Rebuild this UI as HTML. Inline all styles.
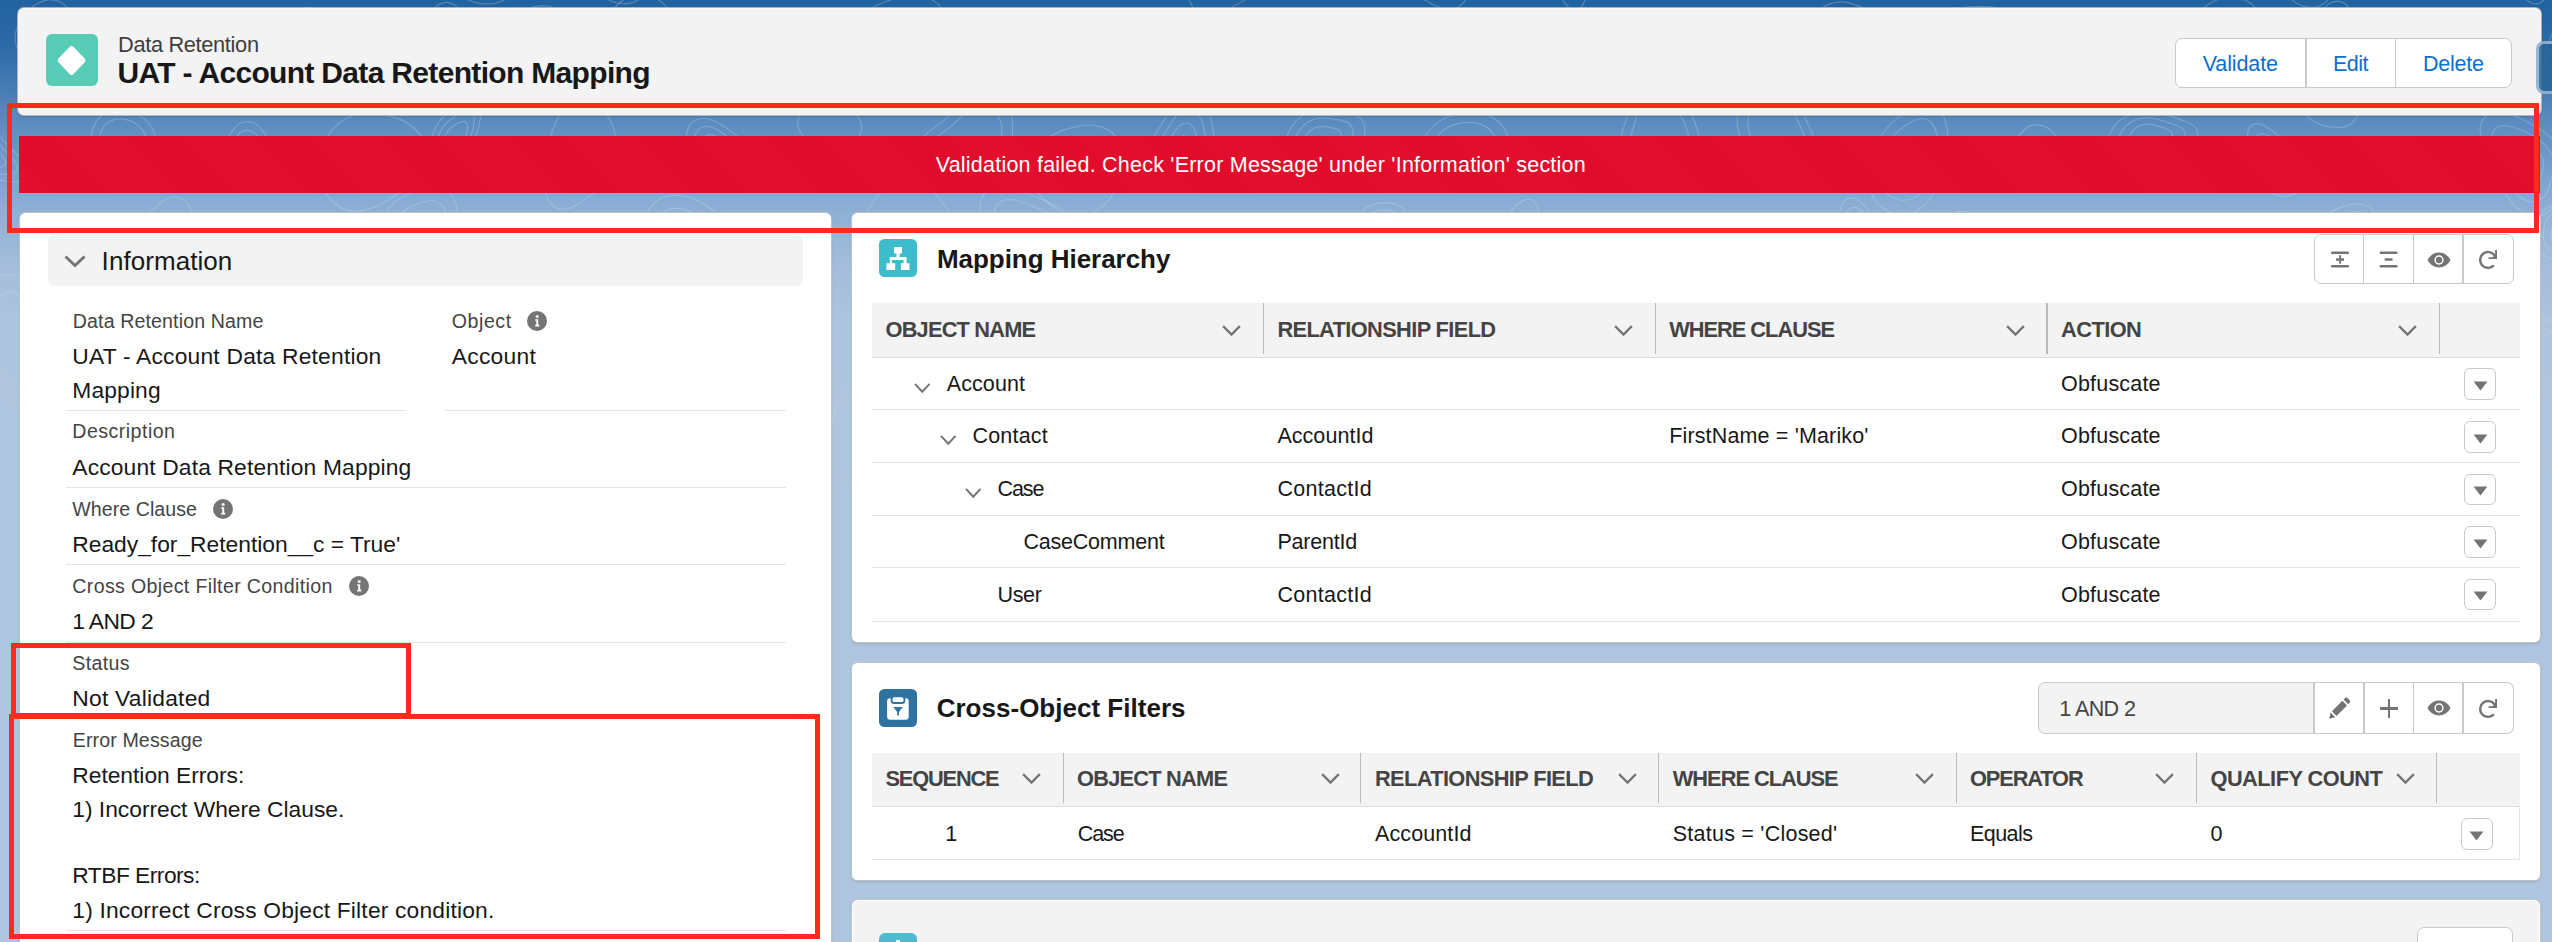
<!DOCTYPE html>
<html><head><meta charset="utf-8"><style>
html,body{margin:0;padding:0;width:2552px;height:942px;overflow:hidden}
body{position:relative;font-family:"Liberation Sans", sans-serif;background-color:#afc4de;background-image:linear-gradient(to bottom,#2162a1 0px,#2c69a7 45px,#4a7fb6 95px,#5a8bbe 120px,#6692c3 140px,#83a8d1 190px,#8fb1d5 215px,#a4bddb 265px,#adc3de 320px,#afc4de 400px)}
.t{position:absolute;white-space:pre}
</style></head><body>

<svg style="position:absolute;left:0;top:0" width="2552" height="600"><defs><linearGradient id="fg" x1="0" y1="0" x2="0" y2="1"><stop offset="0" stop-color="#fff" stop-opacity="1"/><stop offset="0.4" stop-color="#fff" stop-opacity="0.75"/><stop offset="0.85" stop-color="#fff" stop-opacity="0"/></linearGradient><mask id="fm"><rect width="2552" height="600" fill="url(#fg)"/></mask></defs><g mask="url(#fm)" fill="none" stroke="rgba(255,255,255,0.24)" stroke-width="1.15"><path d="M25.4,-18.9 Q17.1,-13.2 9.0,-7.8 Q0.9,-2.5 -8.6,0.8 Q-18.1,4.1 -24.8,1.7 Q-31.6,-0.8 -33.4,-6.8 Q-35.3,-12.9 -35.6,-19.4 Q-35.9,-26.0 -33.5,-34.1 Q-31.1,-42.3 -22.9,-50.1 Q-14.7,-57.9 -4.8,-60.6 Q5.1,-63.3 12.3,-62.7 Q19.5,-62.2 27.0,-62.3 Q34.5,-62.4 41.7,-59.8 Q49.0,-57.2 48.9,-49.3 Q48.8,-41.4 41.2,-33.0 Q33.7,-24.7 25.4,-18.9Z"/><path d="M19.6,-22.6 Q13.4,-18.3 7.4,-14.4 Q1.4,-10.4 -5.6,-8.0 Q-12.6,-5.5 -17.6,-7.3 Q-22.6,-9.2 -24.0,-13.6 Q-25.4,-18.1 -25.6,-22.9 Q-25.8,-27.8 -24.0,-33.8 Q-22.2,-39.9 -16.2,-45.7 Q-10.1,-51.4 -2.8,-53.4 Q4.6,-55.4 9.9,-55.0 Q15.2,-54.6 20.7,-54.7 Q26.3,-54.8 31.6,-52.8 Q37.0,-50.9 36.9,-45.1 Q36.9,-39.2 31.3,-33.0 Q25.7,-26.8 19.6,-22.6Z"/><path d="M300.1,-69.0 Q299.8,-58.8 295.8,-49.6 Q291.8,-40.4 283.5,-33.7 Q275.1,-27.1 264.0,-23.9 Q252.9,-20.8 240.2,-21.2 Q227.5,-21.6 215.5,-27.6 Q203.5,-33.6 198.2,-44.9 Q193.0,-56.2 196.6,-66.9 Q200.1,-77.7 206.4,-85.3 Q212.7,-92.8 219.0,-100.3 Q225.3,-107.8 235.7,-114.2 Q246.1,-120.6 259.8,-119.7 Q273.6,-118.8 283.5,-110.0 Q293.4,-101.1 296.9,-90.2 Q300.4,-79.2 300.1,-69.0Z"/><path d="M287.0,-68.8 Q286.8,-61.3 283.8,-54.5 Q280.9,-47.6 274.7,-42.7 Q268.5,-37.8 260.3,-35.5 Q252.1,-33.2 242.7,-33.4 Q233.3,-33.7 224.4,-38.2 Q215.5,-42.7 211.6,-51.0 Q207.8,-59.3 210.4,-67.3 Q213.0,-75.3 217.7,-80.9 Q222.3,-86.4 227.0,-92.0 Q231.7,-97.5 239.3,-102.3 Q247.0,-107.0 257.2,-106.3 Q267.4,-105.7 274.7,-99.1 Q282.0,-92.6 284.6,-84.5 Q287.2,-76.4 287.0,-68.8Z"/><path d="M273.9,-68.7 Q273.7,-63.8 271.8,-59.3 Q269.9,-54.9 265.9,-51.7 Q261.9,-48.5 256.6,-47.0 Q251.2,-45.5 245.1,-45.7 Q239.0,-45.9 233.3,-48.8 Q227.5,-51.7 225.0,-57.1 Q222.5,-62.5 224.2,-67.7 Q225.9,-72.8 228.9,-76.5 Q231.9,-80.1 235.0,-83.7 Q238.0,-87.3 243.0,-90.3 Q248.0,-93.4 254.5,-93.0 Q261.1,-92.5 265.9,-88.3 Q270.7,-84.1 272.3,-78.8 Q274.0,-73.5 273.9,-68.7Z"/><path d="M260.8,-68.5 Q260.7,-66.2 259.8,-64.2 Q259.0,-62.2 257.1,-60.7 Q255.3,-59.3 252.8,-58.6 Q250.4,-57.9 247.6,-58.0 Q244.8,-58.0 242.2,-59.4 Q239.5,-60.7 238.4,-63.2 Q237.2,-65.7 238.0,-68.0 Q238.8,-70.4 240.2,-72.0 Q241.5,-73.7 242.9,-75.4 Q244.3,-77.0 246.6,-78.4 Q248.9,-79.8 251.9,-79.6 Q254.9,-79.4 257.1,-77.5 Q259.3,-75.5 260.1,-73.1 Q260.8,-70.7 260.8,-68.5Z"/><path d="M376.2,-73.1 Q375.6,-61.0 370.1,-50.0 Q364.7,-38.9 358.1,-33.7 Q351.5,-28.4 345.8,-26.4 Q340.2,-24.4 334.9,-24.6 Q329.6,-24.8 325.6,-29.8 Q321.6,-34.7 320.4,-44.1 Q319.2,-53.4 320.5,-64.5 Q321.8,-75.7 325.6,-87.3 Q329.4,-98.9 335.7,-106.9 Q342.1,-114.9 348.2,-115.3 Q354.4,-115.8 358.5,-111.7 Q362.6,-107.6 366.3,-103.5 Q370.0,-99.4 373.4,-92.3 Q376.8,-85.2 376.2,-73.1Z"/><path d="M368.6,-72.0 Q368.2,-63.0 364.1,-54.9 Q360.1,-46.7 355.2,-42.8 Q350.4,-38.9 346.2,-37.4 Q342.0,-36.0 338.0,-36.1 Q334.1,-36.2 331.2,-39.9 Q328.2,-43.6 327.3,-50.5 Q326.5,-57.4 327.4,-65.7 Q328.4,-73.9 331.2,-82.5 Q334.0,-91.0 338.7,-97.0 Q343.4,-102.9 347.9,-103.2 Q352.5,-103.5 355.5,-100.5 Q358.6,-97.5 361.3,-94.5 Q364.0,-91.4 366.6,-86.2 Q369.1,-81.0 368.6,-72.0Z"/><path d="M361.1,-70.9 Q360.8,-65.1 358.2,-59.8 Q355.5,-54.5 352.4,-51.9 Q349.2,-49.4 346.5,-48.5 Q343.8,-47.5 341.2,-47.6 Q338.7,-47.7 336.8,-50.1 Q334.9,-52.4 334.3,-56.9 Q333.7,-61.4 334.3,-66.8 Q334.9,-72.1 336.8,-77.7 Q338.6,-83.2 341.6,-87.1 Q344.7,-90.9 347.6,-91.1 Q350.6,-91.3 352.6,-89.4 Q354.5,-87.4 356.3,-85.5 Q358.1,-83.5 359.7,-80.1 Q361.4,-76.7 361.1,-70.9Z"/><path d="M353.5,-69.7 Q353.4,-67.1 352.2,-64.7 Q351.0,-62.2 349.5,-61.1 Q348.1,-59.9 346.8,-59.5 Q345.6,-59.0 344.4,-59.1 Q343.2,-59.1 342.4,-60.2 Q341.5,-61.3 341.2,-63.4 Q341.0,-65.4 341.2,-67.9 Q341.5,-70.3 342.4,-72.9 Q343.2,-75.4 344.6,-77.2 Q346.0,-78.9 347.3,-79.0 Q348.7,-79.1 349.6,-78.2 Q350.5,-77.3 351.3,-76.4 Q352.1,-75.5 352.9,-74.0 Q353.6,-72.4 353.5,-69.7Z"/><path d="M455.7,-8.0 Q442.6,-18.4 436.0,-32.6 Q429.5,-46.8 430.0,-57.3 Q430.4,-67.8 431.8,-75.9 Q433.2,-84.1 436.1,-92.2 Q439.0,-100.3 447.7,-103.3 Q456.4,-106.4 468.9,-100.9 Q481.4,-95.5 493.0,-84.9 Q504.5,-74.3 512.9,-61.7 Q521.3,-49.1 524.2,-37.1 Q527.2,-25.1 523.7,-17.2 Q520.3,-9.4 514.0,-5.4 Q507.7,-1.4 500.0,1.7 Q492.4,4.8 480.7,3.6 Q468.9,2.3 455.7,-8.0Z"/><path d="M640.3,-1.5 Q632.5,4.4 622.8,3.8 Q613.1,3.2 603.7,-2.8 Q594.2,-8.7 586.4,-19.3 Q578.6,-29.8 575.2,-43.6 Q571.9,-57.4 574.6,-69.7 Q577.3,-81.9 583.2,-89.9 Q589.1,-97.9 596.1,-103.8 Q603.1,-109.7 612.4,-112.4 Q621.7,-115.1 632.1,-109.7 Q642.4,-104.3 649.1,-91.7 Q655.7,-79.0 657.3,-65.5 Q658.8,-51.9 657.5,-40.0 Q656.1,-28.0 652.1,-17.7 Q648.0,-7.4 640.3,-1.5Z"/><path d="M731.5,-41.4 Q733.4,-33.6 730.2,-24.9 Q727.0,-16.2 719.9,-12.5 Q712.9,-8.8 706.5,-9.4 Q700.1,-9.9 694.3,-11.0 Q688.5,-12.1 683.3,-16.1 Q678.1,-20.0 677.0,-27.9 Q675.9,-35.7 678.5,-43.3 Q681.1,-50.8 684.1,-57.7 Q687.2,-64.6 691.8,-72.1 Q696.4,-79.6 703.8,-82.6 Q711.2,-85.5 716.6,-80.4 Q722.1,-75.2 723.8,-67.9 Q725.6,-60.7 727.6,-54.9 Q729.6,-49.2 731.5,-41.4Z"/><path d="M724.6,-41.8 Q726.0,-36.1 723.6,-29.6 Q721.3,-23.2 716.0,-20.4 Q710.8,-17.7 706.1,-18.1 Q701.3,-18.5 697.0,-19.3 Q692.7,-20.1 688.9,-23.1 Q685.1,-26.0 684.3,-31.8 Q683.4,-37.6 685.4,-43.2 Q687.3,-48.8 689.6,-53.9 Q691.8,-59.0 695.2,-64.5 Q698.6,-70.1 704.1,-72.3 Q709.5,-74.5 713.6,-70.7 Q717.6,-66.9 718.9,-61.5 Q720.2,-56.1 721.7,-51.8 Q723.2,-47.6 724.6,-41.8Z"/><path d="M717.7,-42.3 Q718.6,-38.5 717.1,-34.3 Q715.5,-30.1 712.1,-28.4 Q708.7,-26.6 705.7,-26.9 Q702.6,-27.1 699.8,-27.6 Q697.0,-28.2 694.5,-30.1 Q692.0,-32.0 691.5,-35.7 Q691.0,-39.5 692.3,-43.1 Q693.5,-46.8 695.0,-50.1 Q696.4,-53.4 698.6,-57.0 Q700.8,-60.6 704.4,-62.0 Q707.9,-63.4 710.5,-61.0 Q713.2,-58.5 714.0,-55.0 Q714.8,-51.5 715.8,-48.7 Q716.8,-46.0 717.7,-42.3Z"/><path d="M913.5,-39.1 Q912.7,-46.7 914.6,-53.5 Q916.5,-60.4 919.3,-67.4 Q922.1,-74.5 927.9,-81.5 Q933.6,-88.5 942.8,-89.8 Q951.9,-91.2 958.7,-84.5 Q965.4,-77.9 967.0,-69.5 Q968.7,-61.1 969.8,-54.8 Q970.9,-48.5 972.7,-40.9 Q974.5,-33.3 972.0,-24.7 Q969.4,-16.2 961.6,-12.0 Q953.9,-7.8 945.4,-9.1 Q937.0,-10.5 930.2,-14.7 Q923.4,-18.9 918.8,-25.2 Q914.3,-31.5 913.5,-39.1Z"/><path d="M921.4,-41.3 Q920.8,-46.9 922.2,-52.0 Q923.6,-57.1 925.7,-62.3 Q927.8,-67.5 932.0,-72.7 Q936.3,-77.9 943.1,-78.9 Q949.8,-79.9 954.8,-74.9 Q959.8,-70.0 961.0,-63.8 Q962.2,-57.6 963.1,-52.9 Q963.9,-48.3 965.2,-42.6 Q966.6,-37.0 964.7,-30.7 Q962.8,-24.3 957.0,-21.2 Q951.3,-18.1 945.0,-19.1 Q938.8,-20.2 933.8,-23.2 Q928.7,-26.3 925.3,-31.0 Q922.0,-35.7 921.4,-41.3Z"/><path d="M1185.4,-28.5 Q1186.6,-45.0 1189.0,-57.9 Q1191.4,-70.8 1194.2,-84.5 Q1197.0,-98.2 1204.4,-107.6 Q1211.7,-117.0 1221.0,-114.2 Q1230.3,-111.4 1237.5,-103.0 Q1244.6,-94.6 1251.8,-85.7 Q1258.9,-76.8 1264.3,-62.3 Q1269.8,-47.8 1267.1,-31.7 Q1264.3,-15.5 1255.8,-8.1 Q1247.2,-0.7 1239.9,2.8 Q1232.7,6.2 1224.9,12.4 Q1217.2,18.7 1206.8,17.8 Q1196.4,16.9 1190.3,2.5 Q1184.2,-11.9 1185.4,-28.5Z"/><path d="M1325.3,-23.4 Q1316.9,-18.6 1307.4,-15.1 Q1298.0,-11.7 1288.5,-10.7 Q1279.0,-9.6 1273.3,-12.6 Q1267.5,-15.6 1268.1,-21.3 Q1268.6,-27.0 1272.1,-32.6 Q1275.7,-38.1 1279.7,-43.7 Q1283.6,-49.3 1290.8,-55.5 Q1298.0,-61.7 1308.5,-65.4 Q1318.9,-69.2 1327.2,-68.2 Q1335.4,-67.2 1339.4,-63.5 Q1343.4,-59.8 1345.2,-55.4 Q1347.0,-51.1 1345.9,-45.6 Q1344.9,-40.2 1339.3,-34.2 Q1333.8,-28.3 1325.3,-23.4Z"/><path d="M1320.8,-27.5 Q1314.6,-23.9 1307.6,-21.4 Q1300.6,-18.9 1293.5,-18.1 Q1286.5,-17.3 1282.3,-19.5 Q1278.0,-21.7 1278.4,-25.9 Q1278.8,-30.2 1281.4,-34.3 Q1284.1,-38.4 1287.0,-42.5 Q1290.0,-46.6 1295.3,-51.2 Q1300.6,-55.8 1308.3,-58.6 Q1316.0,-61.4 1322.2,-60.6 Q1328.3,-59.9 1331.2,-57.1 Q1334.2,-54.4 1335.5,-51.2 Q1336.8,-48.0 1336.1,-43.9 Q1335.3,-39.9 1331.2,-35.5 Q1327.1,-31.1 1320.8,-27.5Z"/><path d="M1316.3,-31.6 Q1312.2,-29.2 1307.7,-27.6 Q1303.1,-26.0 1298.6,-25.5 Q1294.0,-24.9 1291.3,-26.4 Q1288.5,-27.8 1288.8,-30.6 Q1289.1,-33.3 1290.7,-36.0 Q1292.4,-38.6 1294.4,-41.3 Q1296.3,-44.0 1299.7,-47.0 Q1303.2,-49.9 1308.2,-51.7 Q1313.2,-53.6 1317.1,-53.1 Q1321.1,-52.6 1323.0,-50.8 Q1325.0,-49.0 1325.8,-46.9 Q1326.7,-44.8 1326.2,-42.2 Q1325.7,-39.6 1323.0,-36.8 Q1320.3,-33.9 1316.3,-31.6Z"/><path d="M1468.9,-10.2 Q1467.9,-0.1 1460.3,5.5 Q1452.7,11.2 1440.3,7.5 Q1427.8,3.9 1417.5,-5.8 Q1407.1,-15.5 1400.4,-24.6 Q1393.6,-33.7 1386.3,-42.7 Q1379.0,-51.8 1373.2,-63.7 Q1367.4,-75.6 1369.8,-85.6 Q1372.1,-95.6 1382.2,-97.9 Q1392.2,-100.2 1403.8,-96.2 Q1415.5,-92.2 1425.8,-85.5 Q1436.2,-78.8 1444.7,-70.0 Q1453.2,-61.2 1458.8,-51.2 Q1464.4,-41.1 1467.1,-30.7 Q1469.9,-20.3 1468.9,-10.2Z"/><path d="M1456.5,-19.7 Q1455.8,-12.2 1450.2,-8.0 Q1444.6,-3.8 1435.4,-6.5 Q1426.2,-9.2 1418.5,-16.4 Q1410.8,-23.6 1405.8,-30.3 Q1400.8,-37.0 1395.4,-43.7 Q1390.0,-50.4 1385.7,-59.2 Q1381.5,-68.0 1383.2,-75.4 Q1384.9,-82.8 1392.3,-84.5 Q1399.8,-86.2 1408.4,-83.3 Q1417.0,-80.4 1424.7,-75.4 Q1432.3,-70.4 1438.6,-63.9 Q1444.9,-57.4 1449.1,-50.0 Q1453.2,-42.5 1455.2,-34.8 Q1457.2,-27.1 1456.5,-19.7Z"/><path d="M1554.3,-22.1 Q1552.5,-30.1 1552.8,-38.0 Q1553.1,-45.9 1555.4,-51.7 Q1557.7,-57.5 1560.7,-62.1 Q1563.7,-66.8 1567.9,-70.4 Q1572.1,-74.1 1577.5,-72.2 Q1583.0,-70.3 1586.3,-61.6 Q1589.7,-52.8 1589.5,-43.6 Q1589.2,-34.4 1588.4,-27.8 Q1587.5,-21.3 1587.2,-13.7 Q1586.8,-6.2 1584.4,1.2 Q1581.9,8.6 1576.9,9.8 Q1571.8,11.0 1567.1,5.8 Q1562.4,0.5 1559.3,-6.8 Q1556.1,-14.1 1554.3,-22.1Z"/><path d="M1558.9,-24.8 Q1557.6,-30.7 1557.8,-36.5 Q1558.0,-42.4 1559.7,-46.7 Q1561.4,-51.0 1563.6,-54.4 Q1565.8,-57.8 1568.9,-60.5 Q1572.1,-63.3 1576.1,-61.9 Q1580.1,-60.5 1582.6,-54.0 Q1585.1,-47.5 1584.9,-40.7 Q1584.7,-33.9 1584.1,-29.0 Q1583.4,-24.2 1583.2,-18.6 Q1583.0,-13.0 1581.1,-7.5 Q1579.3,-2.0 1575.6,-1.2 Q1571.9,-0.3 1568.4,-4.2 Q1564.9,-8.0 1562.6,-13.5 Q1560.2,-18.9 1558.9,-24.8Z"/><path d="M1563.5,-27.5 Q1562.6,-31.3 1562.8,-35.1 Q1562.9,-38.9 1564.0,-41.7 Q1565.1,-44.5 1566.6,-46.7 Q1568.0,-48.9 1570.0,-50.6 Q1572.0,-52.4 1574.6,-51.5 Q1577.2,-50.6 1578.9,-46.4 Q1580.5,-42.2 1580.4,-37.8 Q1580.3,-33.4 1579.8,-30.2 Q1579.4,-27.1 1579.3,-23.4 Q1579.1,-19.8 1577.9,-16.3 Q1576.7,-12.7 1574.3,-12.1 Q1571.9,-11.6 1569.7,-14.1 Q1567.4,-16.6 1565.9,-20.1 Q1564.4,-23.6 1563.5,-27.5Z"/><path d="M1568.1,-30.1 Q1567.7,-31.9 1567.8,-33.6 Q1567.8,-35.4 1568.3,-36.6 Q1568.8,-37.9 1569.5,-38.9 Q1570.1,-39.9 1571.1,-40.8 Q1572.0,-41.6 1573.2,-41.2 Q1574.4,-40.7 1575.1,-38.8 Q1575.9,-36.9 1575.8,-34.9 Q1575.8,-32.8 1575.6,-31.4 Q1575.4,-29.9 1575.3,-28.3 Q1575.2,-26.6 1574.7,-25.0 Q1574.2,-23.4 1573.0,-23.1 Q1571.9,-22.8 1570.9,-24.0 Q1569.9,-25.1 1569.2,-26.8 Q1568.5,-28.4 1568.1,-30.1Z"/><path d="M1693.6,-19.3 Q1681.9,-15.5 1668.3,-19.0 Q1654.6,-22.5 1648.8,-32.6 Q1642.9,-42.6 1644.2,-51.6 Q1645.6,-60.6 1646.0,-68.2 Q1646.5,-75.9 1648.9,-84.8 Q1651.3,-93.8 1661.6,-99.0 Q1671.9,-104.3 1684.8,-102.0 Q1697.8,-99.7 1708.1,-94.5 Q1718.4,-89.2 1727.9,-83.0 Q1737.4,-76.7 1742.7,-67.7 Q1748.1,-58.6 1743.9,-50.0 Q1739.7,-41.5 1730.8,-36.7 Q1721.9,-32.0 1713.6,-27.6 Q1705.3,-23.2 1693.6,-19.3Z"/><path d="M1692.7,-29.8 Q1684.1,-27.0 1674.0,-29.6 Q1663.9,-32.2 1659.5,-39.6 Q1655.2,-47.1 1656.2,-53.7 Q1657.2,-60.4 1657.5,-66.0 Q1657.9,-71.7 1659.6,-78.3 Q1661.4,-84.9 1669.0,-88.8 Q1676.7,-92.7 1686.2,-91.0 Q1695.8,-89.3 1703.5,-85.4 Q1711.1,-81.5 1718.1,-76.9 Q1725.1,-72.3 1729.1,-65.6 Q1733.0,-58.9 1729.9,-52.6 Q1726.8,-46.2 1720.3,-42.7 Q1713.7,-39.2 1707.5,-35.9 Q1701.4,-32.7 1692.7,-29.8Z"/><path d="M1691.8,-40.3 Q1686.2,-38.5 1679.7,-40.2 Q1673.1,-41.9 1670.3,-46.7 Q1667.5,-51.5 1668.2,-55.8 Q1668.8,-60.1 1669.0,-63.8 Q1669.2,-67.5 1670.4,-71.8 Q1671.5,-76.1 1676.5,-78.6 Q1681.4,-81.1 1687.6,-80.0 Q1693.9,-78.9 1698.8,-76.4 Q1703.8,-73.9 1708.3,-70.9 Q1712.8,-67.9 1715.4,-63.5 Q1718.0,-59.2 1716.0,-55.1 Q1714.0,-51.0 1709.7,-48.7 Q1705.4,-46.4 1701.4,-44.3 Q1697.5,-42.2 1691.8,-40.3Z"/><path d="M1691.0,-50.8 Q1688.4,-50.0 1685.4,-50.8 Q1682.4,-51.5 1681.1,-53.8 Q1679.8,-56.0 1680.1,-57.9 Q1680.4,-59.9 1680.5,-61.6 Q1680.6,-63.3 1681.1,-65.2 Q1681.7,-67.2 1683.9,-68.4 Q1686.2,-69.5 1689.0,-69.0 Q1691.9,-68.5 1694.2,-67.4 Q1696.4,-66.2 1698.5,-64.8 Q1700.6,-63.5 1701.8,-61.5 Q1703.0,-59.5 1702.0,-57.6 Q1701.1,-55.7 1699.2,-54.7 Q1697.2,-53.6 1695.4,-52.6 Q1693.5,-51.7 1691.0,-50.8Z"/><path d="M1839.7,-39.5 Q1832.0,-26.6 1817.7,-17.6 Q1803.4,-8.5 1790.9,-7.6 Q1778.5,-6.7 1770.4,-10.1 Q1762.3,-13.5 1757.2,-19.2 Q1752.1,-24.9 1752.6,-34.3 Q1753.0,-43.6 1759.4,-54.3 Q1765.7,-65.0 1774.6,-75.5 Q1783.6,-85.9 1795.8,-96.6 Q1808.0,-107.3 1822.6,-113.2 Q1837.2,-119.1 1845.8,-114.3 Q1854.3,-109.5 1853.7,-99.1 Q1853.1,-88.7 1851.3,-80.1 Q1849.5,-71.4 1848.5,-61.8 Q1847.4,-52.3 1839.7,-39.5Z"/><path d="M1830.9,-44.5 Q1825.1,-35.0 1814.6,-28.3 Q1804.0,-21.6 1794.8,-20.9 Q1785.6,-20.2 1779.6,-22.7 Q1773.6,-25.2 1769.8,-29.5 Q1766.0,-33.7 1766.4,-40.7 Q1766.7,-47.6 1771.4,-55.5 Q1776.1,-63.4 1782.7,-71.1 Q1789.3,-78.9 1798.3,-86.8 Q1807.4,-94.7 1818.2,-99.0 Q1829.0,-103.4 1835.3,-99.9 Q1841.7,-96.3 1841.2,-88.6 Q1840.8,-80.9 1839.4,-74.5 Q1838.1,-68.1 1837.3,-61.1 Q1836.6,-54.0 1830.9,-44.5Z"/><path d="M1962.9,-71.9 Q1960.4,-64.5 1958.3,-59.5 Q1956.2,-54.4 1954.8,-47.6 Q1953.3,-40.7 1949.1,-34.1 Q1945.0,-27.5 1939.4,-28.2 Q1933.9,-28.8 1930.8,-35.4 Q1927.7,-42.0 1926.6,-48.7 Q1925.5,-55.5 1924.9,-62.0 Q1924.3,-68.4 1925.7,-75.2 Q1927.1,-82.0 1930.6,-86.7 Q1934.2,-91.4 1938.4,-94.3 Q1942.6,-97.2 1947.6,-99.1 Q1952.7,-101.0 1957.8,-98.3 Q1962.8,-95.5 1964.1,-87.4 Q1965.5,-79.3 1962.9,-71.9Z"/><path d="M1957.9,-70.4 Q1956.0,-64.9 1954.5,-61.2 Q1952.9,-57.5 1951.9,-52.4 Q1950.8,-47.3 1947.7,-42.5 Q1944.6,-37.6 1940.5,-38.1 Q1936.4,-38.6 1934.1,-43.4 Q1931.9,-48.3 1931.0,-53.3 Q1930.2,-58.3 1929.8,-63.1 Q1929.4,-67.9 1930.4,-72.9 Q1931.4,-77.9 1934.0,-81.4 Q1936.7,-84.9 1939.8,-87.1 Q1942.9,-89.2 1946.6,-90.6 Q1950.3,-92.0 1954.1,-90.0 Q1957.8,-87.9 1958.8,-81.9 Q1959.8,-75.9 1957.9,-70.4Z"/><path d="M1952.9,-69.0 Q1951.7,-65.4 1950.7,-63.0 Q1949.7,-60.6 1949.0,-57.3 Q1948.3,-54.0 1946.3,-50.8 Q1944.3,-47.7 1941.6,-48.0 Q1939.0,-48.3 1937.5,-51.5 Q1936.0,-54.6 1935.5,-57.9 Q1934.9,-61.1 1934.7,-64.2 Q1934.4,-67.3 1935.0,-70.6 Q1935.7,-73.8 1937.4,-76.1 Q1939.1,-78.4 1941.1,-79.8 Q1943.1,-81.2 1945.6,-82.1 Q1948.0,-83.0 1950.4,-81.7 Q1952.9,-80.3 1953.5,-76.4 Q1954.1,-72.5 1952.9,-69.0Z"/><path d="M1947.9,-67.5 Q1947.3,-65.9 1946.9,-64.8 Q1946.4,-63.7 1946.1,-62.2 Q1945.8,-60.7 1944.9,-59.2 Q1943.9,-57.8 1942.7,-57.9 Q1941.5,-58.1 1940.8,-59.5 Q1940.1,-61.0 1939.9,-62.4 Q1939.7,-63.9 1939.5,-65.4 Q1939.4,-66.8 1939.7,-68.3 Q1940.0,-69.8 1940.8,-70.8 Q1941.6,-71.8 1942.5,-72.5 Q1943.4,-73.1 1944.5,-73.5 Q1945.6,-74.0 1946.8,-73.3 Q1947.9,-72.7 1948.2,-71.0 Q1948.4,-69.2 1947.9,-67.5Z"/><path d="M2173.6,-16.4 Q2167.8,-16.3 2161.3,-17.2 Q2154.8,-18.1 2149.5,-21.1 Q2144.2,-24.1 2142.0,-28.0 Q2139.9,-32.0 2140.3,-35.9 Q2140.7,-39.7 2143.8,-43.0 Q2146.9,-46.3 2153.0,-47.7 Q2159.1,-49.0 2165.7,-47.9 Q2172.3,-46.7 2177.6,-44.8 Q2183.0,-42.9 2188.6,-40.6 Q2194.2,-38.4 2199.0,-34.7 Q2203.8,-30.9 2203.4,-26.6 Q2202.9,-22.3 2197.3,-19.9 Q2191.8,-17.6 2185.6,-17.1 Q2179.4,-16.6 2173.6,-16.4Z"/><path d="M2278.1,-13.4 Q2272.4,-19.1 2265.1,-25.5 Q2257.9,-31.8 2255.4,-42.1 Q2252.9,-52.4 2259.0,-60.9 Q2265.2,-69.4 2274.0,-73.3 Q2282.8,-77.3 2291.6,-80.4 Q2300.3,-83.5 2310.6,-83.2 Q2320.9,-82.9 2327.9,-75.2 Q2334.9,-67.5 2335.4,-57.7 Q2335.8,-47.9 2335.6,-39.7 Q2335.3,-31.6 2335.5,-21.3 Q2335.7,-11.0 2329.1,-1.6 Q2322.6,7.8 2311.1,7.4 Q2299.7,7.1 2291.7,-0.3 Q2283.8,-7.6 2278.1,-13.4Z"/><path d="M2283.8,-20.4 Q2279.6,-24.7 2274.2,-29.4 Q2268.8,-34.1 2267.0,-41.7 Q2265.1,-49.3 2269.7,-55.6 Q2274.2,-61.9 2280.8,-64.8 Q2287.3,-67.8 2293.8,-70.0 Q2300.2,-72.3 2307.9,-72.1 Q2315.5,-71.9 2320.7,-66.2 Q2325.9,-60.5 2326.2,-53.2 Q2326.5,-46.0 2326.3,-39.9 Q2326.2,-33.9 2326.3,-26.3 Q2326.4,-18.7 2321.6,-11.7 Q2316.7,-4.7 2308.2,-5.0 Q2299.8,-5.3 2293.9,-10.7 Q2288.0,-16.2 2283.8,-20.4Z"/><path d="M2289.5,-27.5 Q2286.7,-30.3 2283.3,-33.3 Q2279.8,-36.4 2278.6,-41.3 Q2277.4,-46.2 2280.3,-50.3 Q2283.3,-54.4 2287.5,-56.3 Q2291.8,-58.2 2296.0,-59.7 Q2300.2,-61.2 2305.1,-61.0 Q2310.0,-60.9 2313.4,-57.2 Q2316.8,-53.5 2317.0,-48.8 Q2317.2,-44.1 2317.1,-40.1 Q2317.0,-36.2 2317.0,-31.3 Q2317.1,-26.3 2314.0,-21.8 Q2310.9,-17.3 2305.3,-17.5 Q2299.8,-17.7 2296.0,-21.2 Q2292.2,-24.7 2289.5,-27.5Z"/><path d="M2381.0,-11.9 Q2373.3,-10.2 2367.4,-13.7 Q2361.5,-17.3 2363.8,-26.8 Q2366.0,-36.3 2373.4,-44.7 Q2380.9,-53.1 2387.3,-58.7 Q2393.7,-64.3 2400.1,-70.5 Q2406.5,-76.6 2414.6,-80.7 Q2422.7,-84.8 2428.5,-82.5 Q2434.3,-80.2 2436.2,-73.9 Q2438.0,-67.6 2437.8,-60.2 Q2437.6,-52.9 2434.2,-44.1 Q2430.8,-35.4 2423.4,-28.3 Q2415.9,-21.3 2408.5,-18.9 Q2401.1,-16.5 2394.9,-15.1 Q2388.7,-13.7 2381.0,-11.9Z"/><path d="M2508.9,-32.7 Q2506.0,-43.3 2506.4,-54.0 Q2506.7,-64.7 2510.0,-71.8 Q2513.2,-79.0 2517.2,-83.7 Q2521.1,-88.3 2526.0,-92.3 Q2530.9,-96.3 2537.4,-95.0 Q2543.9,-93.7 2548.9,-83.9 Q2553.9,-74.1 2554.7,-62.0 Q2555.5,-50.0 2554.3,-40.7 Q2553.1,-31.5 2551.8,-22.7 Q2550.6,-13.9 2547.4,-6.0 Q2544.2,1.9 2538.4,3.6 Q2532.7,5.3 2526.8,0.1 Q2520.9,-5.1 2516.3,-13.6 Q2511.7,-22.1 2508.9,-32.7Z"/><path d="M2745.5,6.2 Q2737.0,5.9 2731.9,-1.0 Q2726.9,-7.8 2726.3,-18.9 Q2725.7,-29.9 2728.0,-42.4 Q2730.2,-55.0 2735.9,-69.0 Q2741.6,-83.1 2751.7,-94.3 Q2761.9,-105.5 2772.1,-107.7 Q2782.4,-109.8 2789.0,-105.2 Q2795.5,-100.6 2800.5,-95.0 Q2805.5,-89.5 2809.6,-81.2 Q2813.6,-72.8 2812.0,-59.2 Q2810.4,-45.6 2802.2,-32.1 Q2793.9,-18.7 2783.7,-10.3 Q2773.4,-1.9 2763.8,2.3 Q2754.1,6.6 2745.5,6.2Z"/><path d="M2751.4,-8.5 Q2745.0,-8.8 2741.3,-13.9 Q2737.6,-18.9 2737.1,-27.1 Q2736.7,-35.3 2738.4,-44.6 Q2740.0,-53.8 2744.2,-64.2 Q2748.4,-74.6 2756.0,-82.9 Q2763.5,-91.2 2771.1,-92.8 Q2778.7,-94.4 2783.5,-91.0 Q2788.4,-87.6 2792.1,-83.5 Q2795.8,-79.4 2798.8,-73.2 Q2801.7,-67.0 2800.6,-56.9 Q2799.4,-46.9 2793.3,-36.9 Q2787.2,-27.0 2779.6,-20.8 Q2772.0,-14.6 2764.9,-11.4 Q2757.7,-8.3 2751.4,-8.5Z"/><path d="M2757.2,-23.3 Q2753.1,-23.4 2750.7,-26.7 Q2748.3,-30.1 2748.0,-35.3 Q2747.7,-40.6 2748.8,-46.7 Q2749.8,-52.7 2752.6,-59.4 Q2755.3,-66.2 2760.2,-71.5 Q2765.1,-76.9 2770.0,-78.0 Q2774.9,-79.0 2778.1,-76.8 Q2781.2,-74.6 2783.6,-71.9 Q2786.0,-69.2 2788.0,-65.2 Q2789.9,-61.2 2789.1,-54.7 Q2788.4,-48.2 2784.4,-41.7 Q2780.4,-35.2 2775.5,-31.2 Q2770.6,-27.2 2766.0,-25.2 Q2761.3,-23.1 2757.2,-23.3Z"/><path d="M-9.3,56.3 Q-12.5,66.1 -20.7,73.6 Q-28.9,81.1 -38.3,83.3 Q-47.6,85.6 -56.3,85.6 Q-65.1,85.5 -73.5,82.4 Q-81.9,79.3 -84.5,69.9 Q-87.0,60.5 -81.3,50.0 Q-75.5,39.5 -68.5,32.6 Q-61.5,25.7 -55.9,17.8 Q-50.4,10.0 -41.1,1.1 Q-31.8,-7.7 -21.1,-8.1 Q-10.4,-8.6 -6.4,0.6 Q-2.3,9.8 -3.5,19.7 Q-4.6,29.7 -5.4,38.1 Q-6.2,46.6 -9.3,56.3Z"/><path d="M-17.4,52.9 Q-19.8,60.1 -25.8,65.7 Q-31.9,71.2 -38.8,72.9 Q-45.7,74.5 -52.2,74.5 Q-58.7,74.5 -64.9,72.2 Q-71.1,69.9 -73.0,62.9 Q-74.9,56.0 -70.6,48.2 Q-66.4,40.4 -61.2,35.3 Q-56.0,30.2 -51.9,24.4 Q-47.8,18.6 -40.9,12.0 Q-34.1,5.5 -26.1,5.2 Q-18.2,4.9 -15.2,11.7 Q-12.2,18.5 -13.1,25.8 Q-13.9,33.2 -14.5,39.4 Q-15.1,45.7 -17.4,52.9Z"/><path d="M69.4,54.1 Q67.5,61.1 61.4,65.9 Q55.3,70.8 47.3,70.4 Q39.3,69.9 32.7,65.8 Q26.1,61.7 21.6,55.9 Q17.1,50.0 15.6,43.0 Q14.2,36.0 16.4,29.5 Q18.5,23.1 22.4,18.0 Q26.3,12.8 31.4,8.0 Q36.6,3.1 44.4,0.6 Q52.1,-1.9 59.8,1.8 Q67.4,5.5 70.3,13.3 Q73.2,21.1 72.6,28.0 Q72.1,34.9 71.7,41.0 Q71.3,47.1 69.4,54.1Z"/><path d="M208.3,84.7 Q205.9,91.1 199.3,92.6 Q192.7,94.1 185.0,92.6 Q177.3,91.1 168.4,87.4 Q159.5,83.6 151.1,75.2 Q142.7,66.7 140.6,56.7 Q138.5,46.7 142.2,40.9 Q145.9,35.2 148.8,30.8 Q151.8,26.5 154.8,20.2 Q157.8,14.0 165.8,12.2 Q173.7,10.5 183.2,17.8 Q192.7,25.0 197.8,35.2 Q202.9,45.4 205.2,53.8 Q207.6,62.2 209.2,70.3 Q210.7,78.4 208.3,84.7Z"/><path d="M199.8,77.0 Q198.0,81.7 193.2,82.8 Q188.3,83.9 182.6,82.8 Q176.9,81.7 170.3,79.0 Q163.7,76.2 157.5,69.9 Q151.3,63.6 149.7,56.3 Q148.2,48.9 150.9,44.6 Q153.6,40.3 155.8,37.1 Q158.0,33.9 160.2,29.3 Q162.4,24.6 168.3,23.3 Q174.3,22.1 181.3,27.5 Q188.3,32.8 192.0,40.4 Q195.8,47.9 197.6,54.1 Q199.3,60.3 200.5,66.3 Q201.6,72.3 199.8,77.0Z"/><path d="M191.4,69.3 Q190.2,72.3 187.0,73.1 Q183.9,73.8 180.2,73.1 Q176.5,72.3 172.2,70.5 Q167.9,68.8 163.9,64.7 Q159.9,60.6 158.9,55.8 Q157.9,51.0 159.6,48.3 Q161.4,45.5 162.8,43.4 Q164.2,41.3 165.7,38.3 Q167.1,35.3 170.9,34.5 Q174.8,33.6 179.3,37.1 Q183.9,40.6 186.3,45.5 Q188.7,50.4 189.9,54.4 Q191.0,58.5 191.8,62.4 Q192.5,66.2 191.4,69.3Z"/><path d="M292.4,66.4 Q286.6,59.8 283.3,52.6 Q279.9,45.4 279.1,38.3 Q278.2,31.2 280.6,25.3 Q282.9,19.4 287.5,15.4 Q292.0,11.5 298.2,9.1 Q304.3,6.7 312.2,7.5 Q320.1,8.3 327.1,14.4 Q334.0,20.4 336.2,28.7 Q338.3,37.0 337.0,43.5 Q335.7,50.1 334.4,55.8 Q333.1,61.6 330.2,67.7 Q327.4,73.8 320.7,76.6 Q314.0,79.4 306.1,76.2 Q298.1,72.9 292.4,66.4Z"/><path d="M463.1,28.4 Q462.3,35.2 460.6,40.5 Q458.9,45.8 457.3,51.6 Q455.6,57.4 452.0,63.2 Q448.3,68.9 442.9,69.7 Q437.4,70.5 433.4,65.2 Q429.4,59.8 428.2,52.9 Q427.0,45.9 426.7,40.0 Q426.5,34.0 426.9,27.9 Q427.3,21.8 429.6,15.9 Q431.9,10.1 436.1,6.5 Q440.4,2.9 445.4,2.4 Q450.4,2.0 455.0,5.2 Q459.5,8.5 461.7,15.1 Q463.9,21.7 463.1,28.4Z"/><path d="M458.2,30.0 Q457.6,35.1 456.3,39.0 Q455.1,42.9 453.9,47.2 Q452.6,51.5 449.9,55.7 Q447.3,60.0 443.2,60.6 Q439.1,61.2 436.2,57.2 Q433.2,53.3 432.3,48.1 Q431.4,43.0 431.3,38.6 Q431.1,34.2 431.4,29.6 Q431.7,25.1 433.4,20.8 Q435.1,16.4 438.2,13.8 Q441.4,11.1 445.1,10.8 Q448.8,10.5 452.2,12.9 Q455.5,15.3 457.2,20.2 Q458.8,25.0 458.2,30.0Z"/><path d="M453.3,31.7 Q452.9,34.9 452.1,37.4 Q451.3,40.0 450.5,42.8 Q449.7,45.5 447.9,48.3 Q446.2,51.1 443.6,51.5 Q440.9,51.9 439.0,49.3 Q437.1,46.7 436.5,43.4 Q435.9,40.1 435.8,37.2 Q435.7,34.3 435.9,31.4 Q436.1,28.5 437.2,25.6 Q438.3,22.8 440.3,21.1 Q442.4,19.4 444.8,19.2 Q447.2,18.9 449.4,20.5 Q451.6,22.1 452.6,25.2 Q453.6,28.4 453.3,31.7Z"/><path d="M535.3,52.4 Q529.7,47.9 524.7,40.1 Q519.6,32.3 519.7,23.9 Q519.8,15.5 524.6,11.5 Q529.3,7.5 534.7,6.6 Q540.0,5.6 545.5,5.7 Q551.0,5.9 557.0,9.3 Q562.9,12.7 567.4,19.5 Q571.8,26.3 574.2,33.8 Q576.6,41.2 577.9,49.2 Q579.2,57.1 577.3,64.3 Q575.4,71.4 569.3,72.8 Q563.2,74.3 556.9,70.0 Q550.5,65.7 545.7,61.3 Q540.9,56.8 535.3,52.4Z"/><path d="M539.3,48.4 Q535.2,45.1 531.4,39.3 Q527.7,33.5 527.8,27.3 Q527.8,21.1 531.4,18.2 Q534.9,15.2 538.9,14.5 Q542.8,13.8 546.9,13.9 Q550.9,14.0 555.3,16.6 Q559.8,19.1 563.0,24.1 Q566.3,29.1 568.1,34.7 Q569.9,40.2 570.8,46.1 Q571.8,51.9 570.4,57.2 Q569.0,62.5 564.5,63.6 Q560.0,64.6 555.3,61.5 Q550.5,58.3 547.0,55.0 Q543.4,51.7 539.3,48.4Z"/><path d="M543.3,44.5 Q540.6,42.3 538.2,38.6 Q535.8,34.8 535.8,30.8 Q535.9,26.8 538.2,24.8 Q540.5,22.9 543.0,22.5 Q545.6,22.0 548.2,22.1 Q550.8,22.2 553.7,23.8 Q556.6,25.4 558.7,28.7 Q560.8,32.0 562.0,35.5 Q563.1,39.1 563.7,42.9 Q564.4,46.8 563.5,50.2 Q562.5,53.6 559.6,54.3 Q556.7,55.0 553.7,52.9 Q550.6,50.9 548.3,48.7 Q546.0,46.6 543.3,44.5Z"/><path d="M647.2,90.1 Q636.6,90.2 625.4,87.6 Q614.2,84.9 606.8,76.1 Q599.4,67.4 599.4,56.7 Q599.5,46.1 602.3,36.9 Q605.1,27.8 608.9,17.9 Q612.7,8.0 622.3,0.5 Q631.9,-7.0 644.5,-5.1 Q657.1,-3.1 665.2,5.4 Q673.3,13.9 678.8,21.6 Q684.2,29.4 690.4,38.1 Q696.6,46.8 697.2,58.3 Q697.8,69.8 689.2,77.8 Q680.6,85.8 669.2,87.9 Q657.9,89.9 647.2,90.1Z"/><path d="M647.0,78.7 Q639.1,78.8 630.8,76.9 Q622.5,74.9 617.0,68.4 Q611.5,62.0 611.6,54.1 Q611.7,46.2 613.7,39.4 Q615.8,32.7 618.6,25.3 Q621.4,18.0 628.5,12.4 Q635.6,6.9 644.9,8.3 Q654.2,9.8 660.2,16.1 Q666.3,22.3 670.3,28.1 Q674.4,33.8 678.9,40.2 Q683.5,46.7 683.9,55.2 Q684.4,63.7 678.0,69.6 Q671.6,75.6 663.2,77.1 Q654.8,78.6 647.0,78.7Z"/><path d="M646.7,67.4 Q641.6,67.4 636.2,66.2 Q630.8,64.9 627.3,60.7 Q623.7,56.5 623.8,51.4 Q623.8,46.3 625.1,41.9 Q626.5,37.5 628.3,32.7 Q630.1,28.0 634.7,24.4 Q639.3,20.8 645.4,21.7 Q651.4,22.7 655.3,26.7 Q659.2,30.8 661.8,34.5 Q664.5,38.2 667.4,42.4 Q670.4,46.6 670.7,52.1 Q671.0,57.6 666.8,61.5 Q662.7,65.3 657.2,66.3 Q651.8,67.3 646.7,67.4Z"/><path d="M646.4,56.0 Q644.1,56.1 641.6,55.5 Q639.1,54.9 637.5,53.0 Q635.9,51.0 635.9,48.7 Q635.9,46.3 636.5,44.3 Q637.2,42.3 638.0,40.1 Q638.8,38.0 640.9,36.3 Q643.0,34.7 645.8,35.1 Q648.6,35.5 650.4,37.4 Q652.2,39.3 653.4,41.0 Q654.6,42.7 655.9,44.6 Q657.3,46.5 657.4,49.0 Q657.5,51.6 655.7,53.3 Q653.8,55.1 651.3,55.5 Q648.8,56.0 646.4,56.0Z"/><path d="M817.1,77.8 Q813.2,85.3 806.7,94.2 Q800.1,103.1 790.6,107.3 Q781.2,111.5 775.0,107.8 Q768.8,104.1 766.2,98.3 Q763.6,92.5 761.1,86.8 Q758.6,81.1 759.4,72.7 Q760.2,64.3 767.0,56.1 Q773.9,47.8 782.2,43.5 Q790.6,39.1 798.2,35.7 Q805.9,32.3 814.8,29.8 Q823.7,27.4 829.6,31.5 Q835.5,35.6 833.5,45.0 Q831.4,54.4 826.3,62.4 Q821.1,70.4 817.1,77.8Z"/><path d="M811.3,75.2 Q808.4,80.7 803.6,87.3 Q798.7,93.9 791.7,97.0 Q784.7,100.1 780.2,97.4 Q775.6,94.7 773.6,90.4 Q771.7,86.1 769.8,81.8 Q768.0,77.6 768.6,71.4 Q769.2,65.2 774.3,59.1 Q779.3,53.0 785.5,49.8 Q791.7,46.5 797.4,44.0 Q803.0,41.5 809.6,39.7 Q816.2,37.9 820.6,40.9 Q824.9,44.0 823.4,50.9 Q821.9,57.8 818.1,63.8 Q814.2,69.7 811.3,75.2Z"/><path d="M909.3,65.1 Q895.9,72.8 882.7,77.5 Q869.5,82.3 856.0,85.3 Q842.4,88.4 830.0,87.2 Q817.6,86.1 813.0,78.3 Q808.3,70.5 813.7,59.4 Q819.1,48.3 829.4,38.5 Q839.6,28.6 851.2,20.2 Q862.9,11.9 876.6,5.4 Q890.2,-1.1 903.9,-3.2 Q917.6,-5.2 927.5,-1.9 Q937.4,1.4 941.8,8.7 Q946.3,15.9 944.1,26.1 Q941.9,36.2 932.3,46.8 Q922.7,57.4 909.3,65.1Z"/><path d="M901.5,59.2 Q891.6,64.9 881.8,68.4 Q872.0,71.9 862.0,74.2 Q852.1,76.4 842.9,75.6 Q833.7,74.7 830.2,69.0 Q826.8,63.2 830.8,55.0 Q834.8,46.8 842.4,39.5 Q849.9,32.2 858.6,26.0 Q867.2,19.8 877.3,15.0 Q887.4,10.2 897.5,8.7 Q907.7,7.2 915.0,9.6 Q922.3,12.0 925.6,17.4 Q928.9,22.8 927.3,30.3 Q925.7,37.8 918.6,45.7 Q911.4,53.5 901.5,59.2Z"/><path d="M893.7,53.3 Q887.3,57.0 881.0,59.3 Q874.6,61.5 868.1,63.0 Q861.7,64.5 855.7,63.9 Q849.8,63.4 847.5,59.6 Q845.3,55.9 847.9,50.6 Q850.5,45.2 855.4,40.5 Q860.3,35.8 865.9,31.8 Q871.5,27.8 878.0,24.6 Q884.6,21.5 891.2,20.5 Q897.7,19.5 902.5,21.1 Q907.2,22.7 909.4,26.2 Q911.5,29.7 910.5,34.6 Q909.4,39.4 904.8,44.5 Q900.2,49.6 893.7,53.3Z"/><path d="M1016.3,100.5 Q1012.0,102.0 1007.3,102.4 Q1002.6,102.7 997.4,99.3 Q992.2,95.9 989.4,87.1 Q986.7,78.4 987.9,69.6 Q989.1,60.8 991.4,54.8 Q993.7,48.9 995.5,42.4 Q997.3,35.8 1001.1,30.0 Q1004.8,24.3 1010.2,25.4 Q1015.6,26.5 1019.5,33.8 Q1023.3,41.1 1025.3,49.1 Q1027.2,57.1 1028.4,65.1 Q1029.6,73.2 1028.7,81.2 Q1027.8,89.3 1024.2,94.1 Q1020.7,99.0 1016.3,100.5Z"/><path d="M1167.8,87.7 Q1156.7,89.9 1145.9,86.2 Q1135.1,82.4 1130.7,74.6 Q1126.2,66.8 1124.3,60.3 Q1122.3,53.8 1117.3,46.2 Q1112.3,38.6 1112.8,28.2 Q1113.2,17.9 1125.1,13.1 Q1136.9,8.4 1149.9,12.8 Q1162.8,17.2 1170.3,22.7 Q1177.9,28.1 1186.4,31.1 Q1194.9,34.1 1203.8,40.3 Q1212.7,46.4 1212.8,55.3 Q1212.9,64.2 1205.1,70.6 Q1197.4,77.0 1188.2,81.2 Q1179.0,85.5 1167.8,87.7Z"/><path d="M1165.8,78.1 Q1157.6,79.7 1149.6,76.9 Q1141.6,74.2 1138.3,68.4 Q1135.0,62.6 1133.6,57.8 Q1132.1,53.0 1128.4,47.4 Q1124.7,41.7 1125.0,34.1 Q1125.4,26.4 1134.2,22.9 Q1142.9,19.4 1152.5,22.7 Q1162.1,26.0 1167.7,30.0 Q1173.2,34.0 1179.5,36.2 Q1185.9,38.4 1192.4,43.0 Q1199.0,47.5 1199.1,54.1 Q1199.1,60.7 1193.4,65.4 Q1187.7,70.1 1180.9,73.3 Q1174.0,76.4 1165.8,78.1Z"/><path d="M1163.8,68.5 Q1158.4,69.5 1153.3,67.7 Q1148.1,65.9 1145.9,62.2 Q1143.8,58.4 1142.9,55.3 Q1141.9,52.2 1139.5,48.6 Q1137.1,44.9 1137.3,39.9 Q1137.5,35.0 1143.2,32.7 Q1148.9,30.4 1155.2,32.5 Q1161.4,34.7 1165.0,37.3 Q1168.6,39.8 1172.7,41.3 Q1176.8,42.8 1181.0,45.7 Q1185.3,48.7 1185.3,52.9 Q1185.4,57.2 1181.7,60.2 Q1178.0,63.3 1173.5,65.4 Q1169.1,67.4 1163.8,68.5Z"/><path d="M1161.7,58.9 Q1159.3,59.4 1156.9,58.5 Q1154.6,57.7 1153.6,56.0 Q1152.6,54.3 1152.2,52.8 Q1151.7,51.4 1150.6,49.7 Q1149.5,48.1 1149.6,45.8 Q1149.7,43.5 1152.3,42.5 Q1155.0,41.4 1157.8,42.4 Q1160.6,43.4 1162.3,44.6 Q1163.9,45.7 1165.8,46.4 Q1167.7,47.1 1169.7,48.4 Q1171.6,49.8 1171.6,51.7 Q1171.6,53.7 1170.0,55.1 Q1168.3,56.5 1166.2,57.4 Q1164.2,58.4 1161.7,58.9Z"/><path d="M1249.7,76.8 Q1243.9,69.5 1239.1,60.2 Q1234.3,50.9 1235.2,41.6 Q1236.1,32.2 1242.2,28.0 Q1248.3,23.9 1254.3,22.2 Q1260.3,20.5 1266.9,17.6 Q1273.5,14.8 1282.6,16.9 Q1291.8,19.1 1297.8,29.1 Q1303.7,39.2 1303.0,49.3 Q1302.2,59.4 1300.3,66.4 Q1298.5,73.4 1297.5,81.6 Q1296.5,89.9 1291.4,96.2 Q1286.3,102.5 1277.8,100.4 Q1269.3,98.4 1262.4,91.3 Q1255.5,84.2 1249.7,76.8Z"/><path d="M1255.3,71.3 Q1251.0,65.9 1247.5,59.0 Q1243.9,52.1 1244.6,45.2 Q1245.3,38.3 1249.8,35.2 Q1254.3,32.1 1258.8,30.9 Q1263.2,29.6 1268.1,27.5 Q1272.9,25.4 1279.7,27.0 Q1286.5,28.6 1290.9,36.0 Q1295.3,43.5 1294.8,50.9 Q1294.2,58.4 1292.8,63.6 Q1291.5,68.8 1290.7,74.9 Q1290.0,81.0 1286.2,85.6 Q1282.5,90.3 1276.2,88.8 Q1269.9,87.2 1264.7,82.0 Q1259.6,76.7 1255.3,71.3Z"/><path d="M1261.0,65.8 Q1258.2,62.3 1255.9,57.8 Q1253.6,53.3 1254.0,48.8 Q1254.5,44.3 1257.4,42.4 Q1260.4,40.4 1263.2,39.5 Q1266.1,38.7 1269.3,37.3 Q1272.4,36.0 1276.8,37.0 Q1281.2,38.0 1284.1,42.9 Q1286.9,47.7 1286.6,52.5 Q1286.2,57.4 1285.3,60.8 Q1284.4,64.1 1284.0,68.1 Q1283.5,72.0 1281.0,75.1 Q1278.6,78.1 1274.5,77.1 Q1270.4,76.1 1267.1,72.7 Q1263.8,69.3 1261.0,65.8Z"/><path d="M1394.8,76.9 Q1389.7,79.2 1384.2,79.7 Q1378.7,80.2 1373.2,78.1 Q1367.8,76.0 1363.3,71.5 Q1358.9,67.0 1356.1,60.8 Q1353.3,54.6 1353.3,47.5 Q1353.3,40.5 1357.0,35.0 Q1360.8,29.5 1366.7,27.8 Q1372.6,26.1 1378.0,27.0 Q1383.5,28.0 1388.7,29.5 Q1393.9,31.1 1399.3,34.5 Q1404.8,38.0 1408.0,44.6 Q1411.2,51.1 1409.9,58.1 Q1408.6,65.1 1404.3,69.8 Q1400.0,74.5 1394.8,76.9Z"/><path d="M1538.0,69.7 Q1530.1,75.9 1523.0,81.2 Q1516.0,86.5 1507.1,89.3 Q1498.1,92.1 1489.7,88.5 Q1481.3,84.8 1475.8,78.0 Q1470.4,71.1 1465.0,63.5 Q1459.6,55.8 1456.9,44.9 Q1454.2,33.9 1460.9,24.4 Q1467.6,14.9 1479.2,14.4 Q1490.7,13.9 1498.7,16.8 Q1506.7,19.8 1514.6,19.1 Q1522.6,18.4 1533.8,20.3 Q1545.0,22.2 1550.5,32.2 Q1556.0,42.2 1550.9,52.8 Q1545.9,63.4 1538.0,69.7Z"/><path d="M1596.1,106.1 Q1583.6,104.5 1571.9,95.7 Q1560.2,86.8 1557.8,74.2 Q1555.4,61.5 1561.1,52.6 Q1566.8,43.7 1573.0,37.6 Q1579.2,31.5 1586.3,25.5 Q1593.3,19.4 1604.7,18.0 Q1616.0,16.5 1627.7,22.7 Q1639.4,28.8 1647.7,38.6 Q1656.0,48.4 1661.0,59.4 Q1666.1,70.3 1665.7,81.3 Q1665.2,92.3 1657.3,98.9 Q1649.4,105.4 1639.0,106.4 Q1628.5,107.5 1618.6,107.6 Q1608.6,107.8 1596.1,106.1Z"/><path d="M1600.2,95.7 Q1591.0,94.5 1582.3,88.0 Q1573.6,81.4 1571.9,72.1 Q1570.1,62.7 1574.3,56.1 Q1578.6,49.5 1583.1,45.0 Q1587.7,40.5 1592.9,36.0 Q1598.2,31.5 1606.6,30.5 Q1614.9,29.4 1623.6,33.9 Q1632.3,38.4 1638.4,45.7 Q1644.5,53.0 1648.3,61.1 Q1652.0,69.2 1651.7,77.4 Q1651.4,85.5 1645.5,90.3 Q1639.7,95.2 1632.0,95.9 Q1624.2,96.7 1616.9,96.8 Q1609.5,96.9 1600.2,95.7Z"/><path d="M1604.4,85.3 Q1598.4,84.5 1592.7,80.3 Q1587.1,76.0 1586.0,69.9 Q1584.8,63.9 1587.6,59.6 Q1590.3,55.3 1593.3,52.4 Q1596.2,49.5 1599.6,46.6 Q1603.0,43.7 1608.5,43.0 Q1613.9,42.3 1619.5,45.2 Q1625.2,48.1 1629.1,52.9 Q1633.1,57.6 1635.5,62.8 Q1638.0,68.1 1637.7,73.4 Q1637.5,78.7 1633.7,81.8 Q1629.9,84.9 1624.9,85.4 Q1619.9,85.9 1615.1,86.0 Q1610.4,86.1 1604.4,85.3Z"/><path d="M1608.5,74.9 Q1605.8,74.5 1603.2,72.6 Q1600.6,70.6 1600.1,67.8 Q1599.5,65.0 1600.8,63.1 Q1602.0,61.1 1603.4,59.8 Q1604.8,58.4 1606.3,57.1 Q1607.9,55.8 1610.4,55.5 Q1612.9,55.1 1615.4,56.5 Q1618.0,57.8 1619.8,60.0 Q1621.7,62.2 1622.8,64.6 Q1623.9,67.0 1623.8,69.4 Q1623.7,71.8 1622.0,73.3 Q1620.2,74.7 1617.9,74.9 Q1615.6,75.1 1613.4,75.2 Q1611.2,75.2 1608.5,74.9Z"/><path d="M1743.8,42.9 Q1745.2,47.8 1741.8,51.2 Q1738.4,54.6 1732.3,54.4 Q1726.1,54.3 1721.0,52.9 Q1715.8,51.5 1710.5,50.6 Q1705.2,49.7 1699.0,47.0 Q1692.9,44.2 1690.1,39.2 Q1687.3,34.2 1689.6,30.2 Q1691.9,26.1 1695.5,23.7 Q1699.2,21.3 1703.1,19.3 Q1706.9,17.2 1712.5,16.9 Q1718.0,16.6 1723.5,19.3 Q1729.0,21.9 1732.7,25.8 Q1736.4,29.7 1739.5,33.8 Q1742.5,38.0 1743.8,42.9Z"/><path d="M1736.8,41.1 Q1737.8,44.8 1735.3,47.3 Q1732.8,49.8 1728.3,49.7 Q1723.7,49.6 1719.9,48.6 Q1716.1,47.6 1712.1,46.9 Q1708.2,46.2 1703.6,44.2 Q1699.1,42.1 1697.0,38.4 Q1695.0,34.7 1696.7,31.7 Q1698.4,28.7 1701.1,27.0 Q1703.8,25.2 1706.6,23.7 Q1709.5,22.2 1713.6,21.9 Q1717.7,21.7 1721.8,23.7 Q1725.8,25.7 1728.6,28.5 Q1731.3,31.4 1733.6,34.5 Q1735.8,37.5 1736.8,41.1Z"/><path d="M1729.8,39.4 Q1730.4,41.8 1728.8,43.4 Q1727.2,45.0 1724.2,45.0 Q1721.3,44.9 1718.8,44.2 Q1716.3,43.6 1713.8,43.1 Q1711.2,42.7 1708.3,41.4 Q1705.3,40.0 1704.0,37.6 Q1702.6,35.2 1703.7,33.3 Q1704.8,31.4 1706.6,30.2 Q1708.3,29.1 1710.2,28.1 Q1712.1,27.1 1714.7,26.9 Q1717.4,26.8 1720.0,28.1 Q1722.7,29.4 1724.4,31.2 Q1726.2,33.1 1727.7,35.1 Q1729.1,37.1 1729.8,39.4Z"/><path d="M1816.6,61.1 Q1815.0,52.7 1814.6,45.9 Q1814.3,39.0 1813.3,31.1 Q1812.4,23.2 1817.0,14.7 Q1821.5,6.2 1831.4,3.4 Q1841.2,0.6 1849.7,3.1 Q1858.2,5.6 1865.4,8.3 Q1872.5,11.0 1879.7,15.5 Q1886.9,20.0 1888.7,28.2 Q1890.5,36.4 1885.3,44.0 Q1880.1,51.5 1873.7,56.8 Q1867.3,62.0 1860.4,67.8 Q1853.6,73.5 1843.7,76.4 Q1833.9,79.3 1826.0,74.4 Q1818.1,69.5 1816.6,61.1Z"/><path d="M1824.6,55.1 Q1823.4,48.9 1823.2,43.8 Q1822.9,38.7 1822.2,32.9 Q1821.5,27.0 1824.9,20.7 Q1828.3,14.4 1835.6,12.4 Q1842.8,10.3 1849.1,12.2 Q1855.4,14.0 1860.7,16.0 Q1866.0,18.0 1871.4,21.3 Q1876.7,24.6 1878.0,30.7 Q1879.3,36.8 1875.5,42.4 Q1871.6,48.0 1866.9,51.9 Q1862.1,55.7 1857.1,60.0 Q1852.0,64.3 1844.7,66.4 Q1837.4,68.6 1831.6,64.9 Q1825.8,61.3 1824.6,55.1Z"/><path d="M1832.7,49.1 Q1831.9,45.0 1831.7,41.7 Q1831.6,38.5 1831.1,34.6 Q1830.6,30.8 1832.9,26.8 Q1835.1,22.7 1839.8,21.4 Q1844.5,20.0 1848.6,21.2 Q1852.6,22.4 1856.1,23.7 Q1859.5,25.0 1863.0,27.1 Q1866.4,29.3 1867.3,33.2 Q1868.2,37.2 1865.6,40.8 Q1863.1,44.5 1860.1,47.0 Q1857.0,49.5 1853.7,52.2 Q1850.4,55.0 1845.7,56.4 Q1841.0,57.8 1837.2,55.4 Q1833.4,53.1 1832.7,49.1Z"/><path d="M1840.7,43.0 Q1840.4,41.2 1840.3,39.7 Q1840.2,38.2 1840.0,36.4 Q1839.8,34.7 1840.8,32.8 Q1841.8,30.9 1844.0,30.3 Q1846.1,29.7 1848.0,30.3 Q1849.9,30.8 1851.4,31.4 Q1853.0,32.0 1854.6,33.0 Q1856.2,34.0 1856.6,35.8 Q1857.0,37.6 1855.8,39.2 Q1854.7,40.9 1853.3,42.1 Q1851.9,43.2 1850.4,44.5 Q1848.9,45.7 1846.7,46.4 Q1844.5,47.0 1842.8,45.9 Q1841.1,44.9 1840.7,43.0Z"/><path d="M1987.7,58.2 Q1982.4,63.8 1975.4,70.3 Q1968.4,76.8 1958.6,78.2 Q1948.9,79.6 1942.3,73.8 Q1935.7,68.1 1933.2,60.6 Q1930.6,53.2 1928.7,45.6 Q1926.8,38.1 1928.7,29.3 Q1930.5,20.5 1938.4,14.7 Q1946.3,8.8 1955.1,8.0 Q1963.9,7.2 1971.6,6.8 Q1979.4,6.4 1988.9,6.7 Q1998.4,7.0 2005.0,13.4 Q2011.7,19.8 2009.3,29.5 Q2006.8,39.2 1999.9,45.9 Q1993.0,52.5 1987.7,58.2Z"/><path d="M1982.1,53.1 Q1978.1,57.3 1972.9,62.1 Q1967.8,66.9 1960.5,67.9 Q1953.3,69.0 1948.4,64.7 Q1943.6,60.4 1941.7,54.9 Q1939.8,49.4 1938.4,43.8 Q1937.0,38.3 1938.4,31.7 Q1939.7,25.2 1945.6,20.9 Q1951.4,16.6 1957.9,16.0 Q1964.4,15.4 1970.1,15.1 Q1975.9,14.8 1982.9,15.0 Q1989.9,15.2 1994.9,20.0 Q1999.8,24.7 1998.0,31.9 Q1996.2,39.1 1991.1,44.0 Q1986.0,48.9 1982.1,53.1Z"/><path d="M2038.1,89.9 Q2031.1,80.2 2032.3,68.1 Q2033.4,55.9 2040.7,46.7 Q2048.1,37.5 2057.7,32.5 Q2067.4,27.5 2077.6,26.7 Q2087.7,25.9 2097.1,28.8 Q2106.4,31.7 2114.8,37.2 Q2123.2,42.8 2130.4,51.5 Q2137.5,60.3 2139.4,72.5 Q2141.3,84.7 2134.2,95.0 Q2127.2,105.3 2115.6,108.4 Q2104.0,111.5 2094.1,110.3 Q2084.3,109.1 2075.1,108.1 Q2066.0,107.0 2055.6,103.4 Q2045.1,99.7 2038.1,89.9Z"/><path d="M2050.5,84.7 Q2045.4,77.5 2046.2,68.5 Q2047.0,59.6 2052.5,52.8 Q2057.9,45.9 2065.1,42.2 Q2072.2,38.6 2079.7,38.0 Q2087.3,37.3 2094.2,39.5 Q2101.1,41.7 2107.3,45.7 Q2113.5,49.8 2118.8,56.3 Q2124.1,62.8 2125.5,71.8 Q2126.9,80.9 2121.7,88.5 Q2116.4,96.1 2107.9,98.4 Q2099.3,100.7 2092.0,99.8 Q2084.7,98.9 2077.9,98.1 Q2071.2,97.4 2063.4,94.7 Q2055.7,91.9 2050.5,84.7Z"/><path d="M2216.7,71.1 Q2209.2,66.2 2202.3,60.3 Q2195.5,54.4 2191.3,45.9 Q2187.1,37.3 2189.0,28.4 Q2190.9,19.6 2196.9,13.4 Q2203.0,7.1 2210.5,2.9 Q2218.0,-1.4 2227.4,-2.8 Q2236.8,-4.1 2245.8,0.6 Q2254.8,5.2 2259.3,13.8 Q2263.7,22.3 2265.1,30.4 Q2266.5,38.6 2267.3,47.2 Q2268.1,55.8 2264.9,64.7 Q2261.7,73.7 2252.7,77.6 Q2243.8,81.6 2234.0,78.9 Q2224.3,76.1 2216.7,71.1Z"/><path d="M2343.3,127.1 Q2335.6,128.1 2328.1,126.7 Q2320.6,125.4 2312.2,120.5 Q2303.8,115.6 2298.6,102.0 Q2293.3,88.4 2295.7,73.4 Q2298.1,58.4 2303.5,49.6 Q2308.9,40.7 2312.6,31.6 Q2316.3,22.5 2322.2,11.8 Q2328.1,1.1 2337.3,1.1 Q2346.5,1.2 2352.7,14.1 Q2358.8,27.0 2360.5,41.3 Q2362.2,55.6 2363.3,68.3 Q2364.5,80.9 2363.6,94.5 Q2362.7,108.2 2356.8,117.1 Q2351.0,126.1 2343.3,127.1Z"/><path d="M2425.1,58.1 Q2419.1,56.6 2414.5,51.7 Q2409.9,46.7 2410.4,39.8 Q2410.8,32.8 2415.5,27.9 Q2420.1,22.9 2425.2,20.4 Q2430.3,18.0 2435.0,15.9 Q2439.8,13.9 2445.6,12.9 Q2451.4,11.8 2457.2,14.2 Q2463.0,16.6 2466.2,22.2 Q2469.5,27.8 2469.2,34.3 Q2469.0,40.8 2465.7,46.2 Q2462.5,51.7 2457.4,54.8 Q2452.3,57.8 2447.0,58.7 Q2441.7,59.6 2436.4,59.6 Q2431.1,59.6 2425.1,58.1Z"/><path d="M2429.2,52.6 Q2424.7,51.5 2421.3,47.8 Q2417.9,44.2 2418.3,39.0 Q2418.6,33.9 2422.0,30.2 Q2425.5,26.5 2429.3,24.7 Q2433.0,22.9 2436.5,21.4 Q2440.0,19.9 2444.3,19.1 Q2448.6,18.4 2452.9,20.1 Q2457.2,21.9 2459.6,26.0 Q2462.0,30.1 2461.8,34.9 Q2461.6,39.8 2459.2,43.8 Q2456.8,47.8 2453.1,50.1 Q2449.3,52.4 2445.4,53.0 Q2441.5,53.7 2437.6,53.7 Q2433.6,53.7 2429.2,52.6Z"/><path d="M2433.2,47.1 Q2430.4,46.4 2428.2,44.0 Q2426.0,41.6 2426.2,38.3 Q2426.4,34.9 2428.6,32.6 Q2430.9,30.2 2433.3,29.0 Q2435.7,27.8 2438.0,26.8 Q2440.3,25.8 2443.1,25.4 Q2445.8,24.9 2448.6,26.0 Q2451.4,27.2 2453.0,29.8 Q2454.5,32.5 2454.4,35.6 Q2454.3,38.8 2452.7,41.4 Q2451.2,44.0 2448.7,45.5 Q2446.3,47.0 2443.8,47.4 Q2441.2,47.8 2438.7,47.8 Q2436.1,47.8 2433.2,47.1Z"/><path d="M2559.9,80.8 Q2551.9,78.9 2547.9,71.7 Q2543.9,64.5 2545.4,56.6 Q2546.9,48.7 2549.1,41.9 Q2551.4,35.2 2554.6,27.5 Q2557.9,19.9 2565.5,15.2 Q2573.2,10.5 2581.3,13.6 Q2589.5,16.6 2594.0,22.8 Q2598.5,29.0 2602.8,34.0 Q2607.1,39.0 2611.6,46.0 Q2616.1,52.9 2614.4,61.6 Q2612.8,70.3 2605.2,74.9 Q2597.5,79.4 2589.9,80.2 Q2582.3,81.0 2575.1,81.8 Q2567.8,82.7 2559.9,80.8Z"/><path d="M2564.7,72.9 Q2558.8,71.5 2555.8,66.2 Q2552.9,60.9 2554.0,55.0 Q2555.1,49.2 2556.7,44.2 Q2558.4,39.2 2560.8,33.5 Q2563.2,27.9 2568.9,24.4 Q2574.5,20.9 2580.6,23.2 Q2586.6,25.4 2589.9,30.0 Q2593.3,34.6 2596.5,38.3 Q2599.6,42.0 2602.9,47.2 Q2606.3,52.3 2605.1,58.8 Q2603.9,65.2 2598.2,68.6 Q2592.5,71.9 2586.9,72.5 Q2581.2,73.1 2575.9,73.7 Q2570.6,74.3 2564.7,72.9Z"/><path d="M2569.5,65.1 Q2565.7,64.2 2563.7,60.7 Q2561.8,57.3 2562.5,53.5 Q2563.2,49.7 2564.3,46.4 Q2565.4,43.2 2567.0,39.5 Q2568.5,35.9 2572.2,33.6 Q2575.9,31.4 2579.8,32.8 Q2583.7,34.3 2585.9,37.3 Q2588.0,40.2 2590.1,42.6 Q2592.2,45.0 2594.3,48.4 Q2596.4,51.7 2595.7,55.9 Q2594.9,60.1 2591.2,62.3 Q2587.5,64.4 2583.9,64.8 Q2580.2,65.2 2576.8,65.6 Q2573.3,66.0 2569.5,65.1Z"/><path d="M2643.8,49.7 Q2638.6,45.5 2634.9,39.1 Q2631.2,32.6 2637.3,25.3 Q2643.4,18.0 2656.3,15.3 Q2669.1,12.5 2679.2,13.1 Q2689.3,13.7 2698.7,13.1 Q2708.0,12.6 2719.2,13.5 Q2730.5,14.3 2735.6,20.1 Q2740.6,25.9 2736.0,33.0 Q2731.4,40.0 2724.1,45.5 Q2716.8,51.0 2708.9,56.3 Q2701.0,61.5 2689.8,64.6 Q2678.6,67.6 2668.8,65.4 Q2659.1,63.2 2654.1,58.6 Q2649.0,54.0 2643.8,49.7Z"/><path d="M26.6,166.7 Q30.7,173.9 26.1,178.5 Q21.5,183.0 11.4,181.9 Q1.4,180.7 -7.3,177.8 Q-15.9,175.0 -24.4,172.3 Q-32.8,169.7 -41.4,164.7 Q-49.9,159.7 -53.4,153.2 Q-56.8,146.6 -54.9,141.7 Q-52.9,136.7 -49.8,132.6 Q-46.6,128.4 -40.6,125.3 Q-34.7,122.2 -24.7,123.9 Q-14.8,125.7 -6.7,131.6 Q1.4,137.5 6.0,143.1 Q10.7,148.6 16.6,154.1 Q22.4,159.6 26.6,166.7Z"/><path d="M15.6,163.3 Q18.7,168.6 15.3,171.9 Q11.9,175.3 4.5,174.5 Q-3.0,173.6 -9.4,171.5 Q-15.8,169.3 -22.0,167.4 Q-28.3,165.5 -34.6,161.8 Q-41.0,158.1 -43.5,153.2 Q-46.1,148.4 -44.6,144.7 Q-43.2,141.1 -40.8,138.0 Q-38.5,134.9 -34.1,132.6 Q-29.7,130.3 -22.3,131.6 Q-15.0,132.9 -9.0,137.3 Q-3.0,141.7 0.5,145.7 Q3.9,149.8 8.3,153.9 Q12.6,158.0 15.6,163.3Z"/><path d="M4.7,159.8 Q6.7,163.2 4.5,165.4 Q2.3,167.6 -2.5,167.1 Q-7.4,166.5 -11.5,165.1 Q-15.7,163.7 -19.7,162.5 Q-23.8,161.2 -27.9,158.8 Q-32.0,156.4 -33.7,153.3 Q-35.3,150.2 -34.4,147.8 Q-33.4,145.4 -31.9,143.4 Q-30.4,141.4 -27.5,139.9 Q-24.7,138.4 -19.9,139.3 Q-15.2,140.1 -11.3,142.9 Q-7.4,145.8 -5.1,148.4 Q-2.9,151.1 -0.1,153.7 Q2.7,156.3 4.7,159.8Z"/><path d="M155.4,138.6 Q156.2,145.9 153.7,152.6 Q151.2,159.3 146.8,165.1 Q142.5,170.9 135.9,175.7 Q129.3,180.4 120.5,181.2 Q111.7,182.0 104.5,177.1 Q97.3,172.1 94.5,164.8 Q91.6,157.4 91.1,150.6 Q90.6,143.8 91.1,136.8 Q91.7,129.8 95.5,122.9 Q99.3,116.1 106.9,112.4 Q114.5,108.8 123.0,109.7 Q131.4,110.6 138.4,114.7 Q145.4,118.7 150.0,125.0 Q154.5,131.2 155.4,138.6Z"/><path d="M146.7,140.2 Q147.3,145.6 145.4,150.6 Q143.6,155.5 140.4,159.8 Q137.2,164.1 132.3,167.6 Q127.4,171.2 120.9,171.7 Q114.3,172.3 109.0,168.7 Q103.7,165.0 101.6,159.6 Q99.5,154.1 99.1,149.1 Q98.8,144.0 99.2,138.8 Q99.5,133.7 102.4,128.6 Q105.2,123.5 110.8,120.9 Q116.5,118.2 122.7,118.9 Q128.9,119.5 134.1,122.5 Q139.3,125.5 142.7,130.1 Q146.1,134.8 146.7,140.2Z"/><path d="M220.3,162.0 Q221.3,155.0 223.8,149.7 Q226.2,144.4 228.3,138.7 Q230.3,132.9 235.0,127.4 Q239.8,121.9 247.0,121.8 Q254.1,121.6 259.2,126.7 Q264.3,131.9 267.0,137.6 Q269.6,143.4 271.7,149.2 Q273.8,155.0 273.5,161.6 Q273.1,168.3 268.8,173.2 Q264.5,178.2 258.7,180.3 Q252.9,182.4 246.7,183.4 Q240.6,184.3 233.9,182.7 Q227.2,181.1 223.2,175.1 Q219.3,169.1 220.3,162.0Z"/><path d="M227.2,160.2 Q228.0,155.0 229.8,151.1 Q231.6,147.2 233.1,142.9 Q234.6,138.7 238.1,134.6 Q241.6,130.5 247.0,130.4 Q252.3,130.3 256.0,134.1 Q259.8,137.9 261.8,142.1 Q263.7,146.4 265.3,150.7 Q266.8,155.0 266.6,159.9 Q266.3,164.8 263.1,168.5 Q259.9,172.2 255.6,173.7 Q251.3,175.3 246.8,176.0 Q242.3,176.7 237.3,175.5 Q232.3,174.3 229.4,169.9 Q226.5,165.4 227.2,160.2Z"/><path d="M234.1,158.3 Q234.6,155.0 235.8,152.4 Q237.0,149.9 238.0,147.1 Q238.9,144.4 241.2,141.7 Q243.5,139.1 246.9,139.0 Q250.4,138.9 252.8,141.4 Q255.3,143.9 256.6,146.6 Q257.8,149.4 258.8,152.2 Q259.8,155.0 259.7,158.2 Q259.5,161.4 257.4,163.7 Q255.4,166.1 252.6,167.1 Q249.8,168.1 246.8,168.6 Q243.9,169.0 240.7,168.3 Q237.5,167.5 235.6,164.6 Q233.7,161.7 234.1,158.3Z"/><path d="M337.9,205.7 Q328.2,199.5 324.1,188.8 Q320.1,178.2 320.1,166.9 Q320.2,155.6 324.0,144.4 Q327.9,133.3 337.0,125.0 Q346.1,116.7 357.4,114.5 Q368.8,112.3 379.2,114.0 Q389.6,115.6 399.9,119.4 Q410.1,123.2 417.9,132.0 Q425.8,140.7 425.4,153.3 Q425.0,165.8 417.2,175.8 Q409.3,185.8 400.2,192.2 Q391.0,198.6 381.1,203.9 Q371.3,209.3 359.5,210.6 Q347.6,211.9 337.9,205.7Z"/><path d="M442.8,181.4 Q439.0,176.0 437.9,169.8 Q436.9,163.6 434.4,159.5 Q431.9,155.4 430.9,147.7 Q429.9,140.0 434.2,130.4 Q438.5,120.8 444.9,115.3 Q451.3,109.8 457.0,106.7 Q462.7,103.5 468.5,101.6 Q474.4,99.7 478.0,103.7 Q481.7,107.7 480.6,116.4 Q479.4,125.2 476.8,132.9 Q474.2,140.6 472.3,149.0 Q470.5,157.4 465.6,167.9 Q460.8,178.3 453.7,182.5 Q446.5,186.7 442.8,181.4Z"/><path d="M446.1,170.7 Q443.3,166.8 442.5,162.2 Q441.7,157.6 439.9,154.5 Q438.0,151.5 437.3,145.8 Q436.5,140.1 439.7,133.0 Q442.9,125.9 447.7,121.8 Q452.4,117.7 456.6,115.4 Q460.8,113.1 465.1,111.7 Q469.5,110.3 472.2,113.2 Q474.9,116.2 474.0,122.7 Q473.2,129.1 471.3,134.8 Q469.4,140.5 468.0,146.8 Q466.6,153.0 463.0,160.7 Q459.4,168.5 454.2,171.6 Q448.9,174.7 446.1,170.7Z"/><path d="M449.4,160.0 Q447.6,157.5 447.1,154.5 Q446.6,151.5 445.4,149.5 Q444.2,147.6 443.7,143.9 Q443.2,140.2 445.3,135.6 Q447.3,131.0 450.4,128.3 Q453.5,125.7 456.2,124.2 Q459.0,122.7 461.8,121.8 Q464.6,120.8 466.3,122.7 Q468.1,124.7 467.5,128.9 Q467.0,133.1 465.7,136.8 Q464.5,140.5 463.6,144.5 Q462.7,148.5 460.4,153.6 Q458.1,158.6 454.6,160.6 Q451.2,162.6 449.4,160.0Z"/><path d="M578.5,203.7 Q571.5,208.7 563.0,209.3 Q554.5,209.9 548.7,200.3 Q543.0,190.7 543.3,176.6 Q543.5,162.4 546.6,150.2 Q549.8,138.1 553.9,127.2 Q557.9,116.3 564.4,108.1 Q570.8,99.8 578.6,98.5 Q586.3,97.2 593.0,101.5 Q599.7,105.8 605.5,113.1 Q611.4,120.4 614.7,132.4 Q618.0,144.5 615.4,158.4 Q612.7,172.4 605.7,181.1 Q598.7,189.7 592.1,194.2 Q585.4,198.7 578.5,203.7Z"/><path d="M743.3,172.0 Q737.9,176.3 731.6,177.6 Q725.4,178.9 719.1,178.5 Q712.8,178.1 706.7,175.0 Q700.6,171.9 696.2,166.2 Q691.9,160.6 689.4,154.0 Q687.0,147.4 686.4,140.1 Q685.8,132.7 689.1,126.4 Q692.5,120.1 699.5,118.7 Q706.5,117.3 713.2,120.5 Q719.9,123.7 725.0,127.3 Q730.0,131.0 735.7,134.9 Q741.4,138.8 745.9,145.7 Q750.4,152.5 749.5,160.1 Q748.7,167.7 743.3,172.0Z"/><path d="M736.3,166.2 Q732.3,169.4 727.7,170.4 Q723.1,171.3 718.4,171.0 Q713.7,170.7 709.2,168.4 Q704.7,166.1 701.5,161.9 Q698.3,157.8 696.5,152.9 Q694.7,148.0 694.2,142.6 Q693.8,137.2 696.2,132.5 Q698.7,127.8 703.9,126.8 Q709.1,125.7 714.1,128.1 Q719.0,130.5 722.8,133.2 Q726.5,135.9 730.7,138.8 Q734.9,141.7 738.2,146.7 Q741.6,151.8 740.9,157.4 Q740.3,163.0 736.3,166.2Z"/><path d="M729.4,160.4 Q726.8,162.5 723.8,163.1 Q720.8,163.8 717.7,163.6 Q714.7,163.4 711.8,161.9 Q708.8,160.4 706.8,157.7 Q704.7,155.0 703.5,151.8 Q702.3,148.6 702.0,145.1 Q701.8,141.6 703.4,138.6 Q705.0,135.5 708.3,134.9 Q711.7,134.2 714.9,135.7 Q718.1,137.3 720.6,139.0 Q723.0,140.7 725.7,142.6 Q728.4,144.5 730.6,147.8 Q732.7,151.1 732.3,154.7 Q731.9,158.4 729.4,160.4Z"/><path d="M722.4,154.7 Q721.2,155.6 719.8,155.9 Q718.4,156.2 717.1,156.1 Q715.7,156.0 714.3,155.3 Q713.0,154.6 712.0,153.4 Q711.1,152.2 710.5,150.7 Q710.0,149.3 709.9,147.6 Q709.7,146.0 710.5,144.6 Q711.2,143.2 712.7,142.9 Q714.3,142.6 715.8,143.3 Q717.2,144.0 718.3,144.8 Q719.5,145.6 720.7,146.5 Q722.0,147.4 722.9,148.9 Q723.9,150.4 723.8,152.1 Q723.6,153.7 722.4,154.7Z"/><path d="M845.0,154.2 Q839.2,158.8 831.6,159.6 Q823.9,160.3 818.6,156.3 Q813.2,152.2 810.7,147.5 Q808.1,142.8 804.5,138.5 Q800.9,134.3 798.5,127.7 Q796.0,121.1 800.2,114.4 Q804.4,107.7 812.8,106.0 Q821.1,104.3 827.7,105.9 Q834.4,107.4 840.1,108.5 Q845.9,109.6 851.9,112.2 Q857.8,114.8 860.3,120.5 Q862.8,126.2 860.7,132.4 Q858.6,138.6 854.7,144.1 Q850.9,149.5 845.0,154.2Z"/><path d="M921.1,163.3 Q915.0,154.0 920.1,143.6 Q925.2,133.3 934.1,127.6 Q943.0,121.9 949.1,115.8 Q955.1,109.7 964.5,102.0 Q973.9,94.2 986.9,94.5 Q999.9,94.8 1006.3,104.6 Q1012.8,114.4 1012.5,124.5 Q1012.3,134.6 1012.7,143.0 Q1013.2,151.5 1011.3,161.3 Q1009.4,171.1 1000.2,177.5 Q991.0,183.8 979.9,183.5 Q968.8,183.3 959.0,181.4 Q949.2,179.5 938.2,176.1 Q927.3,172.6 921.1,163.3Z"/><path d="M934.1,158.0 Q929.6,151.1 933.4,143.4 Q937.2,135.8 943.8,131.6 Q950.3,127.4 954.8,122.8 Q959.3,118.3 966.3,112.6 Q973.2,106.9 982.8,107.1 Q992.4,107.3 997.2,114.6 Q1001.9,121.8 1001.8,129.3 Q1001.6,136.7 1001.9,142.9 Q1002.3,149.2 1000.9,156.5 Q999.5,163.7 992.7,168.4 Q985.9,173.2 977.7,172.9 Q969.4,172.7 962.2,171.3 Q954.9,169.9 946.8,167.4 Q938.7,164.9 934.1,158.0Z"/><path d="M1120.2,179.2 Q1116.7,189.4 1110.3,198.1 Q1103.9,206.8 1094.4,211.5 Q1084.9,216.3 1075.1,215.2 Q1065.3,214.1 1057.3,209.4 Q1049.2,204.6 1042.4,197.5 Q1035.7,190.4 1032.5,179.9 Q1029.3,169.4 1033.1,158.3 Q1036.9,147.2 1045.5,140.3 Q1054.2,133.3 1063.4,130.1 Q1072.6,127.0 1082.1,125.5 Q1091.5,124.1 1101.2,126.9 Q1110.9,129.7 1117.0,138.3 Q1123.0,147.0 1123.3,158.0 Q1123.6,169.0 1120.2,179.2Z"/><path d="M1215.6,151.8 Q1215.9,161.2 1210.8,170.1 Q1205.6,178.9 1197.2,182.3 Q1188.8,185.8 1180.9,186.4 Q1173.0,186.9 1164.4,186.4 Q1155.8,185.9 1149.1,179.5 Q1142.3,173.2 1143.1,162.4 Q1143.9,151.6 1149.5,143.4 Q1155.0,135.1 1159.2,128.2 Q1163.3,121.2 1168.9,112.2 Q1174.4,103.1 1184.0,98.9 Q1193.6,94.8 1201.0,101.0 Q1208.4,107.1 1210.5,116.7 Q1212.5,126.3 1213.9,134.3 Q1215.2,142.4 1215.6,151.8Z"/><path d="M1206.8,150.5 Q1207.1,157.4 1203.3,164.0 Q1199.5,170.5 1193.2,173.1 Q1187.0,175.6 1181.2,176.0 Q1175.3,176.5 1169.0,176.1 Q1162.6,175.7 1157.6,171.0 Q1152.6,166.3 1153.2,158.3 Q1153.8,150.3 1157.9,144.2 Q1162.0,138.1 1165.1,133.0 Q1168.2,127.8 1172.3,121.1 Q1176.4,114.4 1183.5,111.4 Q1190.6,108.3 1196.1,112.9 Q1201.5,117.4 1203.1,124.5 Q1204.6,131.6 1205.6,137.5 Q1206.6,143.5 1206.8,150.5Z"/><path d="M1198.1,149.1 Q1198.3,153.7 1195.8,157.9 Q1193.3,162.1 1189.3,163.8 Q1185.2,165.5 1181.4,165.7 Q1177.7,166.0 1173.5,165.7 Q1169.4,165.5 1166.2,162.4 Q1162.9,159.4 1163.3,154.2 Q1163.7,149.0 1166.4,145.1 Q1169.0,141.1 1171.0,137.8 Q1173.0,134.5 1175.7,130.1 Q1178.4,125.8 1183.0,123.8 Q1187.6,121.8 1191.1,124.7 Q1194.7,127.7 1195.7,132.3 Q1196.7,136.9 1197.3,140.7 Q1197.9,144.6 1198.1,149.1Z"/><path d="M1189.4,147.8 Q1189.5,149.9 1188.3,151.8 Q1187.2,153.8 1185.3,154.5 Q1183.5,155.3 1181.7,155.4 Q1180.0,155.5 1178.1,155.4 Q1176.2,155.3 1174.7,153.9 Q1173.3,152.5 1173.4,150.1 Q1173.6,147.8 1174.8,145.9 Q1176.1,144.1 1177.0,142.6 Q1177.9,141.1 1179.1,139.1 Q1180.3,137.1 1182.4,136.2 Q1184.6,135.3 1186.2,136.6 Q1187.8,138.0 1188.3,140.1 Q1188.7,142.2 1189.0,144.0 Q1189.3,145.7 1189.4,147.8Z"/><path d="M1345.3,156.9 Q1336.7,162.2 1329.7,166.8 Q1322.7,171.5 1313.9,176.4 Q1305.0,181.3 1296.3,180.5 Q1287.5,179.7 1284.5,172.6 Q1281.4,165.5 1282.4,157.4 Q1283.3,149.4 1285.3,141.4 Q1287.3,133.3 1293.0,125.0 Q1298.8,116.8 1308.0,112.7 Q1317.2,108.7 1324.9,109.4 Q1332.6,110.2 1339.6,111.1 Q1346.6,112.1 1354.4,114.7 Q1362.2,117.2 1364.5,125.3 Q1366.9,133.4 1360.3,142.5 Q1353.8,151.6 1345.3,156.9Z"/><path d="M1338.7,153.1 Q1332.4,157.0 1327.2,160.5 Q1322.1,163.9 1315.5,167.5 Q1309.0,171.2 1302.5,170.6 Q1296.0,170.0 1293.8,164.7 Q1291.5,159.5 1292.2,153.5 Q1292.9,147.6 1294.4,141.6 Q1295.8,135.6 1300.1,129.5 Q1304.4,123.4 1311.1,120.4 Q1317.9,117.5 1323.7,118.0 Q1329.4,118.5 1334.5,119.3 Q1339.7,120.0 1345.5,121.9 Q1351.2,123.8 1353.0,129.7 Q1354.7,135.7 1349.9,142.5 Q1345.1,149.2 1338.7,153.1Z"/><path d="M1332.2,149.3 Q1328.1,151.9 1324.7,154.1 Q1321.4,156.3 1317.1,158.7 Q1312.9,161.0 1308.7,160.6 Q1304.5,160.3 1303.0,156.9 Q1301.6,153.4 1302.0,149.6 Q1302.5,145.7 1303.4,141.9 Q1304.4,138.0 1307.1,134.0 Q1309.9,130.1 1314.3,128.1 Q1318.7,126.2 1322.4,126.6 Q1326.1,126.9 1329.5,127.4 Q1332.8,127.8 1336.6,129.1 Q1340.3,130.3 1341.4,134.2 Q1342.6,138.0 1339.4,142.4 Q1336.3,146.8 1332.2,149.3Z"/><path d="M1455.3,190.1 Q1445.6,191.7 1436.6,186.7 Q1427.5,181.7 1423.4,172.2 Q1419.3,162.7 1420.3,153.0 Q1421.3,143.2 1425.9,135.4 Q1430.5,127.6 1437.4,122.6 Q1444.4,117.7 1452.3,115.3 Q1460.2,113.0 1469.2,112.5 Q1478.1,112.1 1487.8,115.4 Q1497.4,118.8 1503.5,127.6 Q1509.5,136.4 1507.7,146.8 Q1505.9,157.3 1499.1,164.1 Q1492.4,170.9 1485.8,175.3 Q1479.2,179.6 1472.1,184.1 Q1465.0,188.6 1455.3,190.1Z"/><path d="M1457.2,179.7 Q1450.0,180.9 1443.3,177.2 Q1436.6,173.5 1433.6,166.4 Q1430.5,159.4 1431.3,152.2 Q1432.0,145.0 1435.4,139.2 Q1438.8,133.4 1444.0,129.8 Q1449.1,126.1 1455.0,124.4 Q1460.9,122.6 1467.5,122.3 Q1474.1,122.0 1481.2,124.4 Q1488.4,126.9 1492.8,133.4 Q1497.3,140.0 1496.0,147.7 Q1494.6,155.4 1489.6,160.5 Q1484.6,165.5 1479.8,168.7 Q1474.9,172.0 1469.6,175.3 Q1464.4,178.6 1457.2,179.7Z"/><path d="M1636.3,172.2 Q1626.1,167.1 1622.2,156.6 Q1618.4,146.0 1620.9,137.0 Q1623.4,128.0 1625.7,120.9 Q1628.0,113.8 1630.6,105.2 Q1633.3,96.6 1641.3,90.6 Q1649.4,84.6 1660.1,87.1 Q1670.8,89.5 1678.4,97.4 Q1686.0,105.2 1690.7,113.6 Q1695.4,122.0 1697.8,130.9 Q1700.2,139.9 1697.6,148.4 Q1695.1,156.8 1688.5,162.1 Q1681.9,167.4 1674.1,170.8 Q1666.4,174.2 1656.4,175.7 Q1646.5,177.2 1636.3,172.2Z"/><path d="M1642.1,162.1 Q1634.5,158.4 1631.7,150.6 Q1628.9,142.8 1630.7,136.1 Q1632.6,129.4 1634.3,124.2 Q1636.0,118.9 1637.9,112.6 Q1639.9,106.2 1645.8,101.7 Q1651.8,97.3 1659.7,99.1 Q1667.6,101.0 1673.3,106.8 Q1678.9,112.6 1682.3,118.8 Q1685.8,124.9 1687.6,131.6 Q1689.4,138.3 1687.5,144.5 Q1685.6,150.7 1680.7,154.6 Q1675.9,158.5 1670.1,161.1 Q1664.3,163.6 1657.0,164.7 Q1649.6,165.8 1642.1,162.1Z"/><path d="M1755.1,161.1 Q1746.9,152.7 1741.9,141.2 Q1736.9,129.7 1737.1,118.8 Q1737.3,107.9 1740.7,99.0 Q1744.0,90.2 1750.3,83.8 Q1756.7,77.4 1766.7,78.1 Q1776.8,78.9 1786.1,88.2 Q1795.4,97.5 1800.7,108.4 Q1805.9,119.4 1810.5,129.3 Q1815.1,139.3 1819.3,151.6 Q1823.6,164.0 1821.4,175.4 Q1819.2,186.8 1809.9,189.3 Q1800.6,191.8 1790.5,186.9 Q1780.4,182.1 1771.8,175.8 Q1763.2,169.5 1755.1,161.1Z"/><path d="M1761.2,154.3 Q1755.2,148.1 1751.5,139.5 Q1747.8,131.0 1748.0,122.9 Q1748.1,114.9 1750.6,108.3 Q1753.0,101.8 1757.7,97.1 Q1762.4,92.3 1769.8,92.8 Q1777.3,93.4 1784.2,100.3 Q1791.1,107.2 1795.0,115.3 Q1798.9,123.4 1802.2,130.8 Q1805.6,138.1 1808.8,147.3 Q1811.9,156.4 1810.3,164.8 Q1808.7,173.3 1801.8,175.1 Q1794.9,177.0 1787.4,173.4 Q1779.9,169.8 1773.6,165.1 Q1767.2,160.5 1761.2,154.3Z"/><path d="M1946.8,155.8 Q1944.7,169.7 1939.3,182.5 Q1933.8,195.2 1926.0,203.3 Q1918.1,211.4 1910.2,213.3 Q1902.3,215.1 1895.3,213.5 Q1888.3,211.9 1881.6,207.3 Q1874.8,202.7 1870.8,191.6 Q1866.8,180.5 1869.4,165.4 Q1871.9,150.3 1879.2,138.8 Q1886.5,127.3 1894.2,120.9 Q1901.9,114.4 1909.4,109.6 Q1916.9,104.9 1925.0,103.9 Q1933.1,103.0 1939.3,109.8 Q1945.4,116.6 1947.2,129.2 Q1949.0,141.8 1946.8,155.8Z"/><path d="M1937.1,156.9 Q1935.6,167.3 1931.5,176.7 Q1927.5,186.2 1921.7,192.2 Q1915.9,198.2 1910.0,199.5 Q1904.2,200.9 1899.0,199.7 Q1893.8,198.5 1888.8,195.1 Q1883.8,191.7 1880.9,183.5 Q1877.9,175.3 1879.8,164.1 Q1881.7,152.9 1887.1,144.4 Q1892.5,135.9 1898.2,131.1 Q1903.9,126.3 1909.4,122.8 Q1915.0,119.3 1921.0,118.6 Q1927.0,117.9 1931.6,123.0 Q1936.1,128.0 1937.4,137.3 Q1938.7,146.6 1937.1,156.9Z"/><path d="M2026.6,182.8 Q2018.9,181.2 2013.1,175.0 Q2007.3,168.7 2007.6,161.2 Q2007.9,153.6 2011.2,148.5 Q2014.6,143.3 2017.3,138.5 Q2020.1,133.6 2025.0,129.0 Q2029.8,124.4 2037.5,124.9 Q2045.2,125.3 2051.3,130.7 Q2057.4,136.2 2061.1,142.3 Q2064.9,148.4 2068.0,154.8 Q2071.1,161.3 2071.0,168.4 Q2070.8,175.4 2065.5,179.5 Q2060.2,183.6 2053.6,184.0 Q2046.9,184.4 2040.6,184.4 Q2034.3,184.4 2026.6,182.8Z"/><path d="M2107.4,149.5 Q2105.8,144.0 2107.8,138.4 Q2109.8,132.9 2113.5,127.2 Q2117.2,121.5 2125.5,116.8 Q2133.7,112.1 2143.9,111.6 Q2154.2,111.1 2161.4,113.5 Q2168.5,115.9 2175.2,117.9 Q2181.9,119.9 2189.5,123.2 Q2197.0,126.6 2197.7,132.9 Q2198.5,139.3 2189.8,144.6 Q2181.2,150.0 2171.2,152.0 Q2161.2,154.1 2152.9,155.8 Q2144.7,157.5 2135.0,158.8 Q2125.3,160.1 2117.2,157.6 Q2109.1,155.1 2107.4,149.5Z"/><path d="M2118.3,145.9 Q2117.1,141.8 2118.6,137.7 Q2120.1,133.6 2122.8,129.4 Q2125.5,125.2 2131.6,121.7 Q2137.7,118.2 2145.3,117.9 Q2152.9,117.5 2158.2,119.3 Q2163.5,121.1 2168.4,122.5 Q2173.4,124.0 2179.0,126.5 Q2184.6,128.9 2185.1,133.7 Q2185.6,138.4 2179.2,142.3 Q2172.8,146.3 2165.4,147.8 Q2158.0,149.3 2151.9,150.6 Q2145.8,151.9 2138.7,152.8 Q2131.5,153.8 2125.5,151.9 Q2119.5,150.0 2118.3,145.9Z"/><path d="M2129.1,142.3 Q2128.3,139.7 2129.3,137.0 Q2130.3,134.4 2132.1,131.6 Q2133.8,128.9 2137.8,126.6 Q2141.7,124.4 2146.6,124.1 Q2151.6,123.9 2155.0,125.1 Q2158.5,126.2 2161.7,127.2 Q2164.9,128.1 2168.5,129.7 Q2172.1,131.3 2172.5,134.4 Q2172.8,137.4 2168.7,140.0 Q2164.5,142.6 2159.7,143.5 Q2154.9,144.5 2151.0,145.4 Q2147.0,146.2 2142.3,146.8 Q2137.7,147.4 2133.8,146.2 Q2129.9,145.0 2129.1,142.3Z"/><path d="M2262.2,181.9 Q2257.1,173.9 2254.5,166.0 Q2251.8,158.1 2249.5,149.9 Q2247.1,141.7 2247.6,133.7 Q2248.2,125.8 2253.9,124.1 Q2259.7,122.3 2266.6,126.9 Q2273.6,131.5 2279.0,136.1 Q2284.4,140.6 2290.8,145.3 Q2297.2,150.0 2303.1,158.6 Q2308.9,167.2 2309.1,175.8 Q2309.2,184.3 2304.7,188.0 Q2300.3,191.7 2295.7,193.4 Q2291.2,195.2 2286.0,196.3 Q2280.7,197.4 2274.0,193.7 Q2267.2,189.9 2262.2,181.9Z"/><path d="M2266.0,176.8 Q2262.3,170.9 2260.3,165.0 Q2258.3,159.2 2256.6,153.1 Q2254.9,147.0 2255.3,141.1 Q2255.6,135.3 2259.9,134.0 Q2264.2,132.7 2269.3,136.1 Q2274.4,139.4 2278.4,142.8 Q2282.4,146.2 2287.2,149.7 Q2291.9,153.2 2296.3,159.5 Q2300.6,165.9 2300.7,172.2 Q2300.8,178.5 2297.5,181.3 Q2294.2,184.0 2290.8,185.3 Q2287.5,186.6 2283.6,187.4 Q2279.7,188.3 2274.7,185.5 Q2269.7,182.7 2266.0,176.8Z"/><path d="M2269.8,171.6 Q2267.4,167.8 2266.1,164.0 Q2264.8,160.2 2263.7,156.3 Q2262.6,152.3 2262.9,148.5 Q2263.1,144.7 2265.9,143.8 Q2268.6,143.0 2272.0,145.2 Q2275.3,147.4 2277.9,149.6 Q2280.5,151.8 2283.6,154.1 Q2286.6,156.3 2289.5,160.4 Q2292.3,164.6 2292.3,168.7 Q2292.4,172.8 2290.3,174.5 Q2288.1,176.3 2285.9,177.1 Q2283.8,178.0 2281.2,178.5 Q2278.7,179.1 2275.5,177.3 Q2272.2,175.5 2269.8,171.6Z"/><path d="M2507.5,196.8 Q2500.1,184.6 2497.5,175.3 Q2494.9,166.0 2489.8,157.4 Q2484.8,148.9 2481.3,137.4 Q2477.9,125.9 2483.7,118.7 Q2489.5,111.5 2500.5,112.9 Q2511.5,114.4 2521.7,119.0 Q2531.8,123.7 2541.5,130.0 Q2551.2,136.4 2557.9,146.3 Q2564.6,156.2 2564.5,165.6 Q2564.4,175.1 2561.9,182.1 Q2559.3,189.0 2557.1,197.7 Q2554.9,206.3 2547.2,212.6 Q2539.5,219.0 2527.2,214.0 Q2514.9,209.0 2507.5,196.8Z"/><path d="M2511.9,187.7 Q2506.4,178.7 2504.5,171.8 Q2502.5,164.9 2498.8,158.6 Q2495.0,152.2 2492.5,143.7 Q2490.0,135.2 2494.3,129.9 Q2498.6,124.6 2506.7,125.7 Q2514.8,126.7 2522.3,130.2 Q2529.8,133.6 2537.0,138.3 Q2544.2,143.0 2549.2,150.3 Q2554.1,157.6 2554.0,164.6 Q2554.0,171.6 2552.1,176.8 Q2550.2,182.0 2548.5,188.3 Q2546.9,194.7 2541.2,199.4 Q2535.5,204.1 2526.4,200.4 Q2517.3,196.7 2511.9,187.7Z"/><path d="M2516.2,178.6 Q2512.7,172.8 2511.4,168.3 Q2510.1,163.8 2507.7,159.7 Q2505.3,155.6 2503.6,150.1 Q2502.0,144.6 2504.8,141.1 Q2507.6,137.7 2512.9,138.4 Q2518.1,139.1 2523.0,141.3 Q2527.9,143.5 2532.5,146.6 Q2537.2,149.6 2540.4,154.4 Q2543.6,159.1 2543.6,163.7 Q2543.5,168.2 2542.3,171.5 Q2541.1,174.9 2540.0,179.0 Q2538.9,183.2 2535.3,186.2 Q2531.6,189.3 2525.7,186.9 Q2519.7,184.5 2516.2,178.6Z"/><path d="M2634.8,154.6 Q2625.5,154.8 2613.6,154.6 Q2601.7,154.3 2590.0,149.6 Q2578.3,144.9 2576.4,137.3 Q2574.4,129.7 2580.9,124.5 Q2587.4,119.2 2593.4,115.7 Q2599.3,112.1 2605.5,107.9 Q2611.8,103.8 2622.6,102.3 Q2633.5,100.8 2644.6,104.4 Q2655.7,108.0 2662.9,113.8 Q2670.1,119.5 2675.0,125.8 Q2679.9,132.0 2680.1,138.6 Q2680.2,145.2 2672.6,149.4 Q2664.9,153.5 2654.5,154.0 Q2644.1,154.5 2634.8,154.6Z"/><path d="M2633.3,148.5 Q2626.5,148.6 2617.6,148.4 Q2608.8,148.2 2600.2,144.8 Q2591.5,141.3 2590.1,135.7 Q2588.6,130.0 2593.5,126.1 Q2598.3,122.3 2602.7,119.6 Q2607.0,117.0 2611.7,113.9 Q2616.3,110.8 2624.3,109.7 Q2632.4,108.7 2640.6,111.3 Q2648.8,114.0 2654.1,118.2 Q2659.5,122.5 2663.1,127.1 Q2666.7,131.7 2666.8,136.6 Q2666.9,141.5 2661.3,144.6 Q2655.6,147.6 2647.9,148.0 Q2640.2,148.3 2633.3,148.5Z"/><path d="M2777.8,159.3 Q2772.3,165.4 2765.7,169.9 Q2759.2,174.3 2750.2,176.2 Q2741.2,178.0 2730.8,173.9 Q2720.4,169.8 2712.5,161.1 Q2704.6,152.3 2700.4,142.5 Q2696.1,132.6 2695.1,122.7 Q2694.1,112.9 2698.0,105.0 Q2702.0,97.1 2710.3,94.0 Q2718.6,90.9 2728.0,92.0 Q2737.4,93.0 2747.1,96.1 Q2756.7,99.3 2766.4,106.1 Q2776.1,112.9 2781.5,123.5 Q2786.9,134.0 2785.1,143.6 Q2783.3,153.2 2777.8,159.3Z"/><path d="M2767.7,152.5 Q2763.7,157.0 2758.8,160.3 Q2754.0,163.7 2747.3,165.0 Q2740.7,166.4 2733.0,163.3 Q2725.3,160.3 2719.4,153.9 Q2713.6,147.4 2710.5,140.1 Q2707.3,132.8 2706.6,125.5 Q2705.8,118.2 2708.7,112.3 Q2711.6,106.5 2717.8,104.2 Q2724.0,101.9 2730.9,102.7 Q2737.9,103.5 2745.0,105.8 Q2752.2,108.1 2759.3,113.1 Q2766.5,118.2 2770.5,126.0 Q2774.5,133.8 2773.1,140.9 Q2771.8,148.0 2767.7,152.5Z"/><path d="M2757.7,145.8 Q2755.1,148.7 2751.9,150.8 Q2748.8,153.0 2744.5,153.9 Q2740.2,154.7 2735.2,152.8 Q2730.2,150.8 2726.4,146.6 Q2722.6,142.4 2720.6,137.7 Q2718.5,132.9 2718.0,128.2 Q2717.6,123.5 2719.4,119.7 Q2721.3,115.9 2725.3,114.4 Q2729.3,113.0 2733.8,113.4 Q2738.3,113.9 2743.0,115.4 Q2747.6,116.9 2752.3,120.2 Q2756.9,123.5 2759.5,128.6 Q2762.1,133.6 2761.2,138.2 Q2760.4,142.8 2757.7,145.8Z"/><path d="M-76.1,281.8 Q-84.4,277.4 -89.1,268.8 Q-93.8,260.2 -92.2,250.1 Q-90.6,239.9 -85.1,231.2 Q-79.6,222.4 -71.4,215.3 Q-63.3,208.3 -52.6,205.9 Q-42.0,203.5 -32.9,208.1 Q-23.8,212.6 -18.8,220.1 Q-13.7,227.6 -9.6,235.2 Q-5.5,242.7 -2.8,252.6 Q-0.1,262.5 -4.4,273.1 Q-8.8,283.8 -19.4,288.7 Q-30.1,293.7 -40.4,292.5 Q-50.8,291.3 -59.3,288.8 Q-67.9,286.2 -76.1,281.8Z"/><path d="M-68.5,273.7 Q-74.6,270.5 -78.1,264.1 Q-81.5,257.8 -80.4,250.3 Q-79.2,242.8 -75.1,236.3 Q-71.0,229.8 -65.0,224.6 Q-59.0,219.4 -51.1,217.6 Q-43.2,215.8 -36.5,219.2 Q-29.8,222.5 -26.0,228.1 Q-22.3,233.7 -19.3,239.2 Q-16.2,244.8 -14.2,252.1 Q-12.2,259.5 -15.4,267.4 Q-18.6,275.2 -26.5,278.9 Q-34.4,282.5 -42.1,281.7 Q-49.7,280.8 -56.1,278.9 Q-62.4,277.0 -68.5,273.7Z"/><path d="M-60.8,265.7 Q-64.8,263.6 -67.1,259.5 Q-69.3,255.3 -68.5,250.5 Q-67.8,245.6 -65.1,241.4 Q-62.5,237.2 -58.6,233.8 Q-54.7,230.4 -49.6,229.3 Q-44.5,228.1 -40.1,230.3 Q-35.7,232.5 -33.3,236.1 Q-30.9,239.7 -28.9,243.3 Q-27.0,246.9 -25.7,251.7 Q-24.4,256.4 -26.4,261.6 Q-28.5,266.7 -33.6,269.0 Q-38.7,271.4 -43.7,270.9 Q-48.7,270.3 -52.8,269.1 Q-56.9,267.8 -60.8,265.7Z"/><path d="M-53.2,257.7 Q-55.0,256.7 -56.0,254.8 Q-57.1,252.9 -56.7,250.7 Q-56.4,248.5 -55.2,246.5 Q-54.0,244.6 -52.2,243.0 Q-50.4,241.5 -48.0,241.0 Q-45.7,240.5 -43.7,241.4 Q-41.7,242.4 -40.6,244.1 Q-39.5,245.7 -38.6,247.4 Q-37.7,249.1 -37.1,251.2 Q-36.5,253.4 -37.4,255.8 Q-38.4,258.1 -40.7,259.2 Q-43.1,260.3 -45.3,260.0 Q-47.6,259.8 -49.5,259.2 Q-51.4,258.6 -53.2,257.7Z"/><path d="M140.9,309.4 Q133.9,309.9 123.8,311.4 Q113.8,312.9 108.2,303.0 Q102.6,293.2 107.7,275.9 Q112.9,258.7 122.4,245.2 Q131.9,231.6 140.9,221.1 Q149.9,210.6 159.8,203.1 Q169.7,195.5 177.9,197.3 Q186.2,199.1 190.0,207.7 Q193.8,216.2 197.1,225.3 Q200.4,234.4 202.2,248.2 Q203.9,261.9 197.0,279.6 Q190.1,297.3 177.7,305.5 Q165.3,313.6 156.6,311.3 Q148.0,309.0 140.9,309.4Z"/><path d="M145.2,296.6 Q140.0,297.0 132.5,298.1 Q125.1,299.2 121.0,291.9 Q116.8,284.6 120.6,271.9 Q124.4,259.1 131.5,249.1 Q138.5,239.1 145.2,231.3 Q151.8,223.6 159.2,218.0 Q166.5,212.4 172.6,213.7 Q178.7,215.0 181.5,221.3 Q184.3,227.7 186.8,234.4 Q189.2,241.1 190.5,251.3 Q191.8,261.5 186.7,274.6 Q181.6,287.7 172.4,293.7 Q163.2,299.7 156.8,298.0 Q150.4,296.3 145.2,296.6Z"/><path d="M149.5,283.9 Q146.1,284.1 141.2,284.8 Q136.4,285.5 133.7,280.8 Q131.0,276.1 133.5,267.8 Q136.0,259.5 140.5,253.0 Q145.1,246.5 149.4,241.5 Q153.8,236.5 158.5,232.8 Q163.3,229.2 167.2,230.1 Q171.2,230.9 173.0,235.0 Q174.8,239.1 176.4,243.5 Q178.0,247.8 178.8,254.5 Q179.7,261.1 176.4,269.6 Q173.1,278.1 167.1,282.0 Q161.1,285.9 157.0,284.8 Q152.8,283.7 149.5,283.9Z"/><path d="M339.6,294.8 Q334.6,300.3 327.2,301.1 Q319.8,301.9 312.2,298.8 Q304.7,295.7 298.6,289.5 Q292.6,283.4 288.9,276.0 Q285.3,268.7 283.0,261.2 Q280.6,253.7 279.4,245.0 Q278.2,236.3 281.3,228.5 Q284.5,220.8 292.4,219.7 Q300.4,218.7 308.2,224.4 Q316.0,230.1 321.1,236.8 Q326.2,243.5 330.8,249.5 Q335.5,255.6 339.9,263.6 Q344.2,271.6 344.4,280.4 Q344.5,289.3 339.6,294.8Z"/><path d="M332.0,286.3 Q328.3,290.3 322.8,290.9 Q317.4,291.5 311.8,289.2 Q306.2,286.9 301.7,282.4 Q297.2,277.8 294.5,272.4 Q291.9,267.0 290.1,261.4 Q288.4,255.9 287.5,249.4 Q286.6,243.0 288.9,237.3 Q291.2,231.6 297.1,230.8 Q303.0,230.0 308.8,234.2 Q314.6,238.4 318.4,243.4 Q322.1,248.3 325.6,252.8 Q329.0,257.3 332.2,263.2 Q335.4,269.1 335.6,275.7 Q335.7,282.2 332.0,286.3Z"/><path d="M324.5,277.8 Q322.1,280.4 318.5,280.8 Q315.0,281.2 311.3,279.7 Q307.7,278.2 304.8,275.3 Q301.9,272.3 300.2,268.8 Q298.4,265.2 297.3,261.7 Q296.2,258.1 295.6,253.9 Q295.0,249.7 296.5,246.0 Q298.0,242.3 301.8,241.8 Q305.6,241.2 309.4,244.0 Q313.2,246.7 315.6,249.9 Q318.0,253.2 320.3,256.1 Q322.5,259.0 324.6,262.8 Q326.7,266.6 326.8,270.9 Q326.8,275.1 324.5,277.8Z"/><path d="M316.9,269.3 Q315.8,270.5 314.2,270.7 Q312.5,270.8 310.9,270.2 Q309.2,269.5 307.9,268.1 Q306.6,266.8 305.8,265.2 Q305.0,263.5 304.4,261.9 Q303.9,260.2 303.7,258.3 Q303.4,256.4 304.1,254.7 Q304.8,253.0 306.5,252.8 Q308.3,252.5 310.0,253.8 Q311.7,255.0 312.8,256.5 Q314.0,258.0 315.0,259.3 Q316.0,260.7 317.0,262.4 Q317.9,264.2 318.0,266.1 Q318.0,268.1 316.9,269.3Z"/><path d="M458.9,236.1 Q458.2,248.3 456.1,261.8 Q454.0,275.3 446.8,287.1 Q439.5,298.9 429.2,300.0 Q419.0,301.1 411.8,294.0 Q404.7,286.9 399.1,280.7 Q393.5,274.6 386.6,267.1 Q379.8,259.5 377.7,245.7 Q375.5,231.9 382.0,219.0 Q388.4,206.2 397.7,200.3 Q406.9,194.4 415.3,190.9 Q423.7,187.5 432.7,186.5 Q441.7,185.5 448.8,192.5 Q455.9,199.5 457.7,211.8 Q459.5,224.0 458.9,236.1Z"/><path d="M449.1,237.4 Q448.7,246.4 447.1,256.4 Q445.6,266.3 440.2,275.1 Q434.8,283.8 427.2,284.6 Q419.6,285.5 414.3,280.2 Q409.0,274.9 404.9,270.4 Q400.7,265.9 395.7,260.3 Q390.6,254.7 389.1,244.5 Q387.5,234.2 392.2,224.7 Q397.0,215.2 403.9,210.8 Q410.7,206.5 416.9,203.9 Q423.1,201.4 429.8,200.7 Q436.4,199.9 441.7,205.1 Q446.9,210.3 448.3,219.4 Q449.6,228.4 449.1,237.4Z"/><path d="M439.4,238.6 Q439.1,244.5 438.1,250.9 Q437.1,257.4 433.6,263.1 Q430.1,268.7 425.2,269.3 Q420.3,269.8 416.8,266.4 Q413.4,263.0 410.7,260.1 Q408.0,257.1 404.7,253.5 Q401.5,249.9 400.4,243.2 Q399.4,236.6 402.5,230.4 Q405.6,224.3 410.0,221.4 Q414.5,218.6 418.5,216.9 Q422.5,215.3 426.8,214.8 Q431.2,214.4 434.6,217.7 Q438.0,221.1 438.9,226.9 Q439.7,232.8 439.4,238.6Z"/><path d="M429.7,239.9 Q429.5,242.6 429.1,245.5 Q428.6,248.5 427.0,251.1 Q425.4,253.7 423.2,253.9 Q420.9,254.2 419.3,252.6 Q417.8,251.1 416.5,249.7 Q415.3,248.4 413.8,246.7 Q412.3,245.0 411.8,242.0 Q411.4,239.0 412.8,236.1 Q414.2,233.3 416.2,232.0 Q418.3,230.7 420.1,230.0 Q421.9,229.2 423.9,229.0 Q425.9,228.8 427.5,230.3 Q429.0,231.8 429.4,234.5 Q429.8,237.2 429.7,239.9Z"/><path d="M549.1,290.4 Q543.6,289.8 539.3,287.6 Q535.0,285.4 530.9,282.8 Q526.8,280.3 524.0,275.8 Q521.2,271.3 521.8,265.9 Q522.4,260.5 525.4,256.3 Q528.3,252.1 531.7,248.5 Q535.2,244.9 540.0,242.4 Q544.9,239.9 550.2,241.5 Q555.5,243.1 558.2,248.0 Q560.9,253.0 561.6,257.8 Q562.4,262.5 563.5,267.2 Q564.7,271.9 564.1,277.8 Q563.5,283.6 559.0,287.3 Q554.6,291.0 549.1,290.4Z"/><path d="M700.0,282.8 Q693.2,288.8 683.3,295.1 Q673.4,301.5 660.9,299.1 Q648.4,296.8 641.9,284.9 Q635.5,273.1 636.5,260.9 Q637.5,248.8 639.4,239.2 Q641.2,229.6 644.2,219.5 Q647.1,209.3 655.4,202.2 Q663.6,195.1 674.6,195.1 Q685.5,195.1 695.6,199.6 Q705.7,204.0 714.7,211.7 Q723.7,219.3 727.7,231.0 Q731.7,242.8 727.2,253.6 Q722.6,264.5 714.7,270.6 Q706.9,276.7 700.0,282.8Z"/><path d="M694.8,273.2 Q689.7,277.7 682.4,282.4 Q675.1,287.1 665.8,285.4 Q656.5,283.6 651.8,274.8 Q647.0,266.1 647.7,257.1 Q648.5,248.1 649.9,241.0 Q651.2,233.9 653.4,226.4 Q655.6,218.9 661.7,213.6 Q667.8,208.4 675.9,208.4 Q684.0,208.4 691.5,211.7 Q699.0,215.0 705.6,220.6 Q712.3,226.2 715.2,234.9 Q718.2,243.6 714.8,251.7 Q711.5,259.7 705.6,264.2 Q699.8,268.8 694.8,273.2Z"/><path d="M689.5,263.7 Q686.2,266.6 681.5,269.6 Q676.7,272.7 670.7,271.6 Q664.7,270.5 661.6,264.7 Q658.5,259.0 659.0,253.2 Q659.5,247.4 660.3,242.8 Q661.2,238.2 662.7,233.3 Q664.1,228.5 668.0,225.0 Q672.0,221.6 677.3,221.6 Q682.5,221.6 687.4,223.8 Q692.2,225.9 696.5,229.6 Q700.8,233.2 702.8,238.9 Q704.7,244.5 702.5,249.7 Q700.3,254.9 696.5,257.9 Q692.8,260.8 689.5,263.7Z"/><path d="M763.8,284.0 Q759.7,282.1 758.1,278.1 Q756.6,274.1 758.9,268.4 Q761.1,262.6 766.7,257.3 Q772.2,252.0 778.2,248.4 Q784.2,244.8 790.1,241.7 Q796.0,238.7 802.7,236.6 Q809.4,234.4 814.3,235.9 Q819.2,237.4 819.2,242.6 Q819.2,247.7 815.6,253.5 Q812.0,259.3 807.6,264.3 Q803.1,269.4 797.7,274.0 Q792.2,278.7 785.8,281.8 Q779.3,285.0 773.6,285.5 Q767.8,285.9 763.8,284.0Z"/><path d="M770.1,278.0 Q767.1,276.6 765.9,273.6 Q764.7,270.7 766.4,266.4 Q768.1,262.2 772.2,258.2 Q776.3,254.3 780.8,251.6 Q785.2,249.0 789.6,246.7 Q793.9,244.5 798.9,242.9 Q803.8,241.3 807.5,242.4 Q811.1,243.5 811.1,247.3 Q811.1,251.1 808.4,255.4 Q805.8,259.7 802.5,263.4 Q799.2,267.2 795.2,270.6 Q791.1,274.1 786.4,276.4 Q781.6,278.7 777.3,279.1 Q773.0,279.4 770.1,278.0Z"/><path d="M876.9,258.1 Q868.1,251.5 864.9,240.3 Q861.6,229.2 865.2,218.0 Q868.7,206.8 876.2,197.8 Q883.7,188.9 894.4,184.0 Q905.2,179.2 916.5,182.1 Q927.7,185.0 934.8,193.1 Q941.9,201.3 947.0,209.0 Q952.1,216.7 958.5,226.0 Q964.8,235.3 966.1,248.6 Q967.4,261.9 958.0,271.3 Q948.6,280.7 935.6,280.2 Q922.6,279.8 913.0,275.6 Q903.4,271.4 894.5,268.1 Q885.6,264.8 876.9,258.1Z"/><path d="M1014.5,269.7 Q1004.4,261.4 996.5,250.5 Q988.6,239.5 983.6,226.9 Q978.5,214.3 980.3,203.3 Q982.1,192.2 991.5,188.7 Q1000.9,185.2 1011.8,188.5 Q1022.6,191.7 1032.0,195.5 Q1041.4,199.2 1052.6,204.3 Q1063.7,209.3 1074.4,220.4 Q1085.0,231.5 1087.7,244.7 Q1090.3,257.9 1084.7,266.1 Q1079.2,274.4 1071.3,278.1 Q1063.4,281.8 1054.5,283.1 Q1045.7,284.5 1035.1,281.3 Q1024.6,278.0 1014.5,269.7Z"/><path d="M1019.5,260.9 Q1012.0,254.8 1006.1,246.7 Q1000.3,238.6 996.6,229.2 Q992.9,219.9 994.2,211.7 Q995.5,203.5 1002.4,200.9 Q1009.4,198.4 1017.4,200.8 Q1025.5,203.2 1032.4,206.0 Q1039.4,208.7 1047.6,212.5 Q1055.9,216.2 1063.8,224.4 Q1071.7,232.6 1073.6,242.4 Q1075.6,252.2 1071.4,258.2 Q1067.3,264.3 1061.5,267.1 Q1055.6,269.8 1049.1,270.8 Q1042.6,271.8 1034.7,269.4 Q1026.9,267.1 1019.5,260.9Z"/><path d="M1270.8,280.3 Q1266.3,274.0 1262.9,269.3 Q1259.5,264.5 1255.4,258.9 Q1251.3,253.4 1250.5,247.6 Q1249.7,241.8 1253.6,239.6 Q1257.5,237.3 1262.7,237.5 Q1267.8,237.7 1273.5,238.8 Q1279.2,239.9 1285.6,244.0 Q1291.9,248.2 1295.3,254.5 Q1298.6,260.9 1298.3,265.7 Q1298.0,270.5 1298.3,274.8 Q1298.6,279.1 1298.8,284.9 Q1298.9,290.8 1294.3,293.2 Q1289.6,295.6 1282.5,291.1 Q1275.3,286.7 1270.8,280.3Z"/><path d="M1272.5,275.8 Q1269.2,271.1 1266.7,267.6 Q1264.1,264.1 1261.1,260.0 Q1258.1,255.8 1257.5,251.6 Q1256.8,247.3 1259.7,245.6 Q1262.6,243.9 1266.5,244.1 Q1270.3,244.3 1274.5,245.1 Q1278.7,245.9 1283.4,248.9 Q1288.1,252.0 1290.6,256.7 Q1293.1,261.4 1292.8,265.0 Q1292.6,268.5 1292.8,271.7 Q1293.1,274.9 1293.2,279.2 Q1293.3,283.5 1289.9,285.3 Q1286.4,287.1 1281.1,283.8 Q1275.8,280.5 1272.5,275.8Z"/><path d="M1274.2,271.3 Q1272.0,268.2 1270.4,265.9 Q1268.8,263.7 1266.8,261.0 Q1264.8,258.3 1264.4,255.5 Q1264.0,252.8 1265.9,251.7 Q1267.8,250.6 1270.3,250.7 Q1272.8,250.8 1275.5,251.3 Q1278.2,251.9 1281.3,253.8 Q1284.3,255.8 1285.9,258.9 Q1287.5,261.9 1287.4,264.2 Q1287.2,266.5 1287.4,268.6 Q1287.5,270.7 1287.6,273.5 Q1287.7,276.3 1285.5,277.4 Q1283.2,278.6 1279.8,276.4 Q1276.4,274.3 1274.2,271.3Z"/><path d="M1383.0,262.0 Q1377.4,266.9 1370.8,264.6 Q1364.2,262.2 1361.6,255.0 Q1358.9,247.7 1358.5,241.2 Q1358.2,234.8 1358.0,228.8 Q1357.7,222.8 1359.8,216.7 Q1361.9,210.7 1366.9,207.5 Q1371.8,204.2 1377.2,203.4 Q1382.6,202.6 1388.6,202.6 Q1394.6,202.7 1400.4,206.5 Q1406.2,210.3 1407.2,218.0 Q1408.1,225.7 1404.1,231.8 Q1400.2,237.8 1396.9,241.6 Q1393.6,245.3 1391.2,251.2 Q1388.7,257.0 1383.0,262.0Z"/><path d="M1382.3,253.8 Q1378.1,257.5 1373.3,255.8 Q1368.4,254.0 1366.4,248.7 Q1364.4,243.3 1364.2,238.5 Q1364.0,233.7 1363.8,229.3 Q1363.6,224.8 1365.2,220.4 Q1366.7,215.9 1370.4,213.5 Q1374.0,211.1 1378.0,210.5 Q1382.0,209.9 1386.4,209.9 Q1390.9,210.0 1395.2,212.8 Q1399.5,215.6 1400.2,221.3 Q1400.8,227.0 1397.9,231.5 Q1395.0,236.0 1392.6,238.8 Q1390.1,241.5 1388.3,245.9 Q1386.5,250.2 1382.3,253.8Z"/><path d="M1538.8,244.7 Q1538.9,253.0 1534.6,263.0 Q1530.4,272.9 1523.1,277.5 Q1515.9,282.0 1510.4,280.4 Q1504.8,278.8 1500.8,276.1 Q1496.7,273.5 1493.2,269.4 Q1489.7,265.3 1489.6,257.6 Q1489.4,249.8 1492.9,241.4 Q1496.4,232.9 1501.0,225.4 Q1505.5,218.0 1511.4,210.5 Q1517.3,203.1 1524.3,200.1 Q1531.3,197.1 1535.1,202.4 Q1538.9,207.6 1538.7,215.7 Q1538.5,223.8 1538.6,230.2 Q1538.6,236.5 1538.8,244.7Z"/><path d="M1632.1,295.8 Q1621.5,295.7 1609.5,293.8 Q1597.6,291.9 1586.6,285.2 Q1575.6,278.6 1573.3,268.3 Q1571.1,258.0 1578.0,250.4 Q1584.9,242.8 1592.7,238.4 Q1600.5,234.0 1607.7,229.0 Q1614.9,224.0 1626.2,220.8 Q1637.4,217.7 1649.8,221.6 Q1662.3,225.5 1669.2,234.3 Q1676.1,243.2 1677.8,252.4 Q1679.4,261.5 1677.7,269.9 Q1676.0,278.3 1669.5,284.7 Q1663.0,291.1 1652.8,293.5 Q1642.7,295.9 1632.1,295.8Z"/><path d="M1664.1,284.5 Q1655.5,278.4 1653.0,268.6 Q1650.6,258.8 1660.8,250.5 Q1671.0,242.2 1685.6,240.9 Q1700.1,239.6 1710.5,240.5 Q1720.8,241.4 1731.9,240.3 Q1742.9,239.1 1756.1,241.3 Q1769.2,243.4 1774.9,251.8 Q1780.5,260.2 1775.6,269.6 Q1770.6,278.9 1762.0,285.9 Q1753.3,293.0 1743.1,298.2 Q1732.9,303.5 1720.8,304.9 Q1708.6,306.3 1698.6,303.1 Q1688.5,299.8 1680.6,295.2 Q1672.7,290.6 1664.1,284.5Z"/><path d="M1677.5,280.6 Q1671.1,276.1 1669.3,268.9 Q1667.4,261.6 1675.0,255.5 Q1682.6,249.4 1693.3,248.4 Q1704.1,247.4 1711.8,248.1 Q1719.4,248.8 1727.6,247.9 Q1735.8,247.1 1745.5,248.6 Q1755.3,250.2 1759.4,256.5 Q1763.6,262.7 1759.9,269.6 Q1756.3,276.5 1749.9,281.7 Q1743.5,286.9 1735.9,290.8 Q1728.4,294.7 1719.4,295.8 Q1710.4,296.8 1703.0,294.4 Q1695.6,292.0 1689.7,288.6 Q1683.8,285.2 1677.5,280.6Z"/><path d="M1886.4,261.7 Q1880.5,263.8 1874.5,262.1 Q1868.5,260.5 1863.4,259.2 Q1858.3,258.0 1852.6,254.7 Q1846.9,251.5 1843.3,244.9 Q1839.7,238.3 1839.3,231.8 Q1838.9,225.3 1839.0,219.0 Q1839.2,212.7 1841.1,206.2 Q1843.1,199.7 1849.1,198.4 Q1855.1,197.1 1861.2,202.8 Q1867.4,208.5 1870.7,214.6 Q1874.1,220.7 1878.2,225.0 Q1882.4,229.3 1887.5,236.5 Q1892.6,243.7 1892.5,251.6 Q1892.3,259.5 1886.4,261.7Z"/><path d="M1880.3,254.3 Q1875.9,255.9 1871.5,254.7 Q1867.0,253.4 1863.2,252.5 Q1859.4,251.6 1855.2,249.2 Q1851.0,246.8 1848.4,241.9 Q1845.7,237.1 1845.4,232.2 Q1845.1,227.4 1845.2,222.7 Q1845.3,218.1 1846.8,213.3 Q1848.2,208.5 1852.6,207.5 Q1857.1,206.6 1861.6,210.8 Q1866.2,215.0 1868.7,219.5 Q1871.1,224.0 1874.2,227.2 Q1877.3,230.4 1881.1,235.7 Q1884.9,241.1 1884.7,246.9 Q1884.6,252.7 1880.3,254.3Z"/><path d="M1874.1,247.0 Q1871.3,248.0 1868.4,247.2 Q1865.5,246.4 1863.1,245.8 Q1860.6,245.2 1857.9,243.7 Q1855.2,242.1 1853.4,239.0 Q1851.7,235.8 1851.5,232.7 Q1851.3,229.5 1851.4,226.5 Q1851.5,223.5 1852.4,220.4 Q1853.3,217.3 1856.2,216.7 Q1859.1,216.0 1862.0,218.8 Q1865.0,221.5 1866.6,224.4 Q1868.2,227.3 1870.2,229.4 Q1872.2,231.5 1874.6,234.9 Q1877.1,238.4 1877.0,242.2 Q1877.0,246.0 1874.1,247.0Z"/><path d="M1868.0,239.7 Q1866.7,240.2 1865.4,239.8 Q1864.0,239.4 1862.9,239.1 Q1861.8,238.9 1860.5,238.2 Q1859.3,237.4 1858.5,236.0 Q1857.7,234.5 1857.6,233.1 Q1857.5,231.7 1857.6,230.3 Q1857.6,228.9 1858.0,227.5 Q1858.4,226.1 1859.8,225.8 Q1861.1,225.5 1862.4,226.7 Q1863.8,228.0 1864.5,229.3 Q1865.3,230.7 1866.2,231.6 Q1867.1,232.6 1868.2,234.1 Q1869.3,235.7 1869.3,237.5 Q1869.3,239.2 1868.0,239.7Z"/><path d="M1979.3,241.8 Q1973.4,247.5 1968.1,250.9 Q1962.8,254.2 1957.5,257.9 Q1952.2,261.6 1946.4,263.1 Q1940.6,264.7 1937.7,261.2 Q1934.9,257.6 1935.5,251.9 Q1936.1,246.3 1937.2,240.7 Q1938.3,235.2 1941.0,228.5 Q1943.7,221.9 1949.6,216.6 Q1955.5,211.3 1961.1,211.0 Q1966.7,210.7 1970.2,212.4 Q1973.7,214.0 1978.0,214.8 Q1982.2,215.5 1985.8,218.9 Q1989.3,222.2 1987.3,229.2 Q1985.3,236.2 1979.3,241.8Z"/><path d="M1974.2,240.2 Q1969.8,244.4 1965.9,246.9 Q1961.9,249.4 1958.0,252.1 Q1954.2,254.8 1949.8,256.0 Q1945.5,257.2 1943.4,254.5 Q1941.3,251.9 1941.8,247.7 Q1942.2,243.5 1943.0,239.4 Q1943.8,235.3 1945.8,230.4 Q1947.8,225.4 1952.2,221.5 Q1956.6,217.6 1960.7,217.4 Q1964.9,217.2 1967.5,218.4 Q1970.1,219.7 1973.2,220.2 Q1976.4,220.7 1979.0,223.2 Q1981.6,225.7 1980.1,230.9 Q1978.6,236.0 1974.2,240.2Z"/><path d="M2087.1,275.2 Q2083.0,279.7 2077.6,278.7 Q2072.3,277.7 2069.0,271.7 Q2065.6,265.7 2064.9,259.2 Q2064.1,252.8 2064.0,247.3 Q2063.9,241.8 2064.6,236.0 Q2065.3,230.3 2068.0,225.4 Q2070.7,220.4 2075.1,218.1 Q2079.6,215.9 2084.5,216.6 Q2089.4,217.4 2093.5,221.6 Q2097.7,225.7 2099.2,232.3 Q2100.7,238.8 2099.6,244.8 Q2098.4,250.8 2096.7,255.4 Q2095.0,260.1 2093.1,265.5 Q2091.1,270.8 2087.1,275.2Z"/><path d="M2085.6,267.7 Q2082.5,271.0 2078.6,270.2 Q2074.6,269.5 2072.1,265.1 Q2069.7,260.6 2069.1,255.9 Q2068.6,251.1 2068.5,247.0 Q2068.4,242.9 2068.9,238.7 Q2069.4,234.4 2071.4,230.8 Q2073.5,227.1 2076.7,225.5 Q2080.0,223.8 2083.6,224.4 Q2087.3,224.9 2090.3,228.0 Q2093.4,231.1 2094.5,235.9 Q2095.7,240.8 2094.8,245.2 Q2093.9,249.6 2092.7,253.1 Q2091.4,256.5 2090.0,260.5 Q2088.6,264.4 2085.6,267.7Z"/><path d="M2084.0,260.2 Q2082.1,262.3 2079.5,261.8 Q2076.9,261.4 2075.3,258.5 Q2073.7,255.6 2073.4,252.5 Q2073.0,249.4 2072.9,246.8 Q2072.9,244.1 2073.2,241.4 Q2073.6,238.6 2074.9,236.2 Q2076.2,233.9 2078.3,232.8 Q2080.4,231.7 2082.8,232.1 Q2085.1,232.4 2087.1,234.4 Q2089.1,236.4 2089.8,239.6 Q2090.6,242.7 2090.0,245.6 Q2089.5,248.4 2088.7,250.7 Q2087.8,252.9 2086.9,255.5 Q2086.0,258.0 2084.0,260.2Z"/><path d="M2082.5,252.6 Q2081.6,253.6 2080.4,253.4 Q2079.2,253.2 2078.5,251.9 Q2077.8,250.5 2077.6,249.1 Q2077.4,247.7 2077.4,246.5 Q2077.4,245.3 2077.5,244.0 Q2077.7,242.8 2078.3,241.7 Q2078.9,240.6 2079.9,240.1 Q2080.8,239.6 2081.9,239.8 Q2083.0,239.9 2083.9,240.8 Q2084.8,241.8 2085.2,243.2 Q2085.5,244.6 2085.2,245.9 Q2085.0,247.3 2084.6,248.3 Q2084.2,249.3 2083.8,250.5 Q2083.4,251.7 2082.5,252.6Z"/><path d="M2248.1,273.4 Q2237.4,278.2 2228.4,283.1 Q2219.5,287.9 2206.8,294.3 Q2194.2,300.7 2181.9,301.2 Q2169.6,301.7 2168.7,293.3 Q2167.8,284.8 2176.0,275.0 Q2184.1,265.2 2191.4,258.2 Q2198.7,251.1 2205.7,243.7 Q2212.7,236.2 2223.6,229.5 Q2234.5,222.8 2245.5,221.1 Q2256.5,219.5 2264.3,221.9 Q2272.1,224.4 2277.0,229.4 Q2281.9,234.5 2280.1,243.0 Q2278.4,251.4 2268.5,260.0 Q2258.7,268.5 2248.1,273.4Z"/><path d="M2242.4,269.7 Q2234.5,273.3 2227.8,276.8 Q2221.2,280.4 2211.8,285.2 Q2202.5,289.9 2193.4,290.3 Q2184.3,290.6 2183.6,284.4 Q2183.0,278.1 2189.0,270.9 Q2195.1,263.6 2200.4,258.4 Q2205.8,253.2 2211.0,247.7 Q2216.2,242.1 2224.3,237.2 Q2232.4,232.2 2240.5,231.0 Q2248.6,229.8 2254.4,231.6 Q2260.2,233.4 2263.8,237.2 Q2267.4,240.9 2266.1,247.1 Q2264.8,253.4 2257.5,259.7 Q2250.2,266.0 2242.4,269.7Z"/><path d="M2236.7,265.9 Q2231.6,268.3 2227.3,270.6 Q2222.9,272.9 2216.9,276.0 Q2210.8,279.1 2204.9,279.3 Q2199.0,279.6 2198.6,275.5 Q2198.1,271.4 2202.1,266.7 Q2206.0,262.0 2209.5,258.6 Q2213.0,255.3 2216.3,251.7 Q2219.7,248.1 2224.9,244.9 Q2230.2,241.7 2235.5,240.9 Q2240.7,240.1 2244.5,241.3 Q2248.2,242.4 2250.6,244.9 Q2252.9,247.3 2252.1,251.3 Q2251.2,255.4 2246.5,259.5 Q2241.8,263.6 2236.7,265.9Z"/><path d="M2315.0,249.6 Q2309.2,246.3 2307.9,240.3 Q2306.5,234.2 2311.2,227.9 Q2315.9,221.5 2323.2,216.4 Q2330.5,211.3 2339.5,207.6 Q2348.5,203.9 2357.8,204.0 Q2367.2,204.2 2372.0,209.0 Q2376.8,213.8 2377.6,219.2 Q2378.4,224.5 2380.3,229.4 Q2382.2,234.3 2382.5,241.4 Q2382.8,248.4 2375.5,255.2 Q2368.2,262.0 2357.4,263.0 Q2346.6,264.0 2339.3,261.0 Q2332.0,258.0 2326.4,255.5 Q2320.8,252.9 2315.0,249.6Z"/><path d="M2323.5,245.6 Q2319.2,243.2 2318.2,238.7 Q2317.2,234.2 2320.6,229.5 Q2324.1,224.8 2329.5,221.1 Q2334.9,217.3 2341.6,214.5 Q2348.2,211.8 2355.2,211.9 Q2362.1,212.0 2365.6,215.6 Q2369.2,219.1 2369.8,223.1 Q2370.4,227.1 2371.8,230.7 Q2373.2,234.3 2373.4,239.5 Q2373.7,244.8 2368.2,249.8 Q2362.8,254.8 2354.8,255.5 Q2346.9,256.3 2341.4,254.1 Q2336.0,251.8 2331.9,250.0 Q2327.7,248.1 2323.5,245.6Z"/><path d="M2331.9,241.6 Q2329.1,240.0 2328.5,237.1 Q2327.8,234.2 2330.1,231.2 Q2332.3,228.1 2335.8,225.7 Q2339.3,223.3 2343.7,221.5 Q2348.0,219.7 2352.5,219.7 Q2357.0,219.8 2359.3,222.1 Q2361.6,224.4 2362.0,227.0 Q2362.3,229.6 2363.3,231.9 Q2364.2,234.3 2364.3,237.7 Q2364.5,241.1 2361.0,244.3 Q2357.5,247.6 2352.3,248.1 Q2347.1,248.5 2343.6,247.1 Q2340.1,245.7 2337.4,244.4 Q2334.7,243.2 2331.9,241.6Z"/><path d="M2434.3,260.3 Q2433.6,253.3 2433.2,247.2 Q2432.8,241.0 2434.1,234.9 Q2435.3,228.8 2439.1,225.3 Q2442.9,221.9 2447.6,221.0 Q2452.2,220.2 2457.5,220.7 Q2462.7,221.2 2468.0,225.5 Q2473.3,229.9 2474.8,237.9 Q2476.3,245.9 2473.5,252.1 Q2470.7,258.3 2468.1,262.0 Q2465.5,265.8 2463.7,271.5 Q2462.0,277.2 2457.6,282.1 Q2453.2,287.1 2447.2,284.8 Q2441.2,282.5 2438.1,274.9 Q2435.0,267.3 2434.3,260.3Z"/><path d="M2439.1,257.6 Q2438.6,252.5 2438.3,247.9 Q2438.0,243.3 2438.9,238.8 Q2439.8,234.3 2442.6,231.7 Q2445.4,229.2 2448.9,228.6 Q2452.3,227.9 2456.2,228.3 Q2460.1,228.7 2464.0,231.9 Q2467.9,235.1 2469.0,241.0 Q2470.2,247.0 2468.1,251.5 Q2466.0,256.1 2464.1,258.9 Q2462.1,261.7 2460.8,265.9 Q2459.6,270.1 2456.3,273.8 Q2453.0,277.5 2448.6,275.8 Q2444.2,274.1 2441.9,268.4 Q2439.6,262.8 2439.1,257.6Z"/><path d="M2600.3,239.6 Q2598.9,247.3 2591.6,250.7 Q2584.3,254.1 2578.0,254.4 Q2571.7,254.8 2566.4,256.6 Q2561.0,258.3 2553.9,258.4 Q2546.8,258.4 2541.7,253.3 Q2536.6,248.2 2536.0,241.4 Q2535.3,234.5 2536.3,228.3 Q2537.3,222.0 2540.0,215.8 Q2542.7,209.6 2549.1,206.6 Q2555.5,203.7 2562.1,206.1 Q2568.8,208.6 2573.4,211.9 Q2578.0,215.2 2584.0,217.7 Q2590.0,220.1 2595.8,226.0 Q2601.6,231.8 2600.3,239.6Z"/><path d="M2591.1,237.9 Q2590.1,243.7 2584.7,246.2 Q2579.2,248.7 2574.6,249.0 Q2569.9,249.2 2566.0,250.5 Q2562.0,251.8 2556.8,251.8 Q2551.5,251.9 2547.7,248.1 Q2543.9,244.4 2543.5,239.3 Q2543.0,234.2 2543.8,229.6 Q2544.5,224.9 2546.5,220.3 Q2548.5,215.7 2553.2,213.6 Q2557.9,211.4 2562.8,213.2 Q2567.8,215.0 2571.2,217.5 Q2574.6,219.9 2579.0,221.7 Q2583.5,223.6 2587.8,227.9 Q2592.1,232.2 2591.1,237.9Z"/><path d="M2581.9,236.3 Q2581.2,240.0 2577.7,241.7 Q2574.2,243.3 2571.2,243.5 Q2568.2,243.6 2565.6,244.5 Q2563.0,245.3 2559.6,245.3 Q2556.2,245.4 2553.8,242.9 Q2551.3,240.5 2551.0,237.2 Q2550.7,233.9 2551.2,230.9 Q2551.7,227.9 2553.0,224.9 Q2554.3,221.9 2557.3,220.5 Q2560.4,219.1 2563.6,220.3 Q2566.7,221.4 2569.0,223.0 Q2571.2,224.6 2574.1,225.8 Q2576.9,227.0 2579.7,229.8 Q2582.5,232.6 2581.9,236.3Z"/><path d="M2572.7,234.7 Q2572.4,236.4 2570.8,237.1 Q2569.2,237.9 2567.8,238.0 Q2566.4,238.1 2565.2,238.4 Q2564.0,238.8 2562.5,238.8 Q2560.9,238.8 2559.8,237.7 Q2558.7,236.6 2558.5,235.1 Q2558.4,233.6 2558.6,232.2 Q2558.8,230.8 2559.4,229.5 Q2560.0,228.1 2561.4,227.5 Q2562.8,226.8 2564.3,227.3 Q2565.7,227.9 2566.8,228.6 Q2567.8,229.3 2569.1,229.9 Q2570.4,230.4 2571.7,231.7 Q2573.0,233.0 2572.7,234.7Z"/><path d="M2672.8,312.8 Q2665.0,317.0 2657.7,314.2 Q2650.3,311.4 2649.5,299.9 Q2648.7,288.5 2652.9,277.7 Q2657.1,267.0 2659.8,258.9 Q2662.5,250.8 2665.5,239.6 Q2668.4,228.4 2675.9,219.3 Q2683.4,210.3 2691.1,212.4 Q2698.8,214.6 2702.3,223.2 Q2705.7,231.7 2708.0,239.3 Q2710.3,246.9 2711.9,256.0 Q2713.4,265.1 2710.2,275.6 Q2707.0,286.2 2700.3,293.0 Q2693.7,299.8 2687.1,304.2 Q2680.5,308.6 2672.8,312.8Z"/><path d="M35.3,405.1 Q25.7,406.9 16.9,401.3 Q8.2,395.8 1.2,387.9 Q-5.8,380.0 -11.2,369.7 Q-16.7,359.3 -19.1,346.4 Q-21.6,333.6 -20.5,320.4 Q-19.5,307.3 -15.0,295.6 Q-10.5,284.0 -2.2,278.0 Q6.2,272.0 15.7,276.4 Q25.2,280.9 31.5,292.4 Q37.8,303.9 41.3,315.0 Q44.9,326.1 48.8,337.7 Q52.7,349.3 54.2,364.3 Q55.6,379.3 50.3,391.4 Q44.9,403.4 35.3,405.1Z"/><path d="M30.3,388.6 Q23.2,389.9 16.7,385.8 Q10.3,381.7 5.1,375.8 Q-0.0,370.0 -4.1,362.4 Q-8.1,354.7 -9.9,345.2 Q-11.7,335.6 -11.0,325.9 Q-10.2,316.2 -6.9,307.6 Q-3.5,298.9 2.6,294.5 Q8.8,290.0 15.9,293.4 Q22.9,296.7 27.5,305.2 Q32.2,313.7 34.8,321.9 Q37.5,330.1 40.3,338.7 Q43.2,347.2 44.3,358.4 Q45.4,369.5 41.4,378.4 Q37.5,387.3 30.3,388.6Z"/><path d="M93.1,409.9 Q86.0,401.3 86.8,390.1 Q87.7,378.9 89.2,369.2 Q90.7,359.6 92.8,347.6 Q95.0,335.6 105.1,324.6 Q115.1,313.5 129.2,312.8 Q143.3,312.1 152.2,319.2 Q161.2,326.4 167.6,332.6 Q174.1,338.9 181.3,346.2 Q188.5,353.5 189.1,365.2 Q189.7,377.0 180.8,387.3 Q171.9,397.6 160.5,403.5 Q149.1,409.5 137.4,414.0 Q125.6,418.5 112.9,418.5 Q100.2,418.4 93.1,409.9Z"/><path d="M103.8,398.8 Q98.5,392.4 99.1,384.1 Q99.7,375.8 100.9,368.7 Q102.0,361.5 103.6,352.7 Q105.1,343.8 112.6,335.7 Q120.1,327.5 130.5,326.9 Q140.9,326.4 147.5,331.7 Q154.1,337.0 158.9,341.6 Q163.7,346.3 169.0,351.7 Q174.4,357.1 174.8,365.7 Q175.2,374.4 168.6,382.1 Q162.1,389.7 153.6,394.1 Q145.2,398.5 136.5,401.8 Q127.8,405.2 118.4,405.1 Q109.0,405.1 103.8,398.8Z"/><path d="M353.0,367.0 Q345.4,362.9 340.4,357.6 Q335.3,352.2 331.0,346.5 Q326.6,340.9 324.3,333.7 Q322.0,326.4 324.9,319.7 Q327.8,312.9 334.6,309.4 Q341.3,305.8 348.9,304.9 Q356.5,304.0 364.3,305.4 Q372.2,306.8 378.7,311.7 Q385.1,316.6 387.7,323.6 Q390.4,330.5 390.2,337.1 Q390.0,343.8 388.6,350.5 Q387.1,357.1 382.2,363.0 Q377.4,368.9 369.0,370.0 Q360.6,371.1 353.0,367.0Z"/><path d="M354.4,358.9 Q348.8,355.9 345.1,351.9 Q341.3,347.9 338.1,343.7 Q334.8,339.5 333.1,334.2 Q331.4,328.9 333.6,323.8 Q335.8,318.8 340.8,316.2 Q345.7,313.6 351.4,312.9 Q357.0,312.2 362.8,313.3 Q368.6,314.3 373.4,318.0 Q378.2,321.6 380.1,326.7 Q382.0,331.9 381.9,336.8 Q381.8,341.7 380.7,346.6 Q379.6,351.6 376.0,355.9 Q372.4,360.3 366.2,361.1 Q360.0,361.9 354.4,358.9Z"/><path d="M355.8,350.8 Q352.2,348.8 349.8,346.2 Q347.3,343.6 345.2,340.9 Q343.1,338.2 342.0,334.7 Q340.9,331.3 342.3,328.0 Q343.7,324.8 347.0,323.1 Q350.2,321.4 353.8,320.9 Q357.5,320.5 361.2,321.2 Q365.0,321.8 368.1,324.2 Q371.2,326.6 372.5,329.9 Q373.7,333.2 373.7,336.4 Q373.6,339.6 372.9,342.8 Q372.2,346.0 369.8,348.8 Q367.5,351.7 363.5,352.2 Q359.4,352.7 355.8,350.8Z"/><path d="M357.2,342.6 Q355.5,341.7 354.4,340.5 Q353.3,339.3 352.4,338.1 Q351.4,336.9 350.9,335.3 Q350.4,333.7 351.0,332.2 Q351.7,330.7 353.2,329.9 Q354.6,329.1 356.3,328.9 Q358.0,328.7 359.7,329.1 Q361.4,329.4 362.9,330.4 Q364.3,331.5 364.9,333.0 Q365.4,334.6 365.4,336.0 Q365.4,337.5 365.0,339.0 Q364.7,340.4 363.6,341.7 Q362.6,343.0 360.7,343.3 Q358.9,343.5 357.2,342.6Z"/><path d="M612.1,390.4 Q604.5,395.5 597.2,398.8 Q590.0,402.1 581.3,406.1 Q572.6,410.1 562.2,408.7 Q551.7,407.2 547.3,397.7 Q542.9,388.3 545.8,378.8 Q548.7,369.3 551.1,362.3 Q553.4,355.4 555.2,346.5 Q557.0,337.6 564.5,330.4 Q571.9,323.3 581.9,324.7 Q592.0,326.1 598.7,332.4 Q605.5,338.8 611.0,344.9 Q616.5,351.1 620.6,359.1 Q624.8,367.2 622.3,376.2 Q619.8,385.3 612.1,390.4Z"/><path d="M604.4,384.7 Q598.7,388.5 593.3,390.9 Q588.0,393.3 581.5,396.3 Q575.1,399.3 567.4,398.2 Q559.7,397.1 556.4,390.1 Q553.1,383.1 555.3,376.1 Q557.4,369.1 559.2,363.9 Q560.9,358.8 562.3,352.2 Q563.6,345.6 569.1,340.3 Q574.6,335.0 582.0,336.1 Q589.4,337.1 594.5,341.8 Q599.5,346.5 603.5,351.0 Q607.6,355.6 610.7,361.5 Q613.7,367.5 611.9,374.2 Q610.0,380.9 604.4,384.7Z"/><path d="M596.6,379.0 Q592.9,381.4 589.4,383.0 Q585.9,384.6 581.8,386.5 Q577.6,388.4 572.6,387.7 Q567.6,387.0 565.5,382.5 Q563.4,377.9 564.8,373.4 Q566.2,368.8 567.3,365.5 Q568.4,362.1 569.3,357.9 Q570.1,353.6 573.7,350.2 Q577.3,346.7 582.1,347.4 Q586.9,348.1 590.2,351.1 Q593.4,354.2 596.0,357.1 Q598.7,360.1 600.7,363.9 Q602.7,367.8 601.5,372.2 Q600.3,376.5 596.6,379.0Z"/><path d="M588.8,373.2 Q587.1,374.4 585.5,375.1 Q583.9,375.8 582.0,376.7 Q580.1,377.6 577.8,377.2 Q575.5,376.9 574.6,374.8 Q573.6,372.8 574.2,370.7 Q574.9,368.6 575.4,367.0 Q575.9,365.5 576.3,363.6 Q576.7,361.6 578.3,360.0 Q580.0,358.5 582.2,358.8 Q584.4,359.1 585.9,360.5 Q587.4,361.9 588.6,363.2 Q589.8,364.6 590.7,366.3 Q591.6,368.1 591.1,370.1 Q590.5,372.1 588.8,373.2Z"/><path d="M739.5,411.3 Q731.3,417.7 721.4,414.2 Q711.4,410.7 704.5,404.0 Q697.6,397.2 690.9,391.1 Q684.2,384.9 679.1,375.5 Q674.1,366.1 676.7,355.9 Q679.2,345.7 686.7,340.2 Q694.2,334.8 701.1,330.6 Q708.0,326.5 716.8,322.2 Q725.5,318.0 735.7,321.2 Q745.9,324.5 749.9,335.5 Q754.0,346.5 752.4,356.4 Q750.9,366.3 750.7,374.8 Q750.5,383.2 749.1,394.0 Q747.7,404.8 739.5,411.3Z"/><path d="M734.0,399.6 Q727.9,404.3 720.5,401.7 Q713.1,399.2 708.1,394.2 Q703.0,389.1 698.0,384.6 Q693.0,380.1 689.3,373.1 Q685.5,366.1 687.5,358.6 Q689.4,351.0 694.9,347.0 Q700.4,343.0 705.5,339.9 Q710.7,336.8 717.1,333.7 Q723.6,330.5 731.1,332.9 Q738.7,335.3 741.7,343.5 Q744.7,351.6 743.5,359.0 Q742.4,366.3 742.2,372.5 Q742.1,378.8 741.0,386.8 Q740.0,394.8 734.0,399.6Z"/><path d="M728.4,387.8 Q724.5,390.9 719.7,389.3 Q714.9,387.6 711.6,384.3 Q708.3,381.1 705.1,378.1 Q701.9,375.2 699.4,370.7 Q697.0,366.2 698.2,361.3 Q699.5,356.4 703.1,353.8 Q706.7,351.1 710.0,349.1 Q713.3,347.1 717.5,345.1 Q721.7,343.1 726.6,344.6 Q731.5,346.2 733.4,351.5 Q735.4,356.8 734.6,361.5 Q733.9,366.3 733.8,370.3 Q733.7,374.4 733.0,379.6 Q732.3,384.8 728.4,387.8Z"/><path d="M722.9,376.1 Q721.1,377.5 718.9,376.8 Q716.7,376.0 715.2,374.5 Q713.7,373.0 712.2,371.7 Q710.7,370.3 709.6,368.3 Q708.5,366.2 709.0,363.9 Q709.6,361.7 711.3,360.5 Q712.9,359.3 714.4,358.4 Q715.9,357.5 717.9,356.5 Q719.8,355.6 722.0,356.3 Q724.3,357.0 725.2,359.5 Q726.0,361.9 725.7,364.1 Q725.4,366.2 725.3,368.1 Q725.3,370.0 725.0,372.3 Q724.7,374.7 722.9,376.1Z"/><path d="M974.6,354.1 Q970.3,363.1 966.1,370.8 Q961.9,378.5 956.5,387.3 Q951.0,396.1 943.4,401.5 Q935.7,406.9 930.0,403.2 Q924.2,399.5 923.1,390.3 Q922.0,381.0 922.9,372.1 Q923.9,363.2 925.6,354.3 Q927.3,345.4 931.5,336.1 Q935.7,326.8 942.1,320.4 Q948.6,314.0 955.3,311.6 Q962.1,309.2 968.2,310.4 Q974.3,311.7 977.9,318.2 Q981.4,324.6 980.1,334.8 Q978.8,345.1 974.6,354.1Z"/><path d="M968.1,354.2 Q965.0,360.9 961.9,366.6 Q958.8,372.3 954.7,378.8 Q950.7,385.3 945.0,389.3 Q939.4,393.3 935.1,390.6 Q930.9,387.8 930.1,381.0 Q929.2,374.2 929.9,367.6 Q930.6,361.0 931.9,354.4 Q933.1,347.8 936.2,340.9 Q939.3,334.1 944.1,329.3 Q948.9,324.6 953.9,322.8 Q958.9,321.0 963.4,321.9 Q967.9,322.9 970.6,327.6 Q973.2,332.4 972.2,340.0 Q971.3,347.6 968.1,354.2Z"/><path d="M961.7,354.4 Q959.6,358.7 957.6,362.4 Q955.6,366.1 953.0,370.3 Q950.4,374.5 946.7,377.1 Q943.0,379.7 940.3,377.9 Q937.5,376.2 937.0,371.7 Q936.5,367.3 936.9,363.0 Q937.4,358.8 938.2,354.5 Q939.0,350.2 941.0,345.7 Q943.0,341.3 946.1,338.2 Q949.2,335.1 952.5,334.0 Q955.7,332.8 958.6,333.4 Q961.6,334.0 963.3,337.1 Q965.0,340.2 964.4,345.1 Q963.7,350.1 961.7,354.4Z"/><path d="M955.3,354.5 Q954.3,356.5 953.4,358.2 Q952.5,359.9 951.3,361.8 Q950.1,363.8 948.4,365.0 Q946.7,366.1 945.4,365.3 Q944.2,364.5 943.9,362.5 Q943.7,360.5 943.9,358.5 Q944.1,356.5 944.5,354.6 Q944.8,352.6 945.8,350.6 Q946.7,348.5 948.1,347.1 Q949.5,345.7 951.0,345.2 Q952.5,344.7 953.8,344.9 Q955.2,345.2 956.0,346.6 Q956.8,348.0 956.5,350.3 Q956.2,352.5 955.3,354.5Z"/><path d="M1103.1,344.1 Q1103.0,350.9 1099.5,356.3 Q1095.9,361.7 1091.6,364.5 Q1087.3,367.4 1083.2,369.1 Q1079.0,370.9 1074.6,370.6 Q1070.2,370.4 1066.8,367.0 Q1063.4,363.7 1061.7,358.6 Q1059.9,353.4 1059.5,347.3 Q1059.1,341.3 1061.0,334.9 Q1062.9,328.6 1067.4,324.8 Q1071.8,321.1 1076.5,321.5 Q1081.2,321.9 1084.9,323.5 Q1088.5,325.2 1092.4,326.9 Q1096.3,328.6 1099.8,332.9 Q1103.2,337.3 1103.1,344.1Z"/><path d="M1266.5,351.2 Q1265.5,366.3 1258.2,378.4 Q1250.9,390.5 1242.8,397.8 Q1234.8,405.2 1226.5,410.5 Q1218.3,415.8 1210.0,414.5 Q1201.6,413.3 1196.9,404.2 Q1192.1,395.1 1190.1,384.1 Q1188.2,373.0 1186.7,360.5 Q1185.2,347.9 1188.1,332.4 Q1191.0,316.9 1200.2,307.5 Q1209.5,298.2 1218.7,300.6 Q1227.9,303.0 1234.0,308.0 Q1240.0,313.0 1247.1,315.8 Q1254.2,318.6 1260.8,327.4 Q1267.4,336.1 1266.5,351.2Z"/><path d="M1255.2,352.6 Q1254.6,363.8 1249.1,372.7 Q1243.7,381.7 1237.8,387.1 Q1231.8,392.6 1225.7,396.5 Q1219.6,400.4 1213.4,399.5 Q1207.3,398.6 1203.7,391.8 Q1200.2,385.1 1198.7,376.9 Q1197.3,368.8 1196.2,359.5 Q1195.1,350.2 1197.3,338.7 Q1199.4,327.2 1206.2,320.3 Q1213.1,313.4 1219.9,315.2 Q1226.7,317.0 1231.2,320.7 Q1235.7,324.3 1240.9,326.4 Q1246.2,328.5 1251.1,335.0 Q1255.9,341.4 1255.2,352.6Z"/><path d="M1244.0,354.0 Q1243.6,361.3 1240.1,367.1 Q1236.5,372.9 1232.7,376.4 Q1228.8,379.9 1224.9,382.5 Q1220.9,385.0 1216.9,384.4 Q1212.9,383.8 1210.6,379.4 Q1208.3,375.1 1207.4,369.8 Q1206.4,364.5 1205.7,358.5 Q1205.0,352.4 1206.4,345.0 Q1207.8,337.5 1212.2,333.1 Q1216.7,328.6 1221.1,329.7 Q1225.5,330.9 1228.4,333.3 Q1231.3,335.7 1234.7,337.0 Q1238.2,338.4 1241.3,342.6 Q1244.5,346.8 1244.0,354.0Z"/><path d="M1232.8,355.4 Q1232.6,358.8 1231.0,361.4 Q1229.4,364.1 1227.6,365.7 Q1225.9,367.3 1224.0,368.5 Q1222.2,369.6 1220.4,369.4 Q1218.6,369.1 1217.5,367.1 Q1216.4,365.1 1216.0,362.7 Q1215.6,360.2 1215.3,357.5 Q1214.9,354.7 1215.6,351.3 Q1216.2,347.9 1218.2,345.8 Q1220.3,343.8 1222.3,344.3 Q1224.3,344.8 1225.7,345.9 Q1227.0,347.0 1228.6,347.7 Q1230.1,348.3 1231.6,350.2 Q1233.0,352.1 1232.8,355.4Z"/><path d="M1276.8,386.7 Q1270.9,375.8 1269.9,363.9 Q1268.9,352.0 1271.2,343.5 Q1273.5,334.9 1276.7,328.0 Q1279.8,321.0 1285.3,316.9 Q1290.7,312.8 1298.1,315.8 Q1305.5,318.7 1312.0,327.3 Q1318.6,335.8 1323.5,346.0 Q1328.4,356.1 1331.8,367.6 Q1335.3,379.0 1334.7,389.9 Q1334.2,400.7 1329.0,405.8 Q1323.8,411.0 1317.4,410.8 Q1310.9,410.7 1304.4,409.2 Q1297.8,407.7 1290.3,402.7 Q1282.7,397.7 1276.8,386.7Z"/><path d="M1283.2,381.1 Q1278.8,373.0 1278.1,364.3 Q1277.4,355.5 1279.1,349.1 Q1280.7,342.8 1283.1,337.7 Q1285.5,332.6 1289.5,329.5 Q1293.5,326.5 1299.0,328.7 Q1304.5,330.8 1309.3,337.2 Q1314.1,343.5 1317.8,351.0 Q1321.4,358.5 1323.9,367.0 Q1326.5,375.5 1326.1,383.5 Q1325.7,391.5 1321.9,395.3 Q1318.0,399.1 1313.2,399.0 Q1308.4,398.9 1303.6,397.8 Q1298.8,396.7 1293.2,393.0 Q1287.6,389.2 1283.2,381.1Z"/><path d="M1289.6,375.6 Q1286.8,370.3 1286.3,364.6 Q1285.9,358.9 1286.9,354.8 Q1288.0,350.7 1289.6,347.4 Q1291.1,344.1 1293.7,342.1 Q1296.3,340.1 1299.9,341.5 Q1303.4,342.9 1306.6,347.0 Q1309.7,351.2 1312.0,356.0 Q1314.4,360.9 1316.1,366.4 Q1317.7,371.9 1317.4,377.1 Q1317.2,382.3 1314.7,384.8 Q1312.2,387.2 1309.1,387.2 Q1306.0,387.1 1302.9,386.4 Q1299.7,385.6 1296.1,383.2 Q1292.5,380.8 1289.6,375.6Z"/><path d="M1296.1,370.0 Q1294.8,367.6 1294.5,365.0 Q1294.3,362.4 1294.8,360.5 Q1295.3,358.6 1296.0,357.1 Q1296.7,355.6 1297.9,354.7 Q1299.1,353.7 1300.7,354.4 Q1302.4,355.0 1303.8,356.9 Q1305.3,358.8 1306.3,361.0 Q1307.4,363.3 1308.2,365.8 Q1308.9,368.3 1308.8,370.7 Q1308.7,373.1 1307.6,374.2 Q1306.4,375.3 1305.0,375.3 Q1303.6,375.3 1302.1,375.0 Q1300.7,374.6 1299.0,373.5 Q1297.4,372.4 1296.1,370.0Z"/><path d="M1417.2,374.9 Q1408.5,366.6 1405.0,356.4 Q1401.5,346.2 1401.2,338.1 Q1401.0,330.1 1400.9,322.1 Q1400.8,314.2 1403.9,306.8 Q1407.0,299.5 1415.4,298.3 Q1423.9,297.2 1433.4,302.9 Q1443.0,308.7 1450.4,316.8 Q1457.9,324.8 1463.7,333.5 Q1469.6,342.3 1472.3,351.7 Q1474.9,361.1 1472.5,368.2 Q1470.1,375.4 1464.6,379.3 Q1459.1,383.2 1452.0,385.3 Q1444.9,387.4 1435.4,385.3 Q1426.0,383.3 1417.2,374.9Z"/><path d="M1549.4,363.7 Q1544.0,352.0 1542.1,340.3 Q1540.3,328.5 1540.0,316.7 Q1539.6,304.9 1543.0,293.8 Q1546.5,282.7 1555.6,279.4 Q1564.7,276.1 1574.7,282.6 Q1584.6,289.0 1591.8,297.9 Q1599.1,306.8 1606.0,315.7 Q1612.9,324.6 1618.4,337.0 Q1623.9,349.3 1623.0,361.9 Q1622.1,374.5 1615.2,381.3 Q1608.2,388.1 1599.8,390.0 Q1591.3,392.0 1582.2,390.8 Q1573.0,389.5 1564.0,382.5 Q1554.9,375.4 1549.4,363.7Z"/><path d="M1677.4,377.0 Q1671.7,381.1 1664.0,382.7 Q1656.3,384.2 1650.6,380.5 Q1644.9,376.8 1643.8,371.2 Q1642.7,365.6 1641.7,361.3 Q1640.7,357.0 1638.6,351.5 Q1636.5,346.0 1639.3,339.3 Q1642.1,332.7 1650.1,330.3 Q1658.1,327.9 1665.1,330.2 Q1672.0,332.5 1676.9,335.0 Q1681.8,337.5 1687.0,340.2 Q1692.2,342.9 1694.7,348.0 Q1697.2,353.0 1694.7,358.6 Q1692.1,364.1 1687.6,368.5 Q1683.0,372.9 1677.4,377.0Z"/><path d="M1828.6,377.5 Q1822.9,388.2 1815.5,397.4 Q1808.0,406.6 1798.4,413.0 Q1788.7,419.4 1779.4,418.9 Q1770.0,418.4 1764.5,411.7 Q1759.0,405.1 1756.0,397.1 Q1753.0,389.0 1751.2,379.4 Q1749.3,369.7 1752.6,357.5 Q1755.8,345.3 1765.1,336.3 Q1774.4,327.3 1784.4,325.1 Q1794.4,322.8 1802.7,323.5 Q1810.9,324.2 1818.8,326.6 Q1826.7,329.0 1831.8,336.5 Q1836.9,344.1 1835.6,355.5 Q1834.3,366.9 1828.6,377.5Z"/><path d="M1819.0,375.1 Q1814.8,383.0 1809.3,389.8 Q1803.7,396.6 1796.6,401.4 Q1789.5,406.1 1782.6,405.7 Q1775.6,405.3 1771.6,400.4 Q1767.5,395.5 1765.3,389.6 Q1763.1,383.6 1761.7,376.5 Q1760.4,369.3 1762.7,360.3 Q1765.1,351.3 1772.0,344.6 Q1778.9,337.9 1786.3,336.3 Q1793.7,334.6 1799.8,335.2 Q1805.9,335.7 1811.8,337.4 Q1817.6,339.2 1821.4,344.8 Q1825.2,350.4 1824.2,358.8 Q1823.3,367.2 1819.0,375.1Z"/><path d="M1809.5,372.7 Q1806.7,377.8 1803.1,382.3 Q1799.5,386.7 1794.9,389.8 Q1790.3,392.8 1785.8,392.6 Q1781.3,392.3 1778.7,389.1 Q1776.0,385.9 1774.6,382.1 Q1773.2,378.2 1772.3,373.6 Q1771.4,368.9 1772.9,363.1 Q1774.5,357.2 1779.0,352.9 Q1783.4,348.6 1788.2,347.5 Q1793.0,346.5 1797.0,346.8 Q1800.9,347.1 1804.7,348.3 Q1808.5,349.4 1811.0,353.0 Q1813.4,356.7 1812.8,362.1 Q1812.2,367.6 1809.5,372.7Z"/><path d="M1799.9,370.3 Q1798.6,372.7 1797.0,374.7 Q1795.3,376.7 1793.2,378.1 Q1791.1,379.5 1789.0,379.4 Q1787.0,379.3 1785.8,377.8 Q1784.5,376.4 1783.9,374.6 Q1783.2,372.8 1782.8,370.7 Q1782.4,368.6 1783.1,365.9 Q1783.8,363.2 1785.9,361.2 Q1787.9,359.3 1790.1,358.8 Q1792.3,358.3 1794.1,358.4 Q1796.0,358.6 1797.7,359.1 Q1799.4,359.6 1800.6,361.3 Q1801.7,362.9 1801.4,365.5 Q1801.1,368.0 1799.9,370.3Z"/><path d="M1957.4,386.7 Q1955.1,393.4 1949.1,397.2 Q1943.1,401.0 1934.9,398.5 Q1926.7,396.0 1920.6,389.5 Q1914.6,383.0 1910.4,377.0 Q1906.3,370.9 1901.6,364.3 Q1897.0,357.7 1894.5,349.1 Q1892.1,340.5 1895.9,334.1 Q1899.7,327.8 1907.3,327.0 Q1914.9,326.3 1922.2,328.7 Q1929.5,331.1 1936.2,334.9 Q1942.9,338.6 1948.5,344.7 Q1954.1,350.7 1956.9,358.1 Q1959.6,365.6 1959.6,372.8 Q1959.6,380.0 1957.4,386.7Z"/><path d="M1999.0,394.5 Q1990.9,389.7 1987.2,380.5 Q1983.6,371.4 1984.9,363.2 Q1986.2,355.1 1989.2,348.7 Q1992.1,342.3 1997.1,337.5 Q2002.1,332.8 2009.5,332.9 Q2017.0,333.1 2023.8,337.7 Q2030.7,342.3 2036.6,347.6 Q2042.6,352.9 2049.0,360.1 Q2055.4,367.3 2057.8,377.0 Q2060.1,386.7 2054.9,392.9 Q2049.7,399.1 2041.8,399.4 Q2034.0,399.6 2027.8,399.3 Q2021.6,399.0 2014.3,399.2 Q2007.1,399.3 1999.0,394.5Z"/><path d="M2277.6,362.2 Q2270.9,361.7 2264.8,357.0 Q2258.8,352.3 2259.3,344.6 Q2259.8,336.8 2264.7,331.2 Q2269.6,325.6 2274.1,321.1 Q2278.6,316.7 2284.3,312.3 Q2290.0,308.0 2297.2,308.3 Q2304.4,308.6 2308.8,314.0 Q2313.2,319.5 2315.4,325.1 Q2317.6,330.7 2320.5,336.7 Q2323.5,342.7 2323.3,350.6 Q2323.1,358.5 2316.6,363.3 Q2310.1,368.1 2302.6,367.0 Q2295.1,365.8 2289.7,364.3 Q2284.3,362.8 2277.6,362.2Z"/><path d="M2411.5,384.5 Q2406.3,383.6 2403.8,378.5 Q2401.3,373.5 2400.7,367.5 Q2400.2,361.5 2400.3,355.0 Q2400.5,348.6 2402.6,341.0 Q2404.6,333.3 2409.6,326.8 Q2414.5,320.3 2420.3,318.1 Q2426.2,315.9 2430.8,317.5 Q2435.4,319.1 2438.6,322.8 Q2441.7,326.4 2443.3,331.9 Q2444.9,337.4 2444.0,344.4 Q2443.2,351.4 2440.2,358.5 Q2437.2,365.5 2432.6,371.7 Q2428.0,377.9 2422.3,381.7 Q2416.6,385.4 2411.5,384.5Z"/><path d="M2414.1,375.5 Q2410.3,374.8 2408.4,371.1 Q2406.5,367.4 2406.1,362.9 Q2405.7,358.5 2405.8,353.7 Q2406.0,349.0 2407.5,343.3 Q2409.0,337.7 2412.7,332.9 Q2416.3,328.0 2420.6,326.4 Q2424.9,324.8 2428.3,326.0 Q2431.8,327.2 2434.1,329.8 Q2436.5,332.5 2437.6,336.6 Q2438.8,340.7 2438.2,345.9 Q2437.5,351.1 2435.3,356.3 Q2433.1,361.5 2429.7,366.1 Q2426.3,370.6 2422.1,373.4 Q2417.9,376.2 2414.1,375.5Z"/><path d="M2416.7,366.6 Q2414.2,366.1 2413.0,363.7 Q2411.8,361.3 2411.5,358.4 Q2411.2,355.5 2411.3,352.4 Q2411.4,349.3 2412.4,345.7 Q2413.4,342.0 2415.8,338.9 Q2418.1,335.7 2420.9,334.7 Q2423.7,333.6 2425.9,334.4 Q2428.1,335.2 2429.7,336.9 Q2431.2,338.7 2431.9,341.3 Q2432.7,344.0 2432.3,347.3 Q2431.9,350.7 2430.4,354.1 Q2429.0,357.5 2426.8,360.4 Q2424.6,363.4 2421.9,365.2 Q2419.1,367.0 2416.7,366.6Z"/><path d="M2518.8,386.0 Q2510.5,378.1 2506.4,369.9 Q2502.2,361.7 2498.0,354.1 Q2493.9,346.4 2492.0,337.2 Q2490.2,328.1 2495.4,321.6 Q2500.7,315.1 2509.8,314.3 Q2518.9,313.6 2527.7,314.9 Q2536.5,316.3 2546.0,319.4 Q2555.4,322.5 2563.0,330.2 Q2570.6,337.9 2571.3,347.1 Q2572.0,356.3 2568.8,363.0 Q2565.5,369.6 2562.6,376.2 Q2559.8,382.8 2553.8,389.1 Q2547.8,395.4 2537.4,394.6 Q2527.0,393.9 2518.8,386.0Z"/><path d="M2522.3,377.0 Q2516.2,371.1 2513.1,365.1 Q2510.0,359.0 2506.9,353.3 Q2503.8,347.7 2502.5,340.9 Q2501.1,334.1 2505.0,329.3 Q2508.9,324.5 2515.6,323.9 Q2522.4,323.4 2528.9,324.4 Q2535.4,325.4 2542.4,327.7 Q2549.4,330.0 2555.0,335.7 Q2560.6,341.4 2561.2,348.2 Q2561.7,355.0 2559.3,359.9 Q2556.8,364.9 2554.7,369.7 Q2552.6,374.6 2548.2,379.3 Q2543.7,383.9 2536.0,383.4 Q2528.4,382.8 2522.3,377.0Z"/><path d="M2588.1,377.2 Q2577.8,371.5 2573.8,359.8 Q2569.8,348.1 2577.7,338.1 Q2585.6,328.1 2596.1,324.5 Q2606.6,320.8 2614.4,316.6 Q2622.3,312.5 2632.9,307.9 Q2643.6,303.3 2654.9,307.3 Q2666.2,311.4 2669.9,322.6 Q2673.7,333.8 2672.5,344.1 Q2671.3,354.5 2670.1,364.5 Q2668.9,374.6 2663.1,384.3 Q2657.3,394.1 2646.1,396.5 Q2634.8,398.9 2625.2,394.6 Q2615.6,390.3 2607.0,386.6 Q2598.5,382.9 2588.1,377.2Z"/><path d="M2598.5,370.6 Q2590.8,366.4 2587.9,357.7 Q2584.9,349.0 2590.8,341.6 Q2596.6,334.2 2604.4,331.6 Q2612.1,328.9 2617.9,325.8 Q2623.8,322.7 2631.7,319.3 Q2639.5,315.9 2647.9,318.9 Q2656.3,321.9 2659.0,330.2 Q2661.8,338.5 2660.9,346.1 Q2660.0,353.8 2659.1,361.2 Q2658.2,368.7 2653.9,375.9 Q2649.7,383.1 2641.4,384.9 Q2633.1,386.6 2625.9,383.5 Q2618.8,380.3 2612.5,377.6 Q2606.2,374.8 2598.5,370.6Z"/><path d="M2608.9,364.0 Q2603.9,361.3 2602.0,355.6 Q2600.1,350.0 2603.8,345.2 Q2607.6,340.4 2612.7,338.7 Q2617.7,336.9 2621.5,334.9 Q2625.2,332.9 2630.4,330.7 Q2635.5,328.5 2640.9,330.4 Q2646.3,332.4 2648.1,337.8 Q2649.9,343.1 2649.3,348.1 Q2648.8,353.1 2648.2,357.9 Q2647.6,362.7 2644.8,367.4 Q2642.0,372.1 2636.7,373.2 Q2631.3,374.4 2626.6,372.3 Q2622.0,370.3 2617.9,368.5 Q2613.8,366.7 2608.9,364.0Z"/><path d="M2619.2,357.4 Q2616.9,356.1 2616.1,353.5 Q2615.2,351.0 2616.9,348.8 Q2618.7,346.6 2621.0,345.8 Q2623.3,345.0 2625.0,344.0 Q2626.7,343.1 2629.1,342.1 Q2631.4,341.1 2633.9,342.0 Q2636.4,342.9 2637.2,345.3 Q2638.0,347.8 2637.8,350.1 Q2637.5,352.4 2637.2,354.6 Q2637.0,356.8 2635.7,358.9 Q2634.4,361.1 2632.0,361.6 Q2629.5,362.1 2627.4,361.2 Q2625.2,360.3 2623.4,359.4 Q2621.5,358.6 2619.2,357.4Z"/><path d="M2761.0,388.0 Q2750.4,386.4 2738.9,381.1 Q2727.4,375.8 2719.4,366.7 Q2711.4,357.5 2709.8,347.5 Q2708.2,337.5 2712.8,329.8 Q2717.4,322.0 2726.9,318.4 Q2736.3,314.8 2747.5,315.9 Q2758.7,317.0 2769.1,320.6 Q2779.5,324.3 2790.1,329.4 Q2800.6,334.4 2810.6,342.8 Q2820.6,351.2 2824.0,361.8 Q2827.3,372.5 2820.7,379.8 Q2814.1,387.2 2803.1,388.9 Q2792.1,390.7 2781.9,390.1 Q2771.7,389.6 2761.0,388.0Z"/><path d="M2762.2,379.2 Q2754.3,378.0 2745.8,374.2 Q2737.3,370.3 2731.4,363.5 Q2725.4,356.7 2724.2,349.3 Q2723.0,341.9 2726.5,336.1 Q2729.9,330.4 2736.9,327.7 Q2743.9,325.1 2752.2,325.9 Q2760.5,326.7 2768.2,329.4 Q2775.9,332.1 2783.6,335.9 Q2791.4,339.6 2798.8,345.8 Q2806.3,352.0 2808.7,359.9 Q2811.2,367.8 2806.3,373.2 Q2801.5,378.7 2793.3,379.9 Q2785.2,381.2 2777.6,380.8 Q2770.1,380.4 2762.2,379.2Z"/><path d="M2763.3,370.5 Q2758.2,369.7 2752.7,367.2 Q2747.2,364.7 2743.3,360.3 Q2739.5,355.8 2738.7,351.1 Q2737.9,346.3 2740.2,342.5 Q2742.4,338.8 2746.9,337.1 Q2751.4,335.4 2756.8,335.9 Q2762.2,336.4 2767.2,338.2 Q2772.2,339.9 2777.2,342.4 Q2782.3,344.8 2787.1,348.8 Q2791.9,352.8 2793.5,357.9 Q2795.1,363.1 2792.0,366.6 Q2788.8,370.1 2783.5,370.9 Q2778.2,371.8 2773.3,371.5 Q2768.4,371.2 2763.3,370.5Z"/><path d="M2764.5,361.7 Q2762.1,361.4 2759.6,360.2 Q2757.1,359.1 2755.3,357.1 Q2753.5,355.0 2753.2,352.8 Q2752.8,350.6 2753.8,348.9 Q2754.9,347.2 2756.9,346.4 Q2759.0,345.6 2761.5,345.9 Q2763.9,346.1 2766.2,346.9 Q2768.5,347.7 2770.8,348.8 Q2773.1,350.0 2775.4,351.8 Q2777.6,353.6 2778.3,356.0 Q2779.0,358.3 2777.6,360.0 Q2776.1,361.6 2773.7,362.0 Q2771.3,362.3 2769.0,362.2 Q2766.8,362.1 2764.5,361.7Z"/><path d="M-48.4,477.4 Q-54.8,475.5 -59.2,471.9 Q-63.5,468.3 -67.3,464.8 Q-71.1,461.3 -73.9,456.7 Q-76.6,452.1 -75.2,447.4 Q-73.7,442.7 -69.1,440.2 Q-64.4,437.7 -59.4,436.4 Q-54.4,435.0 -48.6,434.3 Q-42.8,433.6 -36.7,435.9 Q-30.5,438.1 -27.8,443.1 Q-25.1,448.1 -25.8,452.7 Q-26.4,457.2 -27.1,461.3 Q-27.7,465.3 -29.5,469.9 Q-31.2,474.5 -36.6,476.9 Q-42.1,479.3 -48.4,477.4Z"/><path d="M-48.5,471.6 Q-53.2,470.2 -56.5,467.5 Q-59.7,464.8 -62.5,462.3 Q-65.3,459.7 -67.4,456.2 Q-69.4,452.8 -68.3,449.4 Q-67.3,445.9 -63.8,444.0 Q-60.4,442.2 -56.7,441.2 Q-53.0,440.2 -48.7,439.7 Q-44.4,439.2 -39.8,440.8 Q-35.3,442.5 -33.3,446.2 Q-31.3,449.9 -31.8,453.2 Q-32.3,456.6 -32.7,459.6 Q-33.2,462.6 -34.5,466.0 Q-35.8,469.4 -39.8,471.2 Q-43.8,473.0 -48.5,471.6Z"/><path d="M-48.7,465.7 Q-51.7,464.8 -53.8,463.1 Q-55.9,461.4 -57.7,459.7 Q-59.6,458.0 -60.9,455.8 Q-62.2,453.6 -61.5,451.3 Q-60.8,449.1 -58.6,447.9 Q-56.3,446.7 -53.9,446.0 Q-51.6,445.4 -48.8,445.0 Q-46.0,444.7 -43.0,445.8 Q-40.1,446.9 -38.8,449.3 Q-37.5,451.6 -37.8,453.8 Q-38.1,456.0 -38.4,458.0 Q-38.7,459.9 -39.6,462.1 Q-40.4,464.3 -43.0,465.5 Q-45.6,466.6 -48.7,465.7Z"/><path d="M-48.8,459.9 Q-50.2,459.5 -51.1,458.7 Q-52.1,457.9 -52.9,457.1 Q-53.8,456.3 -54.4,455.3 Q-55.0,454.3 -54.7,453.3 Q-54.4,452.2 -53.3,451.7 Q-52.3,451.1 -51.2,450.8 Q-50.1,450.6 -48.8,450.4 Q-47.5,450.2 -46.2,450.7 Q-44.8,451.2 -44.3,452.3 Q-43.7,453.4 -43.8,454.4 Q-43.9,455.4 -44.1,456.3 Q-44.2,457.2 -44.6,458.2 Q-45.0,459.2 -46.2,459.8 Q-47.4,460.3 -48.8,459.9Z"/><path d="M201.7,440.8 Q204.1,445.6 200.1,449.4 Q196.1,453.2 189.1,454.7 Q182.1,456.3 175.4,457.1 Q168.6,458.0 160.6,458.2 Q152.6,458.4 144.2,456.0 Q135.9,453.6 131.9,449.0 Q127.9,444.3 128.5,440.0 Q129.0,435.6 131.2,431.8 Q133.3,428.1 137.8,424.9 Q142.3,421.7 150.0,420.8 Q157.8,419.8 165.8,421.6 Q173.8,423.3 180.5,426.0 Q187.2,428.8 193.3,432.4 Q199.3,436.0 201.7,440.8Z"/><path d="M191.8,440.7 Q193.6,444.2 190.6,447.0 Q187.7,449.8 182.5,451.0 Q177.3,452.1 172.3,452.7 Q167.3,453.3 161.4,453.5 Q155.4,453.7 149.3,451.9 Q143.1,450.1 140.1,446.7 Q137.2,443.3 137.6,440.0 Q138.0,436.8 139.6,434.0 Q141.2,431.2 144.5,428.9 Q147.8,426.5 153.6,425.8 Q159.3,425.1 165.2,426.4 Q171.1,427.7 176.1,429.7 Q181.1,431.7 185.6,434.4 Q190.0,437.1 191.8,440.7Z"/><path d="M181.9,440.5 Q183.0,442.8 181.1,444.6 Q179.2,446.4 175.8,447.2 Q172.5,447.9 169.2,448.3 Q166.0,448.7 162.2,448.8 Q158.3,449.0 154.3,447.8 Q150.3,446.6 148.4,444.4 Q146.4,442.2 146.7,440.1 Q147.0,438.0 148.0,436.2 Q149.0,434.4 151.2,432.9 Q153.4,431.3 157.1,430.9 Q160.8,430.4 164.6,431.2 Q168.5,432.1 171.7,433.4 Q174.9,434.7 177.8,436.5 Q180.7,438.2 181.9,440.5Z"/><path d="M172.0,440.3 Q172.5,441.4 171.6,442.2 Q170.7,443.1 169.2,443.4 Q167.7,443.7 166.2,443.9 Q164.7,444.1 162.9,444.2 Q161.2,444.2 159.3,443.7 Q157.5,443.1 156.6,442.1 Q155.7,441.1 155.9,440.1 Q156.0,439.2 156.4,438.4 Q156.9,437.5 157.9,436.8 Q158.9,436.1 160.6,435.9 Q162.3,435.7 164.1,436.1 Q165.8,436.5 167.3,437.1 Q168.8,437.7 170.1,438.5 Q171.4,439.3 172.0,440.3Z"/><path d="M339.7,472.0 Q340.4,477.5 337.8,482.6 Q335.3,487.7 330.2,491.1 Q325.2,494.5 318.7,495.2 Q312.2,495.9 306.2,493.4 Q300.2,490.8 296.5,486.3 Q292.8,481.7 291.0,476.9 Q289.1,472.1 288.0,466.9 Q286.9,461.7 288.3,456.0 Q289.6,450.2 294.9,446.5 Q300.2,442.8 307.0,443.2 Q313.9,443.6 319.4,446.7 Q324.9,449.8 329.0,453.5 Q333.1,457.3 336.1,461.9 Q339.1,466.5 339.7,472.0Z"/><path d="M332.8,471.3 Q333.3,475.4 331.4,479.2 Q329.5,482.9 325.8,485.5 Q322.0,488.0 317.2,488.5 Q312.4,489.0 308.0,487.2 Q303.5,485.3 300.8,481.9 Q298.1,478.5 296.7,475.0 Q295.3,471.4 294.5,467.6 Q293.7,463.7 294.7,459.5 Q295.7,455.2 299.6,452.5 Q303.5,449.7 308.6,450.0 Q313.7,450.3 317.8,452.6 Q321.8,454.9 324.8,457.7 Q327.9,460.5 330.1,463.9 Q332.3,467.3 332.8,471.3Z"/><path d="M325.9,470.7 Q326.2,473.3 325.0,475.8 Q323.7,478.2 321.3,479.8 Q318.9,481.5 315.8,481.8 Q312.6,482.2 309.8,480.9 Q306.9,479.7 305.1,477.5 Q303.4,475.3 302.5,473.0 Q301.6,470.7 301.0,468.2 Q300.5,465.7 301.2,463.0 Q301.8,460.2 304.3,458.4 Q306.9,456.7 310.2,456.9 Q313.5,457.1 316.1,458.5 Q318.7,460.0 320.7,461.8 Q322.7,463.6 324.1,465.8 Q325.6,468.0 325.9,470.7Z"/><path d="M318.9,470.0 Q319.1,471.2 318.5,472.3 Q318.0,473.5 316.8,474.2 Q315.7,475.0 314.3,475.1 Q312.9,475.3 311.6,474.7 Q310.2,474.2 309.4,473.1 Q308.6,472.1 308.2,471.1 Q307.8,470.0 307.6,468.9 Q307.3,467.7 307.6,466.5 Q307.9,465.2 309.1,464.4 Q310.2,463.6 311.7,463.7 Q313.2,463.8 314.5,464.4 Q315.7,465.1 316.6,465.9 Q317.5,466.8 318.1,467.8 Q318.8,468.8 318.9,470.0Z"/><path d="M460.7,482.2 Q451.6,496.0 438.6,503.5 Q425.7,511.1 414.7,515.0 Q403.7,518.9 392.4,521.7 Q381.0,524.4 373.3,519.4 Q365.6,514.4 367.2,502.2 Q368.8,490.0 374.3,478.3 Q379.8,466.7 384.8,454.6 Q389.8,442.4 399.8,428.4 Q409.9,414.3 423.6,408.6 Q437.3,402.9 444.8,409.6 Q452.3,416.3 454.9,424.6 Q457.6,432.8 462.5,439.1 Q467.4,445.3 468.7,456.9 Q469.9,468.4 460.7,482.2Z"/><path d="M449.8,478.4 Q443.0,488.6 433.4,494.1 Q423.9,499.7 415.7,502.6 Q407.6,505.5 399.2,507.6 Q390.8,509.6 385.1,505.9 Q379.4,502.2 380.6,493.2 Q381.7,484.1 385.8,475.5 Q389.9,466.9 393.6,457.9 Q397.3,448.9 404.7,438.5 Q412.2,428.1 422.3,423.9 Q432.4,419.7 438.0,424.7 Q443.5,429.6 445.5,435.7 Q447.5,441.8 451.1,446.4 Q454.7,451.1 455.6,459.6 Q456.6,468.2 449.8,478.4Z"/><path d="M535.3,485.1 Q532.5,480.5 533.0,475.1 Q533.5,469.7 535.5,464.5 Q537.5,459.2 541.3,453.6 Q545.1,448.0 552.1,443.6 Q559.1,439.2 567.0,439.0 Q574.8,438.7 579.9,442.2 Q584.9,445.6 587.3,450.1 Q589.8,454.5 591.0,459.3 Q592.2,464.0 590.9,469.7 Q589.6,475.4 584.6,480.7 Q579.6,486.0 572.5,489.2 Q565.3,492.4 557.8,493.2 Q550.4,493.9 544.3,491.8 Q538.1,489.7 535.3,485.1Z"/><path d="M542.3,480.4 Q540.2,476.9 540.6,473.0 Q541.0,469.0 542.5,465.1 Q544.0,461.2 546.8,457.1 Q549.6,452.9 554.8,449.7 Q559.9,446.4 565.8,446.2 Q571.6,446.1 575.3,448.6 Q579.0,451.2 580.8,454.4 Q582.6,457.7 583.5,461.3 Q584.4,464.8 583.5,469.0 Q582.5,473.2 578.8,477.1 Q575.1,481.1 569.8,483.4 Q564.5,485.8 559.0,486.3 Q553.5,486.9 549.0,485.3 Q544.4,483.8 542.3,480.4Z"/><path d="M683.9,475.5 Q675.1,475.3 667.2,472.3 Q659.3,469.3 652.7,464.8 Q646.1,460.4 641.0,454.5 Q635.9,448.5 635.9,441.5 Q636.0,434.6 642.7,430.1 Q649.5,425.5 658.4,424.8 Q667.3,424.0 675.2,424.3 Q683.1,424.7 691.7,425.7 Q700.4,426.7 708.7,430.8 Q716.9,435.0 720.0,441.7 Q723.1,448.5 720.5,454.7 Q717.8,460.9 712.5,465.5 Q707.3,470.0 700.0,472.9 Q692.7,475.7 683.9,475.5Z"/><path d="M682.7,468.5 Q676.2,468.4 670.4,466.1 Q664.5,463.9 659.6,460.6 Q654.8,457.3 651.0,452.9 Q647.2,448.5 647.2,443.3 Q647.2,438.2 652.3,434.9 Q657.3,431.5 663.8,430.9 Q670.4,430.4 676.3,430.6 Q682.1,430.9 688.5,431.6 Q694.9,432.3 701.0,435.4 Q707.2,438.5 709.4,443.5 Q711.7,448.5 709.8,453.1 Q707.8,457.7 703.9,461.1 Q700.0,464.4 694.6,466.5 Q689.2,468.6 682.7,468.5Z"/><path d="M768.2,477.9 Q759.9,479.9 753.0,475.0 Q746.0,470.2 743.2,462.6 Q740.4,455.0 738.1,448.5 Q735.8,442.0 733.3,433.6 Q730.7,425.2 733.5,415.8 Q736.3,406.4 744.9,403.0 Q753.5,399.5 761.5,402.3 Q769.5,405.0 775.5,408.2 Q781.6,411.4 788.0,415.3 Q794.3,419.2 798.0,426.8 Q801.6,434.3 799.8,442.8 Q797.9,451.2 793.2,457.9 Q788.5,464.6 782.5,470.3 Q776.4,476.0 768.2,477.9Z"/><path d="M767.4,467.7 Q761.3,469.2 756.2,465.6 Q751.0,461.9 748.9,456.3 Q746.9,450.7 745.2,445.9 Q743.5,441.1 741.6,434.9 Q739.7,428.7 741.7,421.7 Q743.8,414.8 750.2,412.2 Q756.5,409.7 762.4,411.7 Q768.3,413.8 772.8,416.1 Q777.4,418.5 782.1,421.4 Q786.7,424.3 789.5,429.9 Q792.2,435.4 790.8,441.7 Q789.4,447.9 785.9,452.9 Q782.5,457.8 778.0,462.0 Q773.5,466.2 767.4,467.7Z"/><path d="M766.6,457.5 Q762.7,458.4 759.3,456.1 Q756.0,453.7 754.6,450.1 Q753.3,446.5 752.2,443.3 Q751.1,440.2 749.9,436.2 Q748.6,432.2 750.0,427.7 Q751.3,423.1 755.4,421.5 Q759.6,419.8 763.4,421.2 Q767.2,422.5 770.2,424.0 Q773.1,425.6 776.1,427.4 Q779.2,429.3 780.9,432.9 Q782.7,436.5 781.8,440.6 Q780.9,444.7 778.6,447.9 Q776.4,451.1 773.5,453.8 Q770.6,456.5 766.6,457.5Z"/><path d="M923.6,466.2 Q916.0,472.6 908.7,476.7 Q901.3,480.9 892.7,486.1 Q884.0,491.2 870.7,490.6 Q857.3,490.0 846.3,479.7 Q835.2,469.4 832.6,456.9 Q830.1,444.4 831.1,434.8 Q832.1,425.2 833.5,415.9 Q834.9,406.5 841.3,399.1 Q847.7,391.7 859.2,391.2 Q870.6,390.6 882.3,395.4 Q894.1,400.2 905.1,407.6 Q916.1,415.0 924.2,426.1 Q932.4,437.1 931.8,448.5 Q931.2,459.9 923.6,466.2Z"/><path d="M1297.5,465.2 Q1295.6,471.0 1290.1,472.1 Q1284.6,473.3 1278.2,468.7 Q1271.7,464.0 1266.7,457.9 Q1261.7,451.7 1257.0,445.5 Q1252.3,439.2 1248.3,431.2 Q1244.3,423.1 1244.6,415.8 Q1244.9,408.4 1249.3,405.6 Q1253.8,402.8 1259.3,403.1 Q1264.7,403.4 1270.4,405.0 Q1276.1,406.5 1282.2,411.3 Q1288.4,416.1 1292.6,423.8 Q1296.9,431.5 1298.2,438.9 Q1299.5,446.2 1299.5,452.8 Q1299.5,459.4 1297.5,465.2Z"/><path d="M1397.2,457.9 Q1390.2,464.2 1380.0,465.5 Q1369.8,466.8 1363.1,462.2 Q1356.3,457.5 1353.8,451.9 Q1351.2,446.3 1348.6,441.3 Q1346.0,436.4 1345.3,429.9 Q1344.6,423.4 1349.9,417.0 Q1355.3,410.6 1364.1,407.4 Q1372.9,404.2 1381.7,403.4 Q1390.5,402.6 1398.9,403.8 Q1407.4,405.1 1412.6,409.9 Q1417.9,414.7 1417.3,421.3 Q1416.7,427.9 1413.6,433.7 Q1410.6,439.4 1407.4,445.5 Q1404.2,451.7 1397.2,457.9Z"/><path d="M1393.0,451.2 Q1387.8,455.9 1380.2,456.9 Q1372.7,457.8 1367.7,454.4 Q1362.7,450.9 1360.8,446.8 Q1359.0,442.6 1357.0,439.0 Q1355.1,435.3 1354.6,430.5 Q1354.1,425.7 1358.0,421.0 Q1361.9,416.2 1368.5,413.9 Q1375.0,411.5 1381.5,410.9 Q1388.0,410.3 1394.3,411.2 Q1400.5,412.1 1404.4,415.7 Q1408.3,419.2 1407.9,424.1 Q1407.4,429.0 1405.1,433.3 Q1402.9,437.5 1400.5,442.1 Q1398.1,446.6 1393.0,451.2Z"/><path d="M1497.3,481.0 Q1489.5,476.2 1484.2,469.3 Q1478.9,462.3 1476.1,454.7 Q1473.3,447.1 1472.3,438.7 Q1471.2,430.3 1474.3,422.2 Q1477.5,414.0 1486.1,410.8 Q1494.8,407.6 1504.5,411.5 Q1514.3,415.3 1520.9,421.7 Q1527.5,428.1 1533.1,433.9 Q1538.6,439.7 1544.1,447.2 Q1549.5,454.6 1550.6,463.8 Q1551.7,472.9 1546.2,479.4 Q1540.7,486.0 1531.9,487.7 Q1523.1,489.5 1514.1,487.6 Q1505.2,485.8 1497.3,481.0Z"/><path d="M1500.6,473.1 Q1494.8,469.6 1490.8,464.5 Q1486.9,459.3 1484.8,453.7 Q1482.7,448.0 1482.0,441.8 Q1481.2,435.6 1483.5,429.6 Q1485.8,423.5 1492.3,421.2 Q1498.7,418.8 1505.9,421.7 Q1513.1,424.5 1518.0,429.2 Q1522.9,434.0 1527.0,438.3 Q1531.1,442.6 1535.1,448.1 Q1539.2,453.6 1540.0,460.4 Q1540.8,467.1 1536.7,472.0 Q1532.6,476.8 1526.1,478.1 Q1519.6,479.4 1513.0,478.0 Q1506.3,476.7 1500.6,473.1Z"/><path d="M1503.8,465.2 Q1500.0,463.0 1497.5,459.6 Q1494.9,456.3 1493.6,452.6 Q1492.2,448.9 1491.7,444.9 Q1491.2,440.9 1492.7,437.0 Q1494.2,433.1 1498.4,431.5 Q1502.6,430.0 1507.2,431.9 Q1511.9,433.7 1515.1,436.8 Q1518.3,439.8 1520.9,442.6 Q1523.6,445.4 1526.2,449.0 Q1528.8,452.6 1529.3,457.0 Q1529.9,461.4 1527.2,464.5 Q1524.6,467.6 1520.4,468.5 Q1516.1,469.3 1511.8,468.4 Q1507.5,467.5 1503.8,465.2Z"/><path d="M1621.0,495.6 Q1616.0,496.2 1611.2,495.5 Q1606.4,494.8 1601.7,491.2 Q1597.1,487.7 1594.2,480.8 Q1591.3,473.9 1590.9,465.9 Q1590.5,457.9 1592.2,450.3 Q1593.8,442.7 1597.8,437.2 Q1601.7,431.7 1607.1,430.7 Q1612.4,429.8 1617.2,432.8 Q1621.9,435.8 1625.8,440.0 Q1629.7,444.2 1633.4,449.8 Q1637.2,455.4 1639.0,463.8 Q1640.7,472.1 1638.3,479.9 Q1635.9,487.7 1630.9,491.3 Q1625.9,495.0 1621.0,495.6Z"/><path d="M1619.3,487.6 Q1615.6,488.0 1612.0,487.5 Q1608.4,487.0 1605.0,484.3 Q1601.5,481.7 1599.4,476.6 Q1597.3,471.5 1597.0,465.6 Q1596.7,459.7 1597.9,454.0 Q1599.2,448.4 1602.1,444.3 Q1605.0,440.3 1609.0,439.5 Q1612.9,438.8 1616.4,441.1 Q1619.9,443.3 1622.8,446.4 Q1625.7,449.5 1628.5,453.7 Q1631.3,457.8 1632.6,464.0 Q1633.9,470.2 1632.1,475.9 Q1630.3,481.7 1626.6,484.4 Q1622.9,487.1 1619.3,487.6Z"/><path d="M1617.5,479.5 Q1615.1,479.8 1612.8,479.5 Q1610.5,479.1 1608.3,477.4 Q1606.0,475.7 1604.7,472.4 Q1603.3,469.1 1603.1,465.3 Q1602.9,461.4 1603.7,457.8 Q1604.5,454.1 1606.4,451.5 Q1608.3,448.8 1610.8,448.4 Q1613.4,447.9 1615.7,449.4 Q1618.0,450.8 1619.8,452.8 Q1621.7,454.8 1623.5,457.5 Q1625.3,460.2 1626.2,464.2 Q1627.0,468.2 1625.8,472.0 Q1624.7,475.7 1622.3,477.5 Q1619.9,479.2 1617.5,479.5Z"/><path d="M1857.8,475.6 Q1853.6,471.4 1851.4,466.2 Q1849.2,461.1 1849.3,455.8 Q1849.4,450.5 1851.9,446.2 Q1854.3,442.0 1858.1,439.1 Q1861.8,436.2 1866.5,434.2 Q1871.1,432.2 1876.9,432.2 Q1882.7,432.2 1887.6,436.1 Q1892.6,439.9 1893.9,445.8 Q1895.3,451.7 1893.9,456.7 Q1892.5,461.7 1890.7,465.9 Q1888.9,470.0 1886.1,474.2 Q1883.4,478.4 1878.4,480.6 Q1873.3,482.8 1867.7,481.3 Q1862.0,479.7 1857.8,475.6Z"/><path d="M1861.6,470.6 Q1858.5,467.5 1856.8,463.7 Q1855.2,459.9 1855.2,456.0 Q1855.3,452.0 1857.1,448.9 Q1859.0,445.7 1861.7,443.6 Q1864.5,441.5 1867.9,440.0 Q1871.3,438.5 1875.6,438.5 Q1879.9,438.5 1883.6,441.3 Q1887.3,444.2 1888.3,448.5 Q1889.3,452.9 1888.2,456.6 Q1887.2,460.3 1885.9,463.4 Q1884.6,466.5 1882.5,469.6 Q1880.5,472.7 1876.7,474.3 Q1873.0,475.9 1868.8,474.8 Q1864.7,473.7 1861.6,470.6Z"/><path d="M2015.3,462.5 Q2005.5,468.2 1994.8,467.6 Q1984.1,467.0 1977.6,462.9 Q1971.1,458.9 1965.6,455.4 Q1960.1,451.9 1954.9,446.9 Q1949.7,442.0 1950.6,434.5 Q1951.5,427.0 1959.3,420.7 Q1967.1,414.3 1976.6,410.7 Q1986.2,407.0 1996.0,404.9 Q2005.8,402.9 2015.0,404.0 Q2024.3,405.2 2028.9,410.6 Q2033.6,415.9 2033.6,422.3 Q2033.6,428.7 2032.8,435.0 Q2032.1,441.4 2028.6,449.1 Q2025.0,456.8 2015.3,462.5Z"/><path d="M2010.0,455.3 Q2002.8,459.5 1994.9,459.1 Q1986.9,458.6 1982.1,455.6 Q1977.3,452.6 1973.2,450.0 Q1969.2,447.4 1965.3,443.8 Q1961.5,440.1 1962.1,434.6 Q1962.8,429.1 1968.6,424.4 Q1974.3,419.7 1981.4,416.9 Q1988.5,414.2 1995.7,412.7 Q2003.0,411.2 2009.8,412.0 Q2016.7,412.9 2020.1,416.9 Q2023.5,420.8 2023.5,425.5 Q2023.5,430.3 2023.0,435.0 Q2022.5,439.7 2019.8,445.4 Q2017.2,451.1 2010.0,455.3Z"/><path d="M2004.7,448.1 Q2000.0,450.8 1994.9,450.5 Q1989.8,450.2 1986.6,448.3 Q1983.5,446.4 1980.9,444.7 Q1978.3,443.0 1975.8,440.6 Q1973.3,438.2 1973.7,434.7 Q1974.1,431.1 1977.8,428.0 Q1981.6,425.0 1986.2,423.2 Q1990.8,421.4 1995.5,420.5 Q2000.2,419.5 2004.6,420.0 Q2009.1,420.6 2011.3,423.2 Q2013.5,425.7 2013.5,428.8 Q2013.5,431.9 2013.2,434.9 Q2012.8,438.0 2011.1,441.7 Q2009.4,445.4 2004.7,448.1Z"/><path d="M1999.4,440.9 Q1997.3,442.1 1994.9,442.0 Q1992.6,441.9 1991.2,441.0 Q1989.7,440.1 1988.5,439.3 Q1987.3,438.5 1986.2,437.5 Q1985.0,436.4 1985.2,434.7 Q1985.4,433.1 1987.1,431.7 Q1988.8,430.3 1990.9,429.5 Q1993.0,428.7 1995.2,428.2 Q1997.3,427.8 1999.4,428.0 Q2001.4,428.3 2002.4,429.5 Q2003.5,430.6 2003.5,432.0 Q2003.5,433.4 2003.3,434.8 Q2003.2,436.3 2002.4,437.9 Q2001.6,439.6 1999.4,440.9Z"/><path d="M2065.2,473.7 Q2061.5,467.5 2060.1,460.9 Q2058.6,454.3 2057.4,447.0 Q2056.3,439.8 2058.0,432.3 Q2059.8,424.8 2066.3,422.8 Q2072.8,420.9 2079.3,425.5 Q2085.7,430.2 2089.8,434.9 Q2093.9,439.5 2099.1,442.9 Q2104.3,446.2 2109.6,452.9 Q2115.0,459.6 2114.7,467.7 Q2114.3,475.8 2108.8,479.7 Q2103.2,483.5 2097.5,484.2 Q2091.7,485.0 2086.2,485.2 Q2080.7,485.5 2074.8,482.8 Q2068.9,480.0 2065.2,473.7Z"/><path d="M2230.7,488.3 Q2224.8,485.5 2220.1,480.5 Q2215.5,475.5 2214.6,469.4 Q2213.7,463.3 2216.6,458.9 Q2219.6,454.5 2223.1,451.8 Q2226.5,449.1 2230.0,445.7 Q2233.4,442.3 2239.4,440.2 Q2245.3,438.0 2252.0,441.1 Q2258.8,444.2 2261.6,450.7 Q2264.5,457.3 2263.9,462.9 Q2263.4,468.5 2262.5,473.0 Q2261.6,477.5 2259.7,482.1 Q2257.9,486.6 2253.3,489.3 Q2248.7,492.0 2242.7,491.6 Q2236.6,491.2 2230.7,488.3Z"/><path d="M2312.7,466.9 Q2304.5,468.6 2298.6,462.8 Q2292.7,457.1 2292.4,448.9 Q2292.2,440.7 2293.2,434.5 Q2294.3,428.3 2294.5,421.7 Q2294.6,415.1 2298.2,408.0 Q2301.7,401.0 2309.0,398.6 Q2316.3,396.2 2323.2,398.6 Q2330.1,401.0 2335.7,405.0 Q2341.3,408.9 2345.5,414.7 Q2349.8,420.4 2349.6,427.9 Q2349.5,435.3 2345.2,441.0 Q2340.9,446.7 2336.4,450.9 Q2331.9,455.2 2326.3,460.3 Q2320.8,465.3 2312.7,466.9Z"/><path d="M2314.2,457.7 Q2308.2,458.9 2303.8,454.7 Q2299.4,450.4 2299.2,444.4 Q2299.0,438.3 2299.8,433.7 Q2300.6,429.1 2300.7,424.2 Q2300.9,419.3 2303.5,414.1 Q2306.1,408.9 2311.5,407.1 Q2316.9,405.3 2322.0,407.1 Q2327.1,408.9 2331.3,411.8 Q2335.4,414.8 2338.5,419.0 Q2341.7,423.3 2341.6,428.8 Q2341.4,434.3 2338.3,438.5 Q2335.1,442.7 2331.8,445.9 Q2328.4,449.0 2324.3,452.8 Q2320.2,456.5 2314.2,457.7Z"/><path d="M2315.8,448.5 Q2311.9,449.2 2309.0,446.5 Q2306.2,443.8 2306.0,439.8 Q2305.9,435.9 2306.4,432.9 Q2306.9,429.9 2307.0,426.8 Q2307.1,423.6 2308.8,420.2 Q2310.5,416.8 2314.0,415.7 Q2317.5,414.5 2320.8,415.7 Q2324.1,416.8 2326.8,418.7 Q2329.5,420.6 2331.5,423.4 Q2333.6,426.1 2333.5,429.7 Q2333.4,433.3 2331.4,436.0 Q2329.3,438.7 2327.2,440.8 Q2325.0,442.8 2322.3,445.3 Q2319.7,447.7 2315.8,448.5Z"/><path d="M2422.2,487.0 Q2415.8,475.2 2415.1,464.0 Q2414.4,452.8 2413.7,442.7 Q2413.0,432.7 2413.6,420.4 Q2414.1,408.1 2422.0,399.3 Q2429.9,390.5 2442.4,392.9 Q2454.9,395.4 2464.4,404.8 Q2473.9,414.3 2480.4,423.6 Q2486.9,433.0 2492.5,443.2 Q2498.0,453.4 2499.1,465.1 Q2500.1,476.8 2495.0,486.1 Q2489.8,495.3 2481.4,500.8 Q2472.9,506.3 2462.1,508.2 Q2451.3,510.0 2439.9,504.4 Q2428.5,498.9 2422.2,487.0Z"/><path d="M2576.0,486.4 Q2568.0,484.2 2562.2,479.9 Q2556.5,475.6 2553.0,471.7 Q2549.6,467.8 2547.1,463.8 Q2544.6,459.9 2545.2,456.4 Q2545.8,452.8 2550.1,451.0 Q2554.3,449.1 2560.0,448.5 Q2565.7,447.9 2572.9,448.5 Q2580.0,449.1 2587.5,452.3 Q2595.0,455.4 2598.4,460.1 Q2601.8,464.8 2600.6,468.4 Q2599.5,471.9 2598.4,474.7 Q2597.4,477.5 2596.2,481.1 Q2595.0,484.7 2589.6,486.6 Q2584.1,488.6 2576.0,486.4Z"/><path d="M2575.5,481.2 Q2569.6,479.6 2565.3,476.4 Q2561.1,473.2 2558.5,470.3 Q2555.9,467.4 2554.1,464.5 Q2552.3,461.6 2552.7,459.0 Q2553.2,456.4 2556.3,455.0 Q2559.4,453.6 2563.7,453.1 Q2567.9,452.7 2573.2,453.2 Q2578.5,453.6 2584.0,455.9 Q2589.6,458.3 2592.1,461.7 Q2594.6,465.2 2593.7,467.9 Q2592.9,470.5 2592.1,472.6 Q2591.3,474.6 2590.4,477.3 Q2589.6,479.9 2585.6,481.4 Q2581.5,482.8 2575.5,481.2Z"/><path d="M2672.6,460.7 Q2667.4,451.5 2662.0,442.8 Q2656.6,434.2 2652.7,423.4 Q2648.9,412.7 2651.8,405.4 Q2654.8,398.1 2662.0,397.8 Q2669.2,397.4 2676.0,398.6 Q2682.9,399.8 2690.9,402.3 Q2699.0,404.8 2707.1,413.4 Q2715.2,421.9 2717.8,432.7 Q2720.4,443.6 2719.0,451.1 Q2717.5,458.6 2716.9,466.1 Q2716.3,473.6 2713.4,481.3 Q2710.6,489.0 2702.4,488.6 Q2694.2,488.1 2686.0,479.0 Q2677.7,470.0 2672.6,460.7Z"/><path d="M2676.6,455.0 Q2672.8,448.2 2668.8,441.8 Q2664.8,435.4 2661.9,427.4 Q2659.0,419.5 2661.2,414.1 Q2663.4,408.7 2668.7,408.4 Q2674.0,408.1 2679.1,409.0 Q2684.2,410.0 2690.2,411.8 Q2696.1,413.6 2702.1,420.0 Q2708.1,426.3 2710.0,434.3 Q2712.0,442.4 2710.9,447.9 Q2709.8,453.4 2709.3,459.0 Q2708.9,464.5 2706.8,470.2 Q2704.7,476.0 2698.7,475.6 Q2692.6,475.3 2686.5,468.6 Q2680.4,461.9 2676.6,455.0Z"/><path d="M2680.6,449.3 Q2678.1,444.9 2675.5,440.7 Q2672.9,436.6 2671.0,431.4 Q2669.2,426.3 2670.6,422.8 Q2672.0,419.3 2675.4,419.1 Q2678.9,418.9 2682.2,419.5 Q2685.5,420.1 2689.4,421.3 Q2693.2,422.5 2697.1,426.6 Q2701.0,430.7 2702.3,435.9 Q2703.5,441.1 2702.8,444.7 Q2702.1,448.3 2701.8,451.9 Q2701.5,455.5 2700.2,459.2 Q2698.8,462.9 2694.9,462.7 Q2690.9,462.5 2687.0,458.1 Q2683.0,453.8 2680.6,449.3Z"/><path d="M2684.5,443.6 Q2683.4,441.6 2682.2,439.7 Q2681.0,437.8 2680.2,435.4 Q2679.3,433.1 2680.0,431.5 Q2680.6,429.9 2682.2,429.8 Q2683.8,429.7 2685.3,430.0 Q2686.8,430.2 2688.6,430.8 Q2690.3,431.3 2692.1,433.2 Q2693.9,435.1 2694.5,437.5 Q2695.1,439.9 2694.7,441.5 Q2694.4,443.2 2694.3,444.8 Q2694.1,446.4 2693.5,448.1 Q2692.9,449.8 2691.1,449.7 Q2689.3,449.6 2687.5,447.7 Q2685.7,445.7 2684.5,443.6Z"/><path d="M-25.7,572.2 Q-26.1,565.9 -24.3,560.3 Q-22.4,554.7 -18.5,549.7 Q-14.6,544.6 -7.6,541.9 Q-0.6,539.1 6.6,539.5 Q13.9,539.9 20.6,540.9 Q27.2,541.9 35.3,543.8 Q43.4,545.7 48.5,551.3 Q53.5,556.9 49.8,563.4 Q46.0,570.0 37.7,573.0 Q29.5,576.1 23.5,577.8 Q17.5,579.5 11.1,582.7 Q4.8,585.9 -4.1,586.6 Q-13.0,587.4 -19.1,582.9 Q-25.2,578.5 -25.7,572.2Z"/><path d="M134.6,570.9 Q126.7,578.5 118.2,581.8 Q109.6,585.0 101.9,587.4 Q94.3,589.8 86.1,590.1 Q78.0,590.3 73.1,584.9 Q68.2,579.6 68.4,571.6 Q68.5,563.6 70.0,555.8 Q71.4,548.1 74.7,539.0 Q78.0,530.0 86.2,523.0 Q94.4,516.1 103.3,516.8 Q112.3,517.6 117.3,522.5 Q122.3,527.4 127.2,530.8 Q132.1,534.2 137.7,539.4 Q143.4,544.6 142.9,554.0 Q142.4,563.4 134.6,570.9Z"/><path d="M126.3,566.8 Q120.6,572.4 114.2,574.8 Q107.9,577.2 102.2,579.0 Q96.5,580.7 90.5,580.9 Q84.5,581.1 80.9,577.1 Q77.3,573.1 77.4,567.2 Q77.5,561.3 78.5,555.6 Q79.6,549.8 82.0,543.1 Q84.5,536.4 90.6,531.3 Q96.7,526.2 103.3,526.7 Q109.8,527.3 113.6,530.9 Q117.3,534.5 120.9,537.0 Q124.5,539.5 128.7,543.4 Q132.9,547.3 132.5,554.2 Q132.1,561.1 126.3,566.8Z"/><path d="M118.1,562.6 Q114.4,566.2 110.3,567.8 Q106.2,569.3 102.5,570.5 Q98.8,571.7 94.9,571.8 Q91.0,571.9 88.6,569.3 Q86.3,566.7 86.4,562.9 Q86.4,559.1 87.1,555.3 Q87.8,551.6 89.4,547.3 Q91.0,542.9 94.9,539.6 Q98.9,536.2 103.2,536.6 Q107.4,537.0 109.8,539.3 Q112.3,541.7 114.6,543.3 Q116.9,544.9 119.7,547.4 Q122.4,549.9 122.1,554.4 Q121.9,558.9 118.1,562.6Z"/><path d="M226.8,581.4 Q222.6,583.6 218.6,581.0 Q214.7,578.4 211.5,574.1 Q208.3,569.7 205.1,563.9 Q201.9,558.0 201.2,549.2 Q200.4,540.5 204.3,534.1 Q208.1,527.7 213.1,527.3 Q218.1,527.0 221.5,526.8 Q224.8,526.6 229.2,524.0 Q233.5,521.3 238.9,523.4 Q244.2,525.5 245.9,534.0 Q247.5,542.5 245.0,550.5 Q242.5,558.5 239.6,563.8 Q236.7,569.1 233.8,574.1 Q230.9,579.1 226.8,581.4Z"/><path d="M323.6,583.5 Q317.0,579.6 311.1,574.4 Q305.1,569.2 302.2,561.5 Q299.4,553.7 302.5,546.4 Q305.7,539.2 311.7,535.0 Q317.7,530.9 323.5,527.5 Q329.4,524.1 337.0,521.6 Q344.6,519.1 352.8,522.1 Q361.1,525.0 364.8,532.9 Q368.5,540.7 368.2,548.2 Q367.8,555.8 366.9,562.6 Q366.0,569.4 363.0,576.4 Q360.0,583.4 353.0,587.0 Q345.9,590.6 338.0,589.0 Q330.1,587.3 323.6,583.5Z"/><path d="M327.1,576.0 Q322.2,573.2 317.8,569.4 Q313.4,565.5 311.3,559.8 Q309.2,554.0 311.5,548.6 Q313.8,543.2 318.3,540.2 Q322.7,537.1 327.0,534.6 Q331.3,532.1 337.0,530.3 Q342.6,528.4 348.7,530.6 Q354.8,532.8 357.6,538.6 Q360.3,544.4 360.1,550.0 Q359.8,555.5 359.1,560.6 Q358.4,565.6 356.2,570.8 Q354.0,576.0 348.8,578.7 Q343.6,581.3 337.8,580.1 Q331.9,578.9 327.1,576.0Z"/><path d="M330.6,568.6 Q327.4,566.8 324.6,564.3 Q321.7,561.8 320.3,558.0 Q319.0,554.3 320.5,550.8 Q322.0,547.3 324.9,545.3 Q327.7,543.3 330.5,541.7 Q333.3,540.1 337.0,538.9 Q340.7,537.7 344.6,539.1 Q348.6,540.5 350.4,544.3 Q352.2,548.0 352.0,551.7 Q351.8,555.3 351.3,558.6 Q350.9,561.8 349.5,565.2 Q348.1,568.6 344.7,570.3 Q341.3,572.0 337.5,571.2 Q333.7,570.4 330.6,568.6Z"/><path d="M334.1,561.2 Q332.6,560.3 331.3,559.2 Q330.0,558.0 329.4,556.3 Q328.7,554.6 329.4,553.0 Q330.1,551.4 331.4,550.5 Q332.8,549.6 334.0,548.8 Q335.3,548.1 337.0,547.5 Q338.7,547.0 340.5,547.7 Q342.3,548.3 343.1,550.0 Q344.0,551.7 343.9,553.4 Q343.8,555.1 343.6,556.6 Q343.4,558.1 342.7,559.6 Q342.1,561.1 340.5,561.9 Q339.0,562.7 337.2,562.4 Q335.5,562.0 334.1,561.2Z"/><path d="M483.0,577.2 Q477.4,575.9 473.5,571.8 Q469.6,567.7 465.9,562.5 Q462.3,557.3 460.3,549.0 Q458.4,540.8 462.1,531.4 Q465.8,522.0 473.3,518.0 Q480.7,514.0 486.6,514.6 Q492.5,515.3 497.6,514.6 Q502.7,513.9 509.3,513.9 Q515.9,514.0 520.1,520.2 Q524.3,526.3 522.6,535.8 Q520.9,545.2 516.1,552.8 Q511.3,560.4 506.0,566.1 Q500.8,571.8 494.7,575.1 Q488.6,578.5 483.0,577.2Z"/><path d="M485.0,568.3 Q480.9,567.4 478.0,564.3 Q475.1,561.3 472.4,557.5 Q469.7,553.6 468.2,547.5 Q466.8,541.4 469.6,534.4 Q472.3,527.5 477.8,524.5 Q483.3,521.6 487.7,522.0 Q492.0,522.5 495.8,522.0 Q499.6,521.5 504.5,521.5 Q509.3,521.6 512.5,526.1 Q515.6,530.7 514.3,537.7 Q513.1,544.7 509.5,550.3 Q506.0,555.9 502.1,560.1 Q498.2,564.3 493.7,566.8 Q489.2,569.3 485.0,568.3Z"/><path d="M570.9,544.7 Q568.2,539.4 570.4,533.7 Q572.6,528.1 578.7,523.2 Q584.7,518.3 593.8,515.2 Q602.9,512.2 612.7,511.9 Q622.5,511.6 630.9,513.3 Q639.4,514.9 646.8,517.9 Q654.2,520.8 659.0,525.6 Q663.9,530.5 662.3,536.5 Q660.8,542.5 653.0,547.1 Q645.2,551.6 635.7,553.8 Q626.3,555.9 617.1,556.8 Q607.9,557.7 598.4,557.1 Q588.9,556.6 581.2,553.3 Q573.6,550.1 570.9,544.7Z"/><path d="M582.4,542.2 Q580.4,538.2 582.0,534.1 Q583.7,529.9 588.1,526.2 Q592.6,522.6 599.3,520.4 Q606.0,518.1 613.3,517.9 Q620.5,517.7 626.8,518.9 Q633.1,520.2 638.5,522.3 Q644.0,524.5 647.6,528.1 Q651.2,531.6 650.0,536.1 Q648.9,540.5 643.1,543.9 Q637.4,547.3 630.4,548.9 Q623.3,550.5 616.6,551.1 Q609.8,551.8 602.7,551.4 Q595.7,551.0 590.0,548.6 Q584.3,546.2 582.4,542.2Z"/><path d="M593.8,539.7 Q592.5,537.1 593.6,534.4 Q594.7,531.7 597.6,529.3 Q600.5,527.0 604.8,525.5 Q609.2,524.1 613.9,523.9 Q618.6,523.8 622.7,524.6 Q626.7,525.4 630.3,526.8 Q633.8,528.2 636.2,530.5 Q638.5,532.8 637.8,535.7 Q637.0,538.6 633.3,540.8 Q629.5,543.0 625.0,544.0 Q620.4,545.0 616.0,545.5 Q611.6,545.9 607.1,545.6 Q602.5,545.4 598.8,543.8 Q595.1,542.2 593.8,539.7Z"/><path d="M683.5,573.1 Q678.4,568.7 678.7,561.9 Q678.9,555.1 684.2,547.7 Q689.6,540.2 698.0,532.9 Q706.4,525.6 718.1,519.1 Q729.9,512.7 742.8,510.2 Q755.7,507.8 763.8,511.3 Q771.8,514.7 773.6,520.9 Q775.4,527.0 775.5,533.1 Q775.6,539.1 773.6,546.5 Q771.6,553.8 763.2,562.0 Q754.8,570.3 741.9,575.4 Q728.9,580.6 717.3,581.2 Q705.7,581.8 697.2,579.7 Q688.7,577.5 683.5,573.1Z"/><path d="M695.5,566.3 Q691.7,563.0 691.8,558.0 Q692.0,553.0 696.0,547.4 Q699.9,541.9 706.1,536.5 Q712.4,531.1 721.1,526.3 Q729.7,521.5 739.3,519.7 Q748.9,517.9 754.8,520.5 Q760.7,523.1 762.1,527.6 Q763.4,532.1 763.5,536.6 Q763.6,541.1 762.1,546.5 Q760.6,552.0 754.4,558.1 Q748.2,564.2 738.6,568.0 Q729.0,571.8 720.4,572.2 Q711.8,572.7 705.6,571.1 Q699.3,569.5 695.5,566.3Z"/><path d="M707.4,559.4 Q704.9,557.3 705.0,554.0 Q705.2,550.8 707.7,547.2 Q710.3,543.6 714.3,540.1 Q718.3,536.6 724.0,533.5 Q729.6,530.4 735.8,529.2 Q742.0,528.1 745.9,529.7 Q749.7,531.4 750.6,534.3 Q751.5,537.3 751.5,540.2 Q751.5,543.1 750.6,546.6 Q749.7,550.1 745.6,554.1 Q741.6,558.0 735.4,560.5 Q729.2,563.0 723.6,563.3 Q718.0,563.6 713.9,562.6 Q709.8,561.5 707.4,559.4Z"/><path d="M719.3,552.6 Q718.2,551.6 718.2,550.1 Q718.3,548.6 719.4,547.0 Q720.6,545.3 722.5,543.7 Q724.3,542.1 726.9,540.7 Q729.5,539.3 732.3,538.7 Q735.2,538.2 736.9,539.0 Q738.7,539.7 739.1,541.1 Q739.5,542.4 739.5,543.8 Q739.5,545.1 739.1,546.7 Q738.7,548.3 736.8,550.1 Q735.0,551.9 732.1,553.1 Q729.3,554.2 726.7,554.3 Q724.2,554.5 722.3,554.0 Q720.4,553.5 719.3,552.6Z"/><path d="M866.5,581.4 Q858.4,589.0 848.2,591.9 Q838.0,594.9 827.6,595.6 Q817.2,596.2 806.9,592.8 Q796.6,589.4 791.7,579.9 Q786.8,570.5 789.2,560.3 Q791.7,550.1 795.5,541.9 Q799.4,533.7 803.6,524.3 Q807.8,514.9 817.2,507.1 Q826.6,499.3 838.4,500.6 Q850.2,501.9 857.1,510.4 Q864.1,518.9 867.5,527.3 Q871.0,535.8 874.1,544.5 Q877.3,553.1 875.9,563.5 Q874.5,573.8 866.5,581.4Z"/><path d="M857.7,573.6 Q851.8,579.3 844.2,581.4 Q836.7,583.6 829.0,584.1 Q821.3,584.6 813.7,582.1 Q806.0,579.5 802.4,572.6 Q798.8,565.6 800.6,558.0 Q802.4,550.4 805.2,544.4 Q808.1,538.3 811.2,531.4 Q814.3,524.4 821.3,518.7 Q828.2,512.9 836.9,513.9 Q845.6,514.8 850.8,521.1 Q856.0,527.4 858.5,533.6 Q861.1,539.9 863.4,546.3 Q865.7,552.7 864.7,560.4 Q863.7,568.0 857.7,573.6Z"/><path d="M849.0,565.9 Q845.1,569.5 840.2,570.9 Q835.3,572.3 830.3,572.7 Q825.3,573.0 820.4,571.3 Q815.5,569.7 813.1,565.2 Q810.7,560.7 811.9,555.7 Q813.1,550.8 814.9,546.9 Q816.8,543.0 818.8,538.5 Q820.8,534.0 825.3,530.2 Q829.8,526.5 835.5,527.1 Q841.1,527.7 844.5,531.8 Q847.8,535.9 849.5,539.9 Q851.1,544.0 852.6,548.1 Q854.1,552.3 853.5,557.3 Q852.8,562.2 849.0,565.9Z"/><path d="M840.2,558.1 Q838.5,559.8 836.2,560.4 Q834.0,561.1 831.7,561.2 Q829.4,561.4 827.1,560.6 Q824.9,559.9 823.8,557.8 Q822.7,555.7 823.2,553.5 Q823.8,551.2 824.6,549.4 Q825.5,547.6 826.4,545.5 Q827.3,543.5 829.4,541.8 Q831.4,540.1 834.0,540.3 Q836.6,540.6 838.2,542.5 Q839.7,544.4 840.5,546.2 Q841.2,548.1 841.9,550.0 Q842.6,551.9 842.3,554.2 Q842.0,556.4 840.2,558.1Z"/><path d="M955.2,564.6 Q950.3,560.7 945.5,555.4 Q940.8,550.1 939.4,541.9 Q937.9,533.8 943.4,526.2 Q948.9,518.6 957.7,516.3 Q966.4,514.0 973.3,514.6 Q980.2,515.2 986.7,515.0 Q993.3,514.8 1000.9,516.7 Q1008.4,518.5 1012.4,525.2 Q1016.3,531.8 1014.2,540.0 Q1012.0,548.2 1006.7,554.6 Q1001.3,561.1 994.7,565.7 Q988.0,570.3 980.5,571.8 Q973.0,573.2 966.6,570.9 Q960.1,568.6 955.2,564.6Z"/><path d="M960.8,558.6 Q957.2,555.7 953.7,551.8 Q950.2,547.8 949.1,541.8 Q948.1,535.7 952.1,530.1 Q956.2,524.5 962.7,522.8 Q969.2,521.1 974.3,521.6 Q979.3,522.0 984.2,521.9 Q989.1,521.7 994.6,523.1 Q1000.2,524.4 1003.2,529.4 Q1006.1,534.3 1004.5,540.3 Q1002.9,546.4 998.9,551.2 Q995.0,556.0 990.1,559.4 Q985.2,562.8 979.6,563.8 Q974.0,564.9 969.3,563.2 Q964.5,561.5 960.8,558.6Z"/><path d="M966.5,552.5 Q964.1,550.6 961.9,548.1 Q959.6,545.6 958.9,541.6 Q958.2,537.7 960.9,534.1 Q963.5,530.4 967.7,529.3 Q971.9,528.2 975.2,528.5 Q978.5,528.8 981.6,528.7 Q984.8,528.6 988.4,529.5 Q992.0,530.4 993.9,533.6 Q995.9,536.8 994.8,540.7 Q993.8,544.6 991.2,547.7 Q988.6,550.8 985.4,553.0 Q982.3,555.2 978.7,555.9 Q975.0,556.6 972.0,555.5 Q968.9,554.4 966.5,552.5Z"/><path d="M972.2,546.5 Q971.1,545.6 970.0,544.4 Q969.0,543.3 968.7,541.5 Q968.3,539.7 969.6,538.0 Q970.8,536.4 972.7,535.8 Q974.6,535.3 976.1,535.5 Q977.6,535.6 979.1,535.6 Q980.5,535.5 982.2,535.9 Q983.9,536.3 984.7,537.8 Q985.6,539.2 985.1,541.0 Q984.7,542.8 983.5,544.3 Q982.3,545.7 980.8,546.7 Q979.4,547.7 977.7,548.0 Q976.1,548.4 974.7,547.8 Q973.2,547.3 972.2,546.5Z"/><path d="M1067.2,580.6 Q1054.0,578.6 1043.2,572.9 Q1032.4,567.1 1025.8,558.7 Q1019.2,550.4 1017.0,541.4 Q1014.8,532.4 1015.0,523.2 Q1015.1,514.0 1019.1,504.1 Q1023.1,494.1 1034.3,487.8 Q1045.6,481.4 1059.9,484.0 Q1074.2,486.6 1083.6,495.2 Q1092.9,503.8 1098.0,511.9 Q1103.0,520.1 1108.4,528.1 Q1113.8,536.2 1116.1,546.6 Q1118.4,557.0 1112.0,566.3 Q1105.6,575.6 1093.0,579.1 Q1080.4,582.6 1067.2,580.6Z"/><path d="M1066.3,568.6 Q1056.5,567.1 1048.5,562.8 Q1040.5,558.5 1035.7,552.4 Q1030.8,546.2 1029.2,539.5 Q1027.6,532.9 1027.7,526.1 Q1027.8,519.3 1030.7,511.9 Q1033.6,504.6 1042.0,499.9 Q1050.3,495.1 1060.9,497.1 Q1071.5,499.0 1078.4,505.3 Q1085.4,511.7 1089.1,517.8 Q1092.8,523.8 1096.8,529.7 Q1100.8,535.7 1102.5,543.4 Q1104.2,551.1 1099.5,558.0 Q1094.8,564.9 1085.4,567.5 Q1076.0,570.1 1066.3,568.6Z"/><path d="M1065.4,556.5 Q1059.1,555.6 1053.9,552.8 Q1048.7,550.0 1045.5,546.0 Q1042.4,542.0 1041.3,537.7 Q1040.3,533.4 1040.3,529.0 Q1040.4,524.6 1042.3,519.8 Q1044.2,515.0 1049.6,512.0 Q1055.0,508.9 1061.9,510.1 Q1068.8,511.4 1073.3,515.5 Q1077.8,519.6 1080.2,523.6 Q1082.6,527.5 1085.2,531.3 Q1087.8,535.2 1088.9,540.2 Q1090.0,545.2 1086.9,549.7 Q1083.9,554.1 1077.8,555.8 Q1071.7,557.5 1065.4,556.5Z"/><path d="M1216.8,567.6 Q1215.1,572.3 1210.4,573.3 Q1205.8,574.2 1200.1,570.7 Q1194.5,567.1 1190.0,562.1 Q1185.5,557.0 1181.7,551.8 Q1177.9,546.7 1174.6,540.4 Q1171.2,534.2 1170.5,527.8 Q1169.8,521.5 1172.7,517.9 Q1175.6,514.4 1180.4,514.3 Q1185.1,514.2 1190.3,516.5 Q1195.5,518.7 1200.5,523.0 Q1205.4,527.3 1209.2,533.1 Q1212.9,538.9 1215.1,545.0 Q1217.2,551.0 1217.8,556.9 Q1218.5,562.8 1216.8,567.6Z"/><path d="M1211.1,561.2 Q1209.9,564.7 1206.4,565.4 Q1203.0,566.0 1198.8,563.4 Q1194.6,560.8 1191.3,557.1 Q1188.0,553.3 1185.2,549.5 Q1182.3,545.7 1179.9,541.1 Q1177.4,536.4 1176.9,531.7 Q1176.4,527.0 1178.5,524.4 Q1180.6,521.8 1184.2,521.7 Q1187.7,521.7 1191.5,523.3 Q1195.4,525.0 1199.1,528.2 Q1202.7,531.4 1205.5,535.7 Q1208.3,539.9 1209.8,544.4 Q1211.4,548.9 1211.9,553.3 Q1212.4,557.6 1211.1,561.2Z"/><path d="M1445.4,594.4 Q1435.4,593.1 1428.9,588.5 Q1422.3,583.8 1418.5,580.0 Q1414.6,576.2 1409.2,572.5 Q1403.8,568.7 1401.3,563.4 Q1398.8,558.1 1404.0,554.4 Q1409.3,550.7 1417.8,550.0 Q1426.3,549.4 1434.3,549.7 Q1442.3,550.0 1450.9,551.6 Q1459.4,553.2 1465.4,557.4 Q1471.4,561.5 1471.8,566.3 Q1472.1,571.0 1470.9,574.9 Q1469.7,578.8 1468.6,583.4 Q1467.6,588.1 1461.5,591.9 Q1455.4,595.6 1445.4,594.4Z"/><path d="M1443.8,588.0 Q1436.4,587.1 1431.6,583.7 Q1426.7,580.2 1423.8,577.4 Q1421.0,574.6 1417.0,571.8 Q1413.0,569.0 1411.1,565.1 Q1409.3,561.2 1413.2,558.4 Q1417.0,555.7 1423.3,555.2 Q1429.6,554.7 1435.6,555.0 Q1441.5,555.2 1447.8,556.4 Q1454.1,557.5 1458.6,560.6 Q1463.0,563.7 1463.3,567.2 Q1463.6,570.7 1462.7,573.6 Q1461.8,576.5 1461.0,579.9 Q1460.2,583.4 1455.7,586.2 Q1451.2,588.9 1443.8,588.0Z"/><path d="M1442.2,581.7 Q1437.4,581.1 1434.2,578.8 Q1431.1,576.6 1429.2,574.8 Q1427.4,572.9 1424.8,571.1 Q1422.2,569.3 1421.0,566.8 Q1419.8,564.2 1422.3,562.5 Q1424.8,560.7 1428.9,560.4 Q1433.0,560.0 1436.8,560.2 Q1440.7,560.4 1444.8,561.1 Q1448.9,561.9 1451.8,563.9 Q1454.6,565.9 1454.8,568.2 Q1455.0,570.4 1454.4,572.3 Q1453.8,574.2 1453.3,576.4 Q1452.8,578.6 1449.9,580.4 Q1447.0,582.3 1442.2,581.7Z"/><path d="M1440.5,575.3 Q1438.4,575.0 1436.9,574.0 Q1435.5,573.0 1434.6,572.1 Q1433.8,571.3 1432.6,570.5 Q1431.4,569.6 1430.8,568.5 Q1430.3,567.3 1431.4,566.5 Q1432.6,565.7 1434.5,565.5 Q1436.3,565.4 1438.1,565.4 Q1439.9,565.5 1441.7,565.9 Q1443.6,566.2 1444.9,567.1 Q1446.3,568.1 1446.3,569.1 Q1446.4,570.1 1446.2,571.0 Q1445.9,571.8 1445.7,572.9 Q1445.4,573.9 1444.1,574.7 Q1442.7,575.6 1440.5,575.3Z"/><path d="M1607.5,529.4 Q1603.9,544.3 1600.1,555.4 Q1596.3,566.6 1591.6,577.6 Q1586.9,588.6 1578.6,594.5 Q1570.3,600.4 1561.5,598.4 Q1552.8,596.3 1544.7,591.3 Q1536.5,586.3 1528.5,577.2 Q1520.6,568.0 1518.8,552.5 Q1517.0,536.9 1524.7,524.7 Q1532.3,512.5 1541.4,508.7 Q1550.4,505.0 1556.7,499.6 Q1562.9,494.2 1572.2,486.0 Q1581.5,477.8 1592.6,480.7 Q1603.7,483.7 1607.4,499.1 Q1611.0,514.6 1607.5,529.4Z"/><path d="M1596.7,532.4 Q1594.1,543.4 1591.3,551.7 Q1588.5,560.0 1585.0,568.1 Q1581.5,576.2 1575.3,580.6 Q1569.2,585.0 1562.7,583.5 Q1556.3,582.0 1550.2,578.3 Q1544.2,574.6 1538.3,567.8 Q1532.4,561.0 1531.1,549.5 Q1529.8,538.0 1535.5,529.0 Q1541.1,519.9 1547.8,517.1 Q1554.5,514.4 1559.1,510.4 Q1563.7,506.4 1570.6,500.3 Q1577.5,494.2 1585.7,496.4 Q1594.0,498.6 1596.7,510.0 Q1599.4,521.5 1596.7,532.4Z"/><path d="M1643.4,558.0 Q1636.1,555.3 1631.3,548.5 Q1626.5,541.7 1628.1,534.0 Q1629.8,526.4 1633.9,521.3 Q1638.1,516.2 1641.4,510.7 Q1644.8,505.2 1650.9,500.1 Q1657.0,495.0 1665.4,496.6 Q1673.7,498.2 1678.4,505.6 Q1683.1,513.0 1684.8,519.8 Q1686.5,526.6 1689.0,533.0 Q1691.6,539.5 1691.6,547.5 Q1691.6,555.5 1685.5,560.2 Q1679.5,564.9 1671.8,564.3 Q1664.1,563.8 1657.4,562.2 Q1650.8,560.6 1643.4,558.0Z"/><path d="M1648.0,551.5 Q1642.6,549.5 1639.0,544.5 Q1635.4,539.4 1636.7,533.7 Q1637.9,528.1 1641.0,524.3 Q1644.0,520.6 1646.5,516.5 Q1649.0,512.4 1653.5,508.6 Q1658.0,504.8 1664.2,506.1 Q1670.4,507.3 1673.9,512.7 Q1677.4,518.2 1678.6,523.2 Q1679.8,528.2 1681.7,533.0 Q1683.6,537.8 1683.6,543.7 Q1683.6,549.6 1679.1,553.1 Q1674.7,556.6 1669.0,556.2 Q1663.3,555.8 1658.4,554.6 Q1653.4,553.4 1648.0,551.5Z"/><path d="M1652.5,545.0 Q1649.0,543.7 1646.7,540.4 Q1644.4,537.2 1645.2,533.5 Q1646.0,529.8 1648.0,527.4 Q1650.0,524.9 1651.6,522.3 Q1653.2,519.6 1656.1,517.2 Q1659.0,514.7 1663.1,515.5 Q1667.1,516.3 1669.3,519.9 Q1671.6,523.4 1672.4,526.7 Q1673.2,529.9 1674.4,533.0 Q1675.7,536.1 1675.6,539.9 Q1675.6,543.8 1672.7,546.0 Q1669.9,548.3 1666.2,548.0 Q1662.5,547.8 1659.3,547.0 Q1656.1,546.3 1652.5,545.0Z"/><path d="M1766.9,578.0 Q1762.9,570.8 1759.4,559.8 Q1755.9,548.8 1758.1,538.1 Q1760.3,527.4 1766.8,523.7 Q1773.2,520.1 1779.8,520.7 Q1786.3,521.3 1792.7,524.1 Q1799.1,526.9 1804.3,534.6 Q1809.4,542.4 1810.8,552.7 Q1812.3,563.1 1811.9,572.0 Q1811.4,581.0 1811.2,591.4 Q1811.0,601.9 1807.4,612.2 Q1803.9,622.5 1796.1,622.8 Q1788.4,623.0 1782.5,613.2 Q1776.5,603.4 1773.7,594.3 Q1770.8,585.2 1766.9,578.0Z"/><path d="M1772.2,575.1 Q1769.2,569.8 1766.7,561.7 Q1764.1,553.5 1765.7,545.6 Q1767.3,537.7 1772.1,535.0 Q1776.9,532.3 1781.7,532.7 Q1786.5,533.2 1791.3,535.2 Q1796.0,537.3 1799.8,543.0 Q1803.7,548.8 1804.7,556.4 Q1805.8,564.1 1805.5,570.7 Q1805.2,577.4 1805.0,585.1 Q1804.9,592.8 1802.2,600.4 Q1799.5,608.1 1793.8,608.3 Q1788.1,608.5 1783.7,601.2 Q1779.3,594.0 1777.2,587.2 Q1775.1,580.5 1772.2,575.1Z"/><path d="M1777.5,572.3 Q1775.6,568.8 1773.9,563.5 Q1772.2,558.3 1773.3,553.1 Q1774.3,548.0 1777.4,546.2 Q1780.5,544.5 1783.7,544.8 Q1786.8,545.1 1789.9,546.4 Q1792.9,547.7 1795.4,551.4 Q1797.9,555.2 1798.6,560.1 Q1799.3,565.1 1799.1,569.4 Q1798.9,573.7 1798.8,578.7 Q1798.7,583.7 1796.9,588.7 Q1795.2,593.6 1791.5,593.8 Q1787.8,593.9 1785.0,589.2 Q1782.1,584.5 1780.7,580.1 Q1779.4,575.7 1777.5,572.3Z"/><path d="M1969.0,570.2 Q1962.2,577.9 1953.7,583.6 Q1945.1,589.4 1933.9,590.9 Q1922.7,592.4 1912.2,586.1 Q1901.8,579.8 1896.5,569.4 Q1891.3,559.0 1889.0,549.0 Q1886.7,539.0 1885.5,528.1 Q1884.4,517.2 1888.7,506.6 Q1893.1,496.0 1903.8,491.8 Q1914.5,487.7 1925.7,490.8 Q1937.0,493.9 1946.3,499.3 Q1955.6,504.7 1964.0,512.1 Q1972.5,519.5 1976.8,530.4 Q1981.2,541.3 1978.5,551.9 Q1975.7,562.6 1969.0,570.2Z"/><path d="M2084.0,569.1 Q2081.8,575.8 2074.4,577.1 Q2067.0,578.5 2059.4,576.3 Q2051.8,574.1 2045.4,571.6 Q2039.0,569.1 2032.1,565.5 Q2025.2,561.9 2019.2,555.5 Q2013.3,549.2 2011.1,541.8 Q2009.0,534.3 2011.3,528.3 Q2013.5,522.3 2019.3,519.4 Q2025.1,516.5 2032.7,517.6 Q2040.2,518.7 2047.0,522.6 Q2053.9,526.5 2059.6,531.0 Q2065.4,535.5 2071.5,541.2 Q2077.7,546.8 2081.9,554.7 Q2086.1,562.5 2084.0,569.1Z"/><path d="M2189.1,555.5 Q2190.1,561.8 2187.7,567.9 Q2185.4,574.0 2180.1,577.3 Q2174.8,580.7 2169.2,581.3 Q2163.6,582.0 2158.1,581.7 Q2152.6,581.4 2146.8,579.3 Q2141.0,577.2 2137.3,571.7 Q2133.6,566.1 2134.3,559.4 Q2135.0,552.7 2138.5,547.5 Q2142.0,542.4 2146.1,538.5 Q2150.3,534.6 2155.6,532.1 Q2160.9,529.5 2166.9,530.1 Q2172.9,530.8 2177.6,534.6 Q2182.3,538.5 2185.2,543.9 Q2188.1,549.2 2189.1,555.5Z"/><path d="M2398.1,567.1 Q2396.4,562.9 2395.9,558.0 Q2395.5,553.1 2397.8,548.5 Q2400.2,543.8 2404.7,541.1 Q2409.2,538.5 2414.3,537.9 Q2419.5,537.4 2424.4,539.0 Q2429.4,540.6 2432.8,544.5 Q2436.2,548.3 2437.0,553.2 Q2437.8,558.0 2437.1,562.5 Q2436.3,567.1 2434.6,571.7 Q2433.0,576.2 2429.2,580.2 Q2425.4,584.1 2419.9,584.8 Q2414.3,585.5 2409.7,582.5 Q2405.1,579.6 2402.5,575.5 Q2399.8,571.3 2398.1,567.1Z"/><path d="M2403.0,565.4 Q2401.7,562.3 2401.4,558.6 Q2401.1,555.0 2402.8,551.6 Q2404.5,548.2 2407.9,546.2 Q2411.2,544.2 2415.0,543.8 Q2418.8,543.4 2422.5,544.6 Q2426.1,545.8 2428.7,548.6 Q2431.2,551.5 2431.8,555.1 Q2432.4,558.6 2431.8,562.0 Q2431.3,565.4 2430.0,568.7 Q2428.8,572.1 2426.0,575.0 Q2423.2,578.0 2419.1,578.5 Q2415.0,579.0 2411.6,576.8 Q2408.2,574.6 2406.2,571.6 Q2404.3,568.5 2403.0,565.4Z"/><path d="M2517.4,588.4 Q2512.9,589.7 2507.8,590.0 Q2502.6,590.3 2498.7,585.1 Q2494.8,579.9 2494.9,571.8 Q2494.9,563.7 2496.5,557.1 Q2498.0,550.5 2499.1,543.3 Q2500.2,536.1 2503.6,528.7 Q2507.1,521.3 2512.8,520.6 Q2518.4,519.8 2522.3,525.5 Q2526.2,531.3 2528.5,536.7 Q2530.8,542.1 2533.8,547.3 Q2536.9,552.5 2538.0,560.6 Q2539.0,568.8 2535.5,575.6 Q2532.0,582.4 2527.0,584.7 Q2521.9,587.0 2517.4,588.4Z"/><path d="M2516.9,580.5 Q2513.6,581.5 2509.8,581.7 Q2505.9,581.9 2503.0,578.1 Q2500.2,574.3 2500.2,568.3 Q2500.3,562.3 2501.4,557.4 Q2502.5,552.5 2503.3,547.2 Q2504.1,541.8 2506.7,536.4 Q2509.2,530.9 2513.4,530.4 Q2517.7,529.8 2520.5,534.0 Q2523.4,538.3 2525.1,542.3 Q2526.8,546.3 2529.0,550.1 Q2531.3,554.0 2532.1,560.0 Q2532.9,566.0 2530.3,571.1 Q2527.7,576.1 2524.0,577.8 Q2520.2,579.5 2516.9,580.5Z"/><path d="M2516.4,572.7 Q2514.2,573.4 2511.7,573.5 Q2509.3,573.6 2507.4,571.1 Q2505.5,568.7 2505.5,564.8 Q2505.6,560.9 2506.3,557.7 Q2507.1,554.5 2507.6,551.1 Q2508.1,547.6 2509.8,544.1 Q2511.4,540.5 2514.1,540.2 Q2516.9,539.8 2518.7,542.5 Q2520.6,545.3 2521.7,547.9 Q2522.8,550.5 2524.2,553.0 Q2525.7,555.5 2526.2,559.4 Q2526.8,563.3 2525.1,566.6 Q2523.4,569.8 2521.0,570.9 Q2518.5,572.0 2516.4,572.7Z"/><path d="M2791.0,570.2 Q2789.6,574.5 2787.1,578.0 Q2784.6,581.5 2781.3,585.4 Q2778.0,589.3 2771.8,591.3 Q2765.7,593.3 2759.5,590.0 Q2753.4,586.8 2751.4,581.1 Q2749.5,575.4 2749.4,571.1 Q2749.3,566.9 2747.9,562.6 Q2746.5,558.4 2747.0,553.0 Q2747.4,547.6 2752.4,544.5 Q2757.4,541.5 2763.8,542.6 Q2770.2,543.6 2775.4,546.4 Q2780.6,549.2 2784.8,552.8 Q2789.0,556.4 2790.8,561.2 Q2792.5,565.9 2791.0,570.2Z"/><path d="M2785.1,569.2 Q2784.0,572.4 2782.2,575.0 Q2780.3,577.6 2777.9,580.5 Q2775.4,583.4 2770.9,584.8 Q2766.3,586.3 2761.8,583.9 Q2757.2,581.5 2755.8,577.3 Q2754.3,573.1 2754.3,569.9 Q2754.2,566.7 2753.2,563.6 Q2752.1,560.5 2752.5,556.5 Q2752.8,552.5 2756.5,550.2 Q2760.2,548.0 2764.9,548.8 Q2769.7,549.6 2773.5,551.6 Q2777.4,553.7 2780.5,556.4 Q2783.6,559.0 2784.9,562.5 Q2786.2,566.0 2785.1,569.2Z"/><path d="M2779.1,568.2 Q2778.4,570.3 2777.2,572.0 Q2776.0,573.7 2774.4,575.5 Q2772.9,577.4 2769.9,578.4 Q2767.0,579.3 2764.0,577.8 Q2761.1,576.2 2760.1,573.5 Q2759.2,570.7 2759.1,568.7 Q2759.1,566.6 2758.4,564.6 Q2757.8,562.6 2758.0,560.0 Q2758.2,557.4 2760.6,555.9 Q2763.0,554.5 2766.0,555.0 Q2769.1,555.5 2771.6,556.8 Q2774.1,558.2 2776.1,559.9 Q2778.1,561.6 2779.0,563.9 Q2779.8,566.2 2779.1,568.2Z"/></g></svg>
<div style="position:absolute;left:18px;top:8px;width:2522.5px;height:106.8px;box-sizing:border-box;border-top:1px solid rgba(255,255,255,0.6);background:#f3f3f3;border-radius:6px;box-shadow:0 0 0 1px rgba(195,195,195,0.85),0 2px 3px rgba(0,0,0,0.16)"></div>
<div style="position:absolute;left:46px;top:34px;width:52px;height:52px;background:#59ccb8;border-radius:6px"></div>
<div style="position:absolute;left:61.4px;top:49.7px;width:21.2px;height:21.2px;background:#fff;border-radius:2.5px;transform:scale(1,1.045) rotate(45deg)"></div>
<div style="position:absolute;left:2175px;top:38px;width:337px;height:50px;box-sizing:border-box;border:1.5px solid #c9c9c9;border-radius:7px;background:#fff"></div>
<div style="position:absolute;left:2305px;top:38px;width:1.5px;height:50px;background:#c9c9c9"></div>
<div style="position:absolute;left:2394.5px;top:38px;width:1.5px;height:50px;background:#c9c9c9"></div>
<div style="position:absolute;left:2536px;top:41px;width:44px;height:53px;box-sizing:border-box;border:3px solid rgba(220,232,245,0.55);border-radius:8px;background:rgba(40,100,150,0.85)"></div>
<div style="position:absolute;left:19px;top:136px;width:2521px;height:57px;background-color:#e40c2b;background-image:repeating-linear-gradient(45deg,rgba(255,255,255,0.012) 0px,rgba(0,0,0,0.016) 45px,rgba(255,255,255,0.012) 90px)"></div>
<div style="position:absolute;left:20px;top:213px;width:811.3px;height:787px;background:#fff;border-radius:5.5px;box-shadow:0 0 0 1px rgba(195,195,195,0.85),0 2px 3px rgba(0,0,0,0.12)"></div>
<div style="position:absolute;left:48px;top:235px;width:755px;height:51px;background:#f3f3f3;border-radius:6px"></div>
<svg style="position:absolute;left:62px;top:253px;overflow:visible" width="26" height="16"><polyline points="3.45,3.45 13.0,12.55 22.55,3.45" fill="none" stroke="#747474" stroke-width="2.9" stroke-linecap="butt" stroke-linejoin="miter"/></svg>
<div style="position:absolute;left:66px;top:409.5px;width:340px;height:1.0px;background:#e5e5e5"></div>
<svg style="position:absolute;left:526.7px;top:310.8px" width="20" height="20" viewBox="0 0 20 20"><circle cx="10" cy="10" r="10" fill="#747474"/><circle cx="10.2" cy="5.6" r="1.5" fill="#fff"/><path d="M8.2 8.2h3v5.6h1.1v1.6H8.2v-1.6h1.1v-4H8.2z" fill="#fff"/></svg>
<div style="position:absolute;left:445px;top:409.5px;width:341px;height:1.0px;background:#e5e5e5"></div>
<div style="position:absolute;left:66px;top:487px;width:720px;height:1px;background:#e5e5e5"></div>
<svg style="position:absolute;left:212.7px;top:498.8px" width="20" height="20" viewBox="0 0 20 20"><circle cx="10" cy="10" r="10" fill="#747474"/><circle cx="10.2" cy="5.6" r="1.5" fill="#fff"/><path d="M8.2 8.2h3v5.6h1.1v1.6H8.2v-1.6h1.1v-4H8.2z" fill="#fff"/></svg>
<div style="position:absolute;left:66px;top:564px;width:720px;height:1px;background:#e5e5e5"></div>
<svg style="position:absolute;left:348.7px;top:575.8px" width="20" height="20" viewBox="0 0 20 20"><circle cx="10" cy="10" r="10" fill="#747474"/><circle cx="10.2" cy="5.6" r="1.5" fill="#fff"/><path d="M8.2 8.2h3v5.6h1.1v1.6H8.2v-1.6h1.1v-4H8.2z" fill="#fff"/></svg>
<div style="position:absolute;left:66px;top:641.5px;width:720px;height:1.0px;background:#e5e5e5"></div>
<div style="position:absolute;left:66px;top:718px;width:720px;height:1px;background:#e5e5e5"></div>
<div style="position:absolute;left:66px;top:930.3px;width:720px;height:1.0px;background:#e5e5e5"></div>
<div style="position:absolute;left:851.5px;top:213px;width:1688.5px;height:428.6px;background:#fff;border-radius:5.5px;box-shadow:0 0 0 1px rgba(195,195,195,0.85),0 2px 3px rgba(0,0,0,0.12)"></div>
<svg style="position:absolute;left:879px;top:239px" width="38" height="38" viewBox="0 0 38 38"><rect width="38" height="38" rx="5.5" fill="#3dbccb"/><path d="M15 8h8v6.6h-2.4V18h7v6.2h2.9v6.9h-8.6v-6.9h2.7V21H13v3.2h3.2v6.9H7.4v-6.9h3.3V18h6.7v-3.4H15z" fill="#fff"/></svg>
<div style="position:absolute;left:2314px;top:234px;width:199.5px;height:49.5px;box-sizing:border-box;border:1.5px solid #c9c9c9;border-radius:7px;background:#fff"></div>
<div style="position:absolute;left:2362.65px;top:234px;width:1.5px;height:49.5px;background:#c9c9c9"></div>
<div style="position:absolute;left:2412.55px;top:234px;width:1.5px;height:49.5px;background:#c9c9c9"></div>
<div style="position:absolute;left:2462.05px;top:234px;width:1.5px;height:49.5px;background:#c9c9c9"></div>
<svg style="position:absolute;left:2314px;top:234px" width="50" height="50"><rect x="17" y="17.5" width="18" height="2.6" rx="1" fill="#747474"/><rect x="17" y="31" width="18" height="2.6" rx="1" fill="#747474"/><rect x="25.2" y="21.2" width="1.9" height="8.5" fill="#747474"/><rect x="22" y="24.3" width="8" height="2.5" fill="#747474"/></svg>
<svg style="position:absolute;left:2363.4px;top:234px" width="50" height="50"><rect x="16.6" y="17.5" width="18" height="2.6" rx="1" fill="#747474"/><rect x="16.6" y="31" width="18" height="2.6" rx="1" fill="#747474"/><rect x="21.6" y="24.3" width="8" height="2.5" rx="0.8" fill="#747474"/></svg>
<svg style="position:absolute;left:2426.5px;top:251.60000000000002px" width="24" height="16" viewBox="0 0 24 16"><path d="M0.5 8C3.2 3.2 7.2 0.6 12 0.6S20.8 3.2 23.5 8C20.8 12.8 16.8 15.4 12 15.4S3.2 12.8 0.5 8z" fill="#747474"/><circle cx="12" cy="8" r="4.65" fill="#fff"/><circle cx="12" cy="8" r="3.2" fill="#747474"/></svg>
<svg style="position:absolute;left:2476px;top:247.75px" width="24" height="24" viewBox="0 0 24 24"><path d="M17.08 18.05A7.9 7.9 0 1 1 18.3 7.1" fill="none" stroke="#747474" stroke-width="2.4" stroke-linecap="round"/><path d="M19.1 2.05H21V11H12.6V9.2H16.6L19.1 6.4z" fill="#747474"/></svg>
<div style="position:absolute;left:872px;top:303px;width:1648px;height:54.80000000000001px;background:#f3f3f3"></div>
<div style="position:absolute;left:872px;top:356.8px;width:1648px;height:1.3000000000000114px;background:#dddddd"></div>
<div style="position:absolute;left:1262.9px;top:303px;width:1.199999999999818px;height:50.80000000000001px;background:#bababa"></div>
<div style="position:absolute;left:1654.8000000000002px;top:303px;width:1.199999999999818px;height:50.80000000000001px;background:#bababa"></div>
<div style="position:absolute;left:2046.4px;top:303px;width:1.199999999999818px;height:50.80000000000001px;background:#bababa"></div>
<div style="position:absolute;left:2438.6px;top:303px;width:1.199999999999818px;height:50.80000000000001px;background:#bababa"></div>
<svg style="position:absolute;left:1220px;top:322.5px;overflow:visible" width="23" height="14.800000000000011"><polyline points="3.15,3.15 11.5,11.650000000000011 19.85,3.15" fill="none" stroke="#747474" stroke-width="2.3" stroke-linecap="butt" stroke-linejoin="miter"/></svg>
<svg style="position:absolute;left:1612.4px;top:322.5px;overflow:visible" width="23.0" height="14.800000000000011"><polyline points="3.15,3.15 11.5,11.650000000000011 19.85,3.15" fill="none" stroke="#747474" stroke-width="2.3" stroke-linecap="butt" stroke-linejoin="miter"/></svg>
<svg style="position:absolute;left:2004.4px;top:322.5px;overflow:visible" width="23.0" height="14.800000000000011"><polyline points="3.15,3.15 11.5,11.650000000000011 19.85,3.15" fill="none" stroke="#747474" stroke-width="2.3" stroke-linecap="butt" stroke-linejoin="miter"/></svg>
<svg style="position:absolute;left:2396px;top:322.5px;overflow:visible" width="23" height="14.800000000000011"><polyline points="3.15,3.15 11.5,11.650000000000011 19.85,3.15" fill="none" stroke="#747474" stroke-width="2.3" stroke-linecap="butt" stroke-linejoin="miter"/></svg>
<div style="position:absolute;left:872px;top:409.0px;width:1648px;height:1.0px;background:#e5e5e5"></div>
<div style="position:absolute;left:872px;top:462.2px;width:1648px;height:1.0px;background:#e5e5e5"></div>
<div style="position:absolute;left:872px;top:514.9px;width:1648px;height:1.0px;background:#e5e5e5"></div>
<div style="position:absolute;left:872px;top:567.3px;width:1648px;height:1.0px;background:#e5e5e5"></div>
<div style="position:absolute;left:872px;top:620.9px;width:1648px;height:1.0px;background:#e5e5e5"></div>
<svg style="position:absolute;left:911.5px;top:380.5px;overflow:visible" width="20.5" height="13.699999999999989"><polyline points="2.95,2.95 10.25,10.74999999999999 17.55,2.95" fill="none" stroke="#747474" stroke-width="1.9" stroke-linecap="butt" stroke-linejoin="miter"/></svg>
<svg style="position:absolute;left:937.5px;top:432.9px;overflow:visible" width="20.5" height="13.699999999999989"><polyline points="2.95,2.95 10.25,10.74999999999999 17.55,2.95" fill="none" stroke="#747474" stroke-width="1.9" stroke-linecap="butt" stroke-linejoin="miter"/></svg>
<svg style="position:absolute;left:963.0px;top:485.8px;overflow:visible" width="20.5" height="13.699999999999989"><polyline points="2.95,2.95 10.25,10.74999999999999 17.55,2.95" fill="none" stroke="#747474" stroke-width="1.9" stroke-linecap="butt" stroke-linejoin="miter"/></svg>
<div style="position:absolute;left:2464.3px;top:368px;width:31.59999999999991px;height:31.600000000000023px;box-sizing:border-box;border:1.5px solid #c9c9c9;border-radius:6px;background:#fff"></div>
<svg style="position:absolute;left:2472.60px;top:380.60px" width="15" height="10"><path d="M0.6 0.4h13.8l-6.9 9z" fill="#747474"/></svg>
<div style="position:absolute;left:2464.3px;top:421px;width:31.59999999999991px;height:31.600000000000023px;box-sizing:border-box;border:1.5px solid #c9c9c9;border-radius:6px;background:#fff"></div>
<svg style="position:absolute;left:2472.60px;top:433.60px" width="15" height="10"><path d="M0.6 0.4h13.8l-6.9 9z" fill="#747474"/></svg>
<div style="position:absolute;left:2464.3px;top:473.8px;width:31.59999999999991px;height:31.600000000000023px;box-sizing:border-box;border:1.5px solid #c9c9c9;border-radius:6px;background:#fff"></div>
<svg style="position:absolute;left:2472.60px;top:486.40px" width="15" height="10"><path d="M0.6 0.4h13.8l-6.9 9z" fill="#747474"/></svg>
<div style="position:absolute;left:2464.3px;top:526px;width:31.59999999999991px;height:31.600000000000023px;box-sizing:border-box;border:1.5px solid #c9c9c9;border-radius:6px;background:#fff"></div>
<svg style="position:absolute;left:2472.60px;top:538.60px" width="15" height="10"><path d="M0.6 0.4h13.8l-6.9 9z" fill="#747474"/></svg>
<div style="position:absolute;left:2464.3px;top:578.5px;width:31.59999999999991px;height:31.600000000000023px;box-sizing:border-box;border:1.5px solid #c9c9c9;border-radius:6px;background:#fff"></div>
<svg style="position:absolute;left:2472.60px;top:591.10px" width="15" height="10"><path d="M0.6 0.4h13.8l-6.9 9z" fill="#747474"/></svg>
<div style="position:absolute;left:851.5px;top:662.5px;width:1688.5px;height:217.5px;background:#fff;border-radius:5.5px;box-shadow:0 0 0 1px rgba(195,195,195,0.85),0 2px 3px rgba(0,0,0,0.12)"></div>
<svg style="position:absolute;left:879px;top:689px" width="38" height="38" viewBox="0 0 38 38"><rect width="38" height="38" rx="5.5" fill="#2f73a0"/><rect x="8.1" y="9.2" width="21.6" height="21.6" rx="3" fill="#fff"/><rect x="12.6" y="7.4" width="12.8" height="6.6" rx="2.6" fill="#fff" stroke="#2f73a0" stroke-width="1.8"/><path d="M14.3 18h9.5l-3.9 5v3.6h-1.7V23z" fill="#2f73a0"/></svg>
<div style="position:absolute;left:2038px;top:682.4px;width:277px;height:51.200000000000045px;box-sizing:border-box;border:1.5px solid #c9c9c9;border-radius:7px 0 0 7px;background:#f3f3f3"></div>
<div style="position:absolute;left:2313.5px;top:682.4px;width:200.0px;height:51.200000000000045px;box-sizing:border-box;border:1.5px solid #c9c9c9;border-left:none;border-radius:0 7px 7px 0;background:#fff"></div>
<div style="position:absolute;left:2313.25px;top:682.4px;width:1.5px;height:51.200000000000045px;background:#c9c9c9"></div>
<div style="position:absolute;left:2363.25px;top:682.4px;width:1.5px;height:51.200000000000045px;background:#c9c9c9"></div>
<div style="position:absolute;left:2412.75px;top:682.4px;width:1.5px;height:51.200000000000045px;background:#c9c9c9"></div>
<div style="position:absolute;left:2462.25px;top:682.4px;width:1.5px;height:51.200000000000045px;background:#c9c9c9"></div>
<svg style="position:absolute;left:2327px;top:696px" width="24" height="24" viewBox="0 0 24 24"><path d="M2.1 22.8l1.6-6.2 4.6 4.6z" fill="#747474"/><path d="M4.9 15.3L15.4 4.8l4.6 4.6L9.5 19.9z" fill="#747474"/><path d="M16.6 3.6l1.6-1.6c0.6-0.6 1.5-0.6 2.1 0l2.5 2.5c0.6 0.6 0.6 1.5 0 2.1l-1.6 1.6z" fill="#747474"/></svg>
<div style="position:absolute;left:2379.8px;top:707.3px;width:18.299999999999727px;height:2.5px;background:#747474"></div>
<div style="position:absolute;left:2387.7px;top:699px;width:2.5px;height:19px;background:#747474"></div>
<svg style="position:absolute;left:2426.5px;top:700.4px" width="24" height="16" viewBox="0 0 24 16"><path d="M0.5 8C3.2 3.2 7.2 0.6 12 0.6S20.8 3.2 23.5 8C20.8 12.8 16.8 15.4 12 15.4S3.2 12.8 0.5 8z" fill="#747474"/><circle cx="12" cy="8" r="4.65" fill="#fff"/><circle cx="12" cy="8" r="3.2" fill="#747474"/></svg>
<svg style="position:absolute;left:2476.0px;top:696.7px" width="24" height="24" viewBox="0 0 24 24"><path d="M17.08 18.05A7.9 7.9 0 1 1 18.3 7.1" fill="none" stroke="#747474" stroke-width="2.4" stroke-linecap="round"/><path d="M19.1 2.05H21V11H12.6V9.2H16.6L19.1 6.4z" fill="#747474"/></svg>
<div style="position:absolute;left:872px;top:753px;width:1648px;height:53.5px;background:#f3f3f3"></div>
<div style="position:absolute;left:872px;top:805.5px;width:1648px;height:1.2999999999999545px;background:#dddddd"></div>
<div style="position:absolute;left:1063.0px;top:753px;width:1.199999999999818px;height:49.5px;background:#bababa"></div>
<div style="position:absolute;left:1360.0px;top:753px;width:1.199999999999818px;height:49.5px;background:#bababa"></div>
<div style="position:absolute;left:1658.1000000000001px;top:753px;width:1.199999999999818px;height:49.5px;background:#bababa"></div>
<div style="position:absolute;left:1956.1000000000001px;top:753px;width:1.199999999999818px;height:49.5px;background:#bababa"></div>
<div style="position:absolute;left:2195.9px;top:753px;width:1.199999999999818px;height:49.5px;background:#bababa"></div>
<div style="position:absolute;left:2436.0px;top:753px;width:1.199999999999818px;height:49.5px;background:#bababa"></div>
<svg style="position:absolute;left:1020.4000000000001px;top:770.9000000000001px;overflow:visible" width="23.0" height="14.799999999999955"><polyline points="3.15,3.15 11.5,11.649999999999954 19.85,3.15" fill="none" stroke="#747474" stroke-width="2.3" stroke-linecap="butt" stroke-linejoin="miter"/></svg>
<svg style="position:absolute;left:1318.6px;top:770.9000000000001px;overflow:visible" width="23.0" height="14.799999999999955"><polyline points="3.15,3.15 11.5,11.649999999999954 19.85,3.15" fill="none" stroke="#747474" stroke-width="2.3" stroke-linecap="butt" stroke-linejoin="miter"/></svg>
<svg style="position:absolute;left:1615.8px;top:770.9000000000001px;overflow:visible" width="23.0" height="14.799999999999955"><polyline points="3.15,3.15 11.5,11.649999999999954 19.85,3.15" fill="none" stroke="#747474" stroke-width="2.3" stroke-linecap="butt" stroke-linejoin="miter"/></svg>
<svg style="position:absolute;left:1913px;top:770.9000000000001px;overflow:visible" width="23" height="14.799999999999955"><polyline points="3.15,3.15 11.5,11.649999999999954 19.85,3.15" fill="none" stroke="#747474" stroke-width="2.3" stroke-linecap="butt" stroke-linejoin="miter"/></svg>
<svg style="position:absolute;left:2153px;top:770.9000000000001px;overflow:visible" width="23" height="14.799999999999955"><polyline points="3.15,3.15 11.5,11.649999999999954 19.85,3.15" fill="none" stroke="#747474" stroke-width="2.3" stroke-linecap="butt" stroke-linejoin="miter"/></svg>
<svg style="position:absolute;left:2393.5px;top:770.9000000000001px;overflow:visible" width="23.0" height="14.799999999999955"><polyline points="3.15,3.15 11.5,11.649999999999954 19.85,3.15" fill="none" stroke="#747474" stroke-width="2.3" stroke-linecap="butt" stroke-linejoin="miter"/></svg>
<div style="position:absolute;left:872px;top:858.5px;width:1648px;height:1.0px;background:#e5e5e5"></div>
<div style="position:absolute;left:2519px;top:806.5px;width:1px;height:53.0px;background:#e5e5e5"></div>
<div style="position:absolute;left:2461px;top:818.3px;width:31.59999999999991px;height:31.600000000000023px;box-sizing:border-box;border:1.5px solid #c9c9c9;border-radius:6px;background:#fff"></div>
<svg style="position:absolute;left:2469.30px;top:830.90px" width="15" height="10"><path d="M0.6 0.4h13.8l-6.9 9z" fill="#747474"/></svg>
<div style="position:absolute;left:851.5px;top:900.3px;width:1688.5px;height:99.70000000000005px;box-sizing:border-box;border:1.5px solid #fff;background:#f3f3f3;border-radius:5.5px;box-shadow:0 0 0 1px rgba(195,195,195,0.85),0 2px 3px rgba(0,0,0,0.12)"></div>
<div style="position:absolute;left:879px;top:933px;width:38px;height:47px;background:#4fbbd0;border-radius:6px"></div>
<div style="position:absolute;left:895.5px;top:939.5px;width:4.5px;height:4.5px;background:#fff;border-radius:1px"></div>
<div style="position:absolute;left:2416.5px;top:927.3px;width:96.5px;height:52.700000000000045px;box-sizing:border-box;border:1.5px solid #c9c9c9;border-radius:7px;background:#fff"></div>
<div class="t" style="left:118.0px;top:33.87px;font-size:21.8px;line-height:21.8px;font-weight:400;color:#3e3e3e;letter-spacing:-0.339px;">Data Retention</div>
<div class="t" style="left:117.5px;top:58.20px;font-size:30px;line-height:30px;font-weight:700;color:#181818;letter-spacing:-0.675px;">UAT - Account Data Retention Mapping</div>
<div class="t" style="left:2202.7px;top:53.63px;font-size:21.5px;line-height:21.5px;font-weight:400;color:#0b6fcf;letter-spacing:-0.116px;">Validate</div>
<div class="t" style="left:2333.0px;top:53.63px;font-size:21.5px;line-height:21.5px;font-weight:400;color:#0b6fcf;letter-spacing:-0.487px;">Edit</div>
<div class="t" style="left:2423.0px;top:53.63px;font-size:21.5px;line-height:21.5px;font-weight:400;color:#0b6fcf;letter-spacing:-0.231px;">Delete</div>
<div class="t" style="left:935.7px;top:154.62px;font-size:21.5px;line-height:21.5px;font-weight:400;color:#ffffff;letter-spacing:0.223px;">Validation failed. Check &#x27;Error Message&#x27; under &#x27;Information&#x27; section</div>
<div class="t" style="left:101.6px;top:247.70px;font-size:26px;line-height:26px;font-weight:400;color:#181818;letter-spacing:0.062px;">Information</div>
<div class="t" style="left:72.8px;top:311.54px;font-size:19.6px;line-height:19.6px;font-weight:400;color:#444444;letter-spacing:0.121px;">Data Retention Name</div>
<div class="t" style="left:72.3px;top:345.22px;font-size:22.8px;line-height:22.8px;font-weight:400;color:#181818;letter-spacing:0.212px;">UAT - Account Data Retention</div>
<div class="t" style="left:72.3px;top:379.12px;font-size:22.8px;line-height:22.8px;font-weight:400;color:#181818;letter-spacing:0.141px;">Mapping</div>
<div class="t" style="left:451.8px;top:311.54px;font-size:19.6px;line-height:19.6px;font-weight:400;color:#444444;letter-spacing:0.532px;">Object</div>
<div class="t" style="left:451.8px;top:345.22px;font-size:22.8px;line-height:22.8px;font-weight:400;color:#181818;letter-spacing:0.271px;">Account</div>
<div class="t" style="left:72.3px;top:421.54px;font-size:19.6px;line-height:19.6px;font-weight:400;color:#444444;letter-spacing:0.468px;">Description</div>
<div class="t" style="left:72.3px;top:455.92px;font-size:22.8px;line-height:22.8px;font-weight:400;color:#181818;letter-spacing:0.153px;">Account Data Retention Mapping</div>
<div class="t" style="left:72.3px;top:499.54px;font-size:19.6px;line-height:19.6px;font-weight:400;color:#444444;letter-spacing:0.049px;">Where Clause</div>
<div class="t" style="left:72.3px;top:533.42px;font-size:22.8px;line-height:22.8px;font-weight:400;color:#181818;letter-spacing:-0.005px;">Ready_for_Retention__c = True&#x27;</div>
<div class="t" style="left:72.3px;top:577.24px;font-size:19.6px;line-height:19.6px;font-weight:400;color:#444444;letter-spacing:0.341px;">Cross Object Filter Condition</div>
<div class="t" style="left:72.3px;top:609.92px;font-size:22.8px;line-height:22.8px;font-weight:400;color:#181818;letter-spacing:-0.601px;">1 AND 2</div>
<div class="t" style="left:72.3px;top:653.54px;font-size:19.6px;line-height:19.6px;font-weight:400;color:#444444;letter-spacing:0.328px;">Status</div>
<div class="t" style="left:72.3px;top:687.12px;font-size:22.8px;line-height:22.8px;font-weight:400;color:#181818;letter-spacing:0.234px;">Not Validated</div>
<div class="t" style="left:72.7px;top:730.54px;font-size:19.6px;line-height:19.6px;font-weight:400;color:#444444;letter-spacing:0.125px;">Error Message</div>
<div class="t" style="left:72.3px;top:764.02px;font-size:22.8px;line-height:22.8px;font-weight:400;color:#181818;letter-spacing:-0.020px;">Retention Errors:</div>
<div class="t" style="left:72.3px;top:797.62px;font-size:22.8px;line-height:22.8px;font-weight:400;color:#181818;letter-spacing:-0.016px;">1) Incorrect Where Clause.</div>
<div class="t" style="left:72.3px;top:864.42px;font-size:22.8px;line-height:22.8px;font-weight:400;color:#181818;letter-spacing:-0.531px;">RTBF Errors:</div>
<div class="t" style="left:72.3px;top:898.62px;font-size:22.8px;line-height:22.8px;font-weight:400;color:#181818;letter-spacing:0.183px;">1) Incorrect Cross Object Filter condition.</div>
<div class="t" style="left:936.9px;top:246.00px;font-size:26px;line-height:26px;font-weight:700;color:#181818;letter-spacing:-0.035px;">Mapping Hierarchy</div>
<div class="t" style="left:885.5px;top:318.97px;font-size:21.8px;line-height:21.8px;font-weight:700;color:#444444;letter-spacing:-0.806px;">OBJECT NAME</div>
<div class="t" style="left:1277.4px;top:318.97px;font-size:21.8px;line-height:21.8px;font-weight:700;color:#444444;letter-spacing:-0.623px;">RELATIONSHIP FIELD</div>
<div class="t" style="left:1669.2px;top:318.97px;font-size:21.8px;line-height:21.8px;font-weight:700;color:#444444;letter-spacing:-1.001px;">WHERE CLAUSE</div>
<div class="t" style="left:2061.1px;top:318.97px;font-size:21.8px;line-height:21.8px;font-weight:700;color:#444444;letter-spacing:-0.572px;">ACTION</div>
<div class="t" style="left:946.7px;top:373.93px;font-size:21.5px;line-height:21.5px;font-weight:400;color:#181818;letter-spacing:0.102px;">Account</div>
<div class="t" style="left:2061.1px;top:373.93px;font-size:21.5px;line-height:21.5px;font-weight:400;color:#181818;letter-spacing:0.175px;">Obfuscate</div>
<div class="t" style="left:972.4px;top:426.32px;font-size:21.5px;line-height:21.5px;font-weight:400;color:#181818;letter-spacing:0.215px;">Contact</div>
<div class="t" style="left:1277.4px;top:426.32px;font-size:21.5px;line-height:21.5px;font-weight:400;color:#181818;letter-spacing:0.047px;">AccountId</div>
<div class="t" style="left:1669.2px;top:426.32px;font-size:21.5px;line-height:21.5px;font-weight:400;color:#181818;letter-spacing:0.154px;">FirstName = &#x27;Mariko&#x27;</div>
<div class="t" style="left:2061.1px;top:426.32px;font-size:21.5px;line-height:21.5px;font-weight:400;color:#181818;letter-spacing:0.175px;">Obfuscate</div>
<div class="t" style="left:997.5px;top:479.23px;font-size:21.5px;line-height:21.5px;font-weight:400;color:#181818;letter-spacing:-1.068px;">Case</div>
<div class="t" style="left:1277.4px;top:479.23px;font-size:21.5px;line-height:21.5px;font-weight:400;color:#181818;letter-spacing:0.284px;">ContactId</div>
<div class="t" style="left:2061.1px;top:479.23px;font-size:21.5px;line-height:21.5px;font-weight:400;color:#181818;letter-spacing:0.175px;">Obfuscate</div>
<div class="t" style="left:1023.4px;top:532.13px;font-size:21.5px;line-height:21.5px;font-weight:400;color:#181818;letter-spacing:-0.209px;">CaseComment</div>
<div class="t" style="left:1277.4px;top:532.13px;font-size:21.5px;line-height:21.5px;font-weight:400;color:#181818;letter-spacing:-0.212px;">ParentId</div>
<div class="t" style="left:2061.1px;top:532.13px;font-size:21.5px;line-height:21.5px;font-weight:400;color:#181818;letter-spacing:0.175px;">Obfuscate</div>
<div class="t" style="left:997.5px;top:584.83px;font-size:21.5px;line-height:21.5px;font-weight:400;color:#181818;letter-spacing:-0.369px;">User</div>
<div class="t" style="left:1277.4px;top:584.83px;font-size:21.5px;line-height:21.5px;font-weight:400;color:#181818;letter-spacing:0.284px;">ContactId</div>
<div class="t" style="left:2061.1px;top:584.83px;font-size:21.5px;line-height:21.5px;font-weight:400;color:#181818;letter-spacing:0.175px;">Obfuscate</div>
<div class="t" style="left:936.7px;top:695.00px;font-size:26px;line-height:26px;font-weight:700;color:#181818;letter-spacing:0.015px;">Cross-Object Filters</div>
<div class="t" style="left:2059.3px;top:698.73px;font-size:21.5px;line-height:21.5px;font-weight:400;color:#444444;letter-spacing:-0.580px;">1 AND 2</div>
<div class="t" style="left:885.5px;top:768.37px;font-size:21.8px;line-height:21.8px;font-weight:700;color:#444444;letter-spacing:-1.178px;">SEQUENCE</div>
<div class="t" style="left:1077.0px;top:768.37px;font-size:21.8px;line-height:21.8px;font-weight:700;color:#444444;letter-spacing:-0.766px;">OBJECT NAME</div>
<div class="t" style="left:1375.0px;top:768.37px;font-size:21.8px;line-height:21.8px;font-weight:700;color:#444444;letter-spacing:-0.623px;">RELATIONSHIP FIELD</div>
<div class="t" style="left:1672.8px;top:768.37px;font-size:21.8px;line-height:21.8px;font-weight:700;color:#444444;letter-spacing:-1.001px;">WHERE CLAUSE</div>
<div class="t" style="left:1970.0px;top:768.37px;font-size:21.8px;line-height:21.8px;font-weight:700;color:#444444;letter-spacing:-1.117px;">OPERATOR</div>
<div class="t" style="left:2210.5px;top:768.37px;font-size:21.8px;line-height:21.8px;font-weight:700;color:#444444;letter-spacing:-0.536px;">QUALIFY COUNT</div>
<div class="t" style="left:945.2px;top:823.93px;font-size:21.5px;line-height:21.5px;font-weight:400;color:#181818;letter-spacing:0.000px;">1</div>
<div class="t" style="left:1077.7px;top:823.93px;font-size:21.5px;line-height:21.5px;font-weight:400;color:#181818;letter-spacing:-1.068px;">Case</div>
<div class="t" style="left:1375.0px;top:823.93px;font-size:21.5px;line-height:21.5px;font-weight:400;color:#181818;letter-spacing:0.109px;">AccountId</div>
<div class="t" style="left:1672.8px;top:823.93px;font-size:21.5px;line-height:21.5px;font-weight:400;color:#181818;letter-spacing:0.232px;">Status = &#x27;Closed&#x27;</div>
<div class="t" style="left:1970.0px;top:823.93px;font-size:21.5px;line-height:21.5px;font-weight:400;color:#181818;letter-spacing:-0.570px;">Equals</div>
<div class="t" style="left:2210.5px;top:823.93px;font-size:21.5px;line-height:21.5px;font-weight:400;color:#181818;letter-spacing:0.000px;">0</div>
<div style="position:absolute;left:7px;top:103.3px;width:2531.5px;height:130.2px;box-sizing:border-box;border:5px solid #fe2a1c"></div>
<div style="position:absolute;left:10.6px;top:643.4px;width:400.59999999999997px;height:74.20000000000005px;box-sizing:border-box;border:5.3px solid #fe2a1c"></div>
<div style="position:absolute;left:8.6px;top:714.3px;width:811.4px;height:224.70000000000005px;box-sizing:border-box;border:5.2px solid #fe2a1c"></div>
</body></html>
